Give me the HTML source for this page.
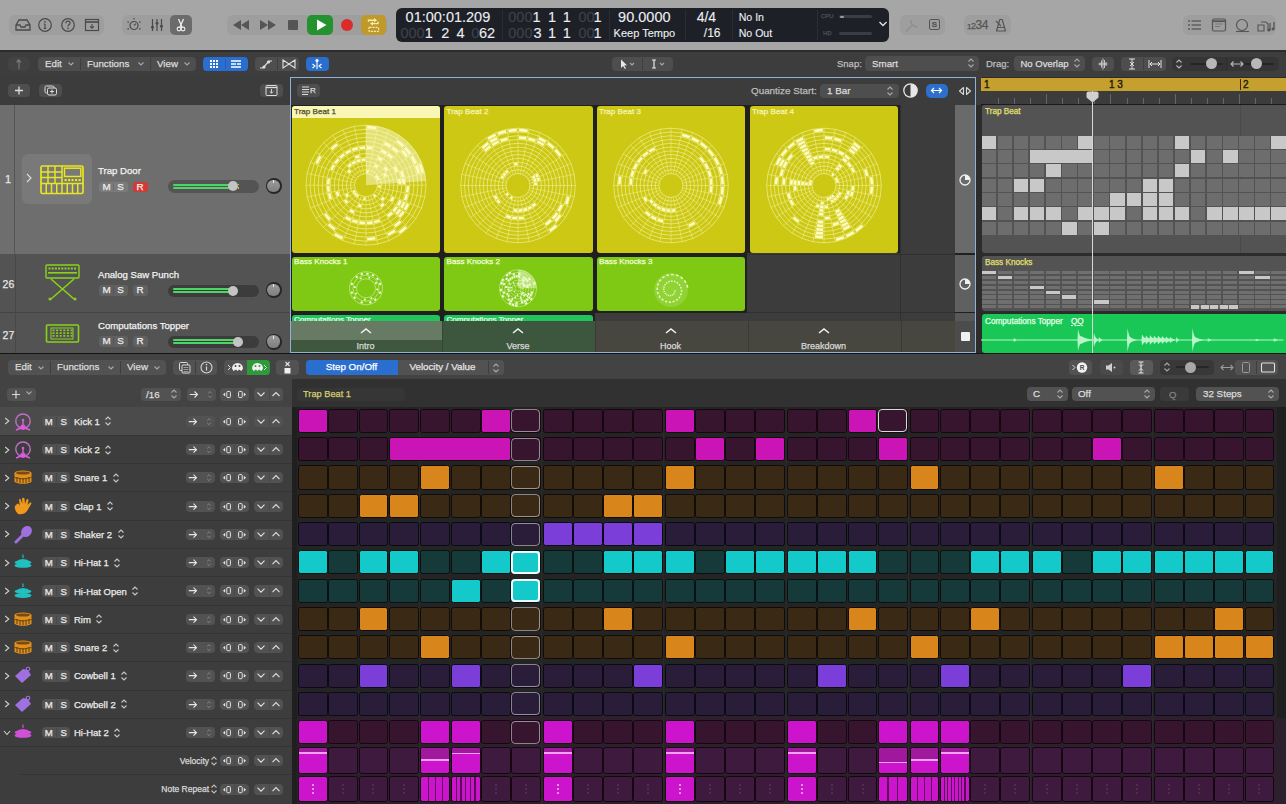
<!DOCTYPE html>
<html><head><meta charset="utf-8"><style>
html,body{margin:0;padding:0;}
body{width:1286px;height:804px;overflow:hidden;position:relative;background:#2a2a2a;font-family:"Liberation Sans", sans-serif;}
svg{display:block;}
div{-webkit-text-stroke:0.25px currentColor;}
</style></head><body>
<div style="position:absolute;left:0px;top:0px;width:1286px;height:50px;background:#a6a6a6;"></div><div style="position:absolute;left:9px;top:15px;width:95px;height:20px;background:#9e9e9e;border-radius:6px;"></div><svg style="position:absolute;left:14px;top:17px;" width="18" height="16" viewBox="0 0 18 16"><path d="M2 8 L5 3 H13 L16 8 V13 H2 Z M2 8 H6 L7 10 H11 L12 8 H16" fill="none" stroke="#4a4a4a" stroke-width="1.3"/></svg><svg style="position:absolute;left:37px;top:17px;" width="16" height="16" viewBox="0 0 16 16"><circle cx="8" cy="8" r="6.3" fill="none" stroke="#4a4a4a" stroke-width="1.2"/><path d="M8 7 V11.5 M6.8 11.5 H9.2 M6.8 7 H8" stroke="#4a4a4a" stroke-width="1.2" fill="none"/><circle cx="8" cy="4.8" r="0.9" fill="#4a4a4a"/></svg><svg style="position:absolute;left:60px;top:17px;" width="16" height="16" viewBox="0 0 16 16"><circle cx="8" cy="8" r="6.3" fill="none" stroke="#4a4a4a" stroke-width="1.2"/><path d="M5.9 6.2 Q6 4.2 8 4.2 Q10.1 4.2 10.1 6.1 Q10.1 7.3 8.6 8 Q8 8.4 8 9.4" stroke="#4a4a4a" stroke-width="1.2" fill="none"/><circle cx="8" cy="11.4" r="0.8" fill="#4a4a4a"/></svg><svg style="position:absolute;left:84px;top:18px;" width="16" height="14" viewBox="0 0 16 14"><rect x="1.5" y="1.5" width="13" height="11" fill="none" stroke="#4a4a4a" stroke-width="1.2"/><path d="M1.5 4 H14.5" stroke="#4a4a4a" stroke-width="1.6"/><path d="M8 6 V10 M6 8.3 L8 10.2 L10 8.3" stroke="#4a4a4a" stroke-width="1.1" fill="none"/></svg><div style="position:absolute;left:122px;top:15px;width:70px;height:20px;background:#9e9e9e;border-radius:6px;"></div><svg style="position:absolute;left:125px;top:16px;" width="18" height="18" viewBox="0 0 18 18"><circle cx="9" cy="9.5" r="4" fill="none" stroke="#4a4a4a" stroke-width="1.2"/><path d="M9 9.5 L10.8 7.6" stroke="#4a4a4a" stroke-width="1.1"/><circle cx="3.1110272542658173" cy="12.899999999999999" r="0.8" fill="#4a4a4a"/><circle cx="3.1110272542658173" cy="6.1" r="0.8" fill="#4a4a4a"/><circle cx="8.999999999999998" cy="2.7" r="0.8" fill="#4a4a4a"/><circle cx="14.888972745734181" cy="6.099999999999997" r="0.8" fill="#4a4a4a"/><circle cx="14.888972745734183" cy="12.899999999999999" r="0.8" fill="#4a4a4a"/></svg><svg style="position:absolute;left:149px;top:17px;" width="16" height="16" viewBox="0 0 16 16"><path d="M3.5 2 V14 M8 2 V14 M12.5 2 V14" stroke="#4a4a4a" stroke-width="1.2"/><rect x="2" y="9" width="3" height="2.4" rx="1" fill="#4a4a4a"/><rect x="6.5" y="5" width="3" height="2.4" rx="1" fill="#4a4a4a"/><rect x="11" y="8" width="3" height="2.4" rx="1" fill="#4a4a4a"/></svg><div style="position:absolute;left:170px;top:15px;width:22px;height:20px;background:#6b6b6b;border-radius:5px;"></div><svg style="position:absolute;left:173px;top:17px;" width="16" height="16" viewBox="0 0 16 16"><path d="M5.5 2 L9 10 M10.5 2 L7 10" stroke="#eee" stroke-width="1.3"/><circle cx="6" cy="12" r="1.9" fill="none" stroke="#eee" stroke-width="1.1"/><circle cx="10" cy="12" r="1.9" fill="none" stroke="#eee" stroke-width="1.1"/></svg><div style="position:absolute;left:227px;top:15px;width:160px;height:20px;background:#9e9e9e;border-radius:6px;"></div><svg style="position:absolute;left:231px;top:18px;" width="20" height="14" viewBox="0 0 20 14"><path d="M10 2 L2 7 L10 12 Z M18 2 L10 7 L18 12 Z" fill="#555"/></svg><svg style="position:absolute;left:258px;top:18px;" width="20" height="14" viewBox="0 0 20 14"><path d="M2 2 L10 7 L2 12 Z M10 2 L18 7 L10 12 Z" fill="#555"/></svg><div style="position:absolute;left:288px;top:20px;width:10px;height:10px;background:#555;border-radius:1px;"></div><div style="position:absolute;left:307px;top:15px;width:26px;height:20px;background:#23922f;border-radius:5px;"></div><svg style="position:absolute;left:313px;top:17px;" width="16" height="16" viewBox="0 0 16 16"><path d="M4 2.5 L13.5 8 L4 13.5 Z" fill="#fff"/></svg><div style="position:absolute;left:341px;top:19px;width:12px;height:12px;background:#dc2b2b;border-radius:50%;"></div><div style="position:absolute;left:360.6px;top:15.2px;width:25.4px;height:20.2px;background:#bf9a2a;border-radius:5px;"></div><svg style="position:absolute;left:360.6px;top:15.2px;" width="25.4" height="20.2" viewBox="0 0 25.4 20.2"><path d="M7.5 6.8 V5.2 H14" fill="none" stroke="#f8eab0" stroke-width="1.4"/><path d="M13 3 L16 5.2 L13 7.4 Z" fill="#f8eab0"/><path d="M17 6.8 V8.6 H11" fill="none" stroke="#f8eab0" stroke-width="1.4"/><path d="M12 6.4 L9 8.6 L12 10.8 Z" fill="#f8eab0"/><rect x="8" y="12.4" width="9.6" height="4" rx="0.6" fill="none" stroke="#f8eab0" stroke-width="1.2" stroke-dasharray="2 1"/></svg><div style="position:absolute;left:396px;top:8px;width:493px;height:34px;background:#1e2027;border-radius:6px;"></div><div style="position:absolute;left:502px;top:10px;width:1px;height:30px;background:#2a2d35;"></div><div style="position:absolute;left:609px;top:10px;width:1px;height:30px;background:#2a2d35;"></div><div style="position:absolute;left:685px;top:10px;width:1px;height:30px;background:#2a2d35;"></div><div style="position:absolute;left:732px;top:10px;width:1px;height:30px;background:#2a2d35;"></div><div style="position:absolute;left:817px;top:10px;width:1px;height:30px;background:#2a2d35;"></div><div style="position:absolute;left:405.59px;top:8.5px;font-size:14.5px;line-height:16.5px;color:#eceef2;white-space:nowrap;line-height:16.5px;-webkit-text-stroke:0.1px currentColor;">01:00:01.209</div><div style="position:absolute;left:400.49px;top:25px;font-size:14.5px;line-height:16.5px;color:#3f424a;white-space:nowrap;line-height:16.5px;-webkit-text-stroke:0.1px currentColor;">000</div><div style="position:absolute;left:424.82px;top:25px;font-size:14.5px;line-height:16.5px;color:#eceef2;white-space:nowrap;line-height:16.5px;-webkit-text-stroke:0.1px currentColor;">1</div><div style="position:absolute;left:441.17px;top:25px;font-size:14.5px;line-height:16.5px;color:#eceef2;white-space:nowrap;line-height:16.5px;-webkit-text-stroke:0.1px currentColor;">2</div><div style="position:absolute;left:456.56px;top:25px;font-size:14.5px;line-height:16.5px;color:#eceef2;white-space:nowrap;line-height:16.5px;-webkit-text-stroke:0.1px currentColor;">4</div><div style="position:absolute;left:471.29px;top:25px;font-size:14.5px;line-height:16.5px;color:#3f424a;white-space:nowrap;line-height:16.5px;-webkit-text-stroke:0.1px currentColor;">0</div><div style="position:absolute;left:479.02px;top:25px;font-size:14.5px;line-height:16.5px;color:#eceef2;white-space:nowrap;line-height:16.5px;-webkit-text-stroke:0.1px currentColor;">62</div><div style="position:absolute;left:508.29px;top:8.5px;font-size:14.5px;line-height:16.5px;color:#3f424a;white-space:nowrap;line-height:16.5px;-webkit-text-stroke:0.1px currentColor;">000</div><div style="position:absolute;left:532.42px;top:8.5px;font-size:14.5px;line-height:16.5px;color:#eceef2;white-space:nowrap;line-height:16.5px;-webkit-text-stroke:0.1px currentColor;">1</div><div style="position:absolute;left:548.12px;top:8.5px;font-size:14.5px;line-height:16.5px;color:#eceef2;white-space:nowrap;line-height:16.5px;-webkit-text-stroke:0.1px currentColor;">1</div><div style="position:absolute;left:562.72px;top:8.5px;font-size:14.5px;line-height:16.5px;color:#eceef2;white-space:nowrap;line-height:16.5px;-webkit-text-stroke:0.1px currentColor;">1</div><div style="position:absolute;left:578.39px;top:8.5px;font-size:14.5px;line-height:16.5px;color:#3f424a;white-space:nowrap;line-height:16.5px;-webkit-text-stroke:0.1px currentColor;">00</div><div style="position:absolute;left:593.62px;top:8.5px;font-size:14.5px;line-height:16.5px;color:#eceef2;white-space:nowrap;line-height:16.5px;-webkit-text-stroke:0.1px currentColor;">1</div><div style="position:absolute;left:508.29px;top:25px;font-size:14.5px;line-height:16.5px;color:#3f424a;white-space:nowrap;line-height:16.5px;-webkit-text-stroke:0.1px currentColor;">000</div><div style="position:absolute;left:533.42px;top:25px;font-size:14.5px;line-height:16.5px;color:#eceef2;white-space:nowrap;line-height:16.5px;-webkit-text-stroke:0.1px currentColor;">3</div><div style="position:absolute;left:548.12px;top:25px;font-size:14.5px;line-height:16.5px;color:#eceef2;white-space:nowrap;line-height:16.5px;-webkit-text-stroke:0.1px currentColor;">1</div><div style="position:absolute;left:562.72px;top:25px;font-size:14.5px;line-height:16.5px;color:#eceef2;white-space:nowrap;line-height:16.5px;-webkit-text-stroke:0.1px currentColor;">1</div><div style="position:absolute;left:578.39px;top:25px;font-size:14.5px;line-height:16.5px;color:#3f424a;white-space:nowrap;line-height:16.5px;-webkit-text-stroke:0.1px currentColor;">00</div><div style="position:absolute;left:593.62px;top:25px;font-size:14.5px;line-height:16.5px;color:#eceef2;white-space:nowrap;line-height:16.5px;-webkit-text-stroke:0.1px currentColor;">1</div><div style="position:absolute;left:618.12px;top:8.5px;font-size:14.5px;line-height:16.5px;color:#eceef2;white-space:nowrap;line-height:16.5px;-webkit-text-stroke:0.1px currentColor;">90.0000</div><div style="position:absolute;left:613.62px;top:26.5px;font-size:11px;line-height:13px;color:#eceef2;white-space:nowrap;line-height:13px;-webkit-text-stroke:0.1px currentColor;">Keep Tempo</div><div style="position:absolute;left:696.66px;top:9px;font-size:14px;line-height:16px;color:#eceef2;white-space:nowrap;line-height:16px;-webkit-text-stroke:0.1px currentColor;">4/4</div><div style="position:absolute;left:703.8px;top:26px;font-size:12px;line-height:14px;color:#eceef2;white-space:nowrap;line-height:14px;-webkit-text-stroke:0.1px currentColor;">/16</div><div style="position:absolute;left:738.65px;top:10.5px;font-size:10.6px;line-height:12.6px;color:#eceef2;white-space:nowrap;line-height:12.6px;-webkit-text-stroke:0.1px currentColor;">No In</div><div style="position:absolute;left:738.65px;top:27px;font-size:10.6px;line-height:12.6px;color:#eceef2;white-space:nowrap;line-height:12.6px;-webkit-text-stroke:0.1px currentColor;">No Out</div><div style="position:absolute;left:821px;top:13px;font-size:6px;line-height:8px;color:#4d5058;white-space:nowrap;line-height:7px;">CPU</div><div style="position:absolute;left:823px;top:30px;font-size:6px;line-height:8px;color:#4d5058;white-space:nowrap;line-height:7px;">HD</div><div style="position:absolute;left:839px;top:15px;width:33px;height:3px;background:#3a3d45;border-radius:2px;"></div><div style="position:absolute;left:840px;top:15.5px;width:4px;height:2px;background:#9a9ca2;border-radius:1px;"></div><div style="position:absolute;left:839px;top:32px;width:33px;height:3px;background:#3a3d45;border-radius:2px;"></div><svg style="position:absolute;left:878px;top:20px;" width="10" height="8" viewBox="0 0 10 8"><path d="M1.5 2 L5 5.5 L8.5 2" fill="none" stroke="#dfe1e6" stroke-width="1.4"/></svg><div style="position:absolute;left:900px;top:15px;width:45px;height:20px;background:#9e9e9e;border-radius:6px;"></div><svg style="position:absolute;left:904px;top:17px;" width="16" height="16" viewBox="0 0 16 16"><path d="M2.5 14 L8.5 8 M8.5 8 L6.8 4.8 Q6.5 4 7.2 3.6 M8.5 8 L11.8 9.8 Q12.5 10.1 12.9 9.4" stroke="#8d8d8d" stroke-width="1.3" fill="none" stroke-linecap="round"/></svg><div style="position:absolute;left:929px;top:19px;width:11px;height:11px;border:1.3px solid #555;border-radius:2px;box-sizing:border-box;font-size:8px;line-height:9px;text-align:center;color:#555;font-weight:bold;">S</div><div style="position:absolute;left:964px;top:15px;width:47px;height:20px;background:#9e9e9e;border-radius:6px;"></div><div style="position:absolute;left:967px;top:18px;font-size:12px;line-height:14px;color:#555;white-space:nowrap;line-height:14px;letter-spacing:-0.5px;"><span style="font-size:8px">1</span><span style="font-size:9px">2</span>34</div><svg style="position:absolute;left:993px;top:17px;" width="16" height="16" viewBox="0 0 16 16"><path d="M3.5 14 L6.8 2.5 H9.2 L12.5 14 Z M4.5 10.5 H11.5" fill="none" stroke="#555" stroke-width="1.2" stroke-linejoin="round"/><path d="M8 9 L3 4" stroke="#555" stroke-width="1.2"/></svg><div style="position:absolute;left:1183px;top:15px;width:93px;height:20px;background:#9e9e9e;border-radius:6px;"></div><svg style="position:absolute;left:1186px;top:17px;" width="18" height="16" viewBox="0 0 18 16"><circle cx="3" cy="4" r="0.9" fill="#555"/><path d="M5.5 4 H15" stroke="#555" stroke-width="1.3"/><circle cx="3" cy="8" r="0.9" fill="#555"/><path d="M5.5 8 H15" stroke="#555" stroke-width="1.3"/><circle cx="3" cy="12" r="0.9" fill="#555"/><path d="M5.5 12 H15" stroke="#555" stroke-width="1.3"/></svg><svg style="position:absolute;left:1211px;top:17px;" width="16" height="16" viewBox="0 0 16 16"><rect x="1.5" y="2" width="13" height="12" rx="1.5" fill="none" stroke="#555" stroke-width="1.2"/><path d="M1.5 4.2 H14.5" stroke="#555" stroke-width="1.8"/><path d="M4 7 H12 M4 9.5 H9" stroke="#777" stroke-width="1"/></svg><svg style="position:absolute;left:1234px;top:17px;" width="18" height="16" viewBox="0 0 18 16"><circle cx="8" cy="8" r="5.5" fill="none" stroke="#555" stroke-width="1.2"/><path d="M2 14.5 H15" stroke="#555" stroke-width="1.1"/></svg><svg style="position:absolute;left:1256px;top:17px;" width="20" height="16" viewBox="0 0 20 16"><path d="M2 8 H8 V14 H2 Z M5 5 H10 L12 7 V14" fill="none" stroke="#555" stroke-width="1.1"/><path d="M14 6 V13 M18 5 V12" stroke="#555" stroke-width="1.3"/><circle cx="13" cy="13" r="1.5" fill="#555"/><circle cx="17" cy="12" r="1.5" fill="#555"/></svg><div style="position:absolute;left:0px;top:50px;width:1286px;height:27px;background:#3d3d3d;"></div><div style="position:absolute;left:0px;top:50px;width:1286px;height:1.5px;background:#2c2c2c;"></div><div style="position:absolute;left:8px;top:57px;width:22px;height:14px;background:#434343;border-radius:5px;"></div><svg style="position:absolute;left:12px;top:57px;" width="14" height="14" viewBox="0 0 14 14"><path d="M7 12 V5 Q7 3 5 3 M9 5.5 L7 3 L4.5 5.5" fill="none" stroke="#777" stroke-width="1.2"/></svg><div style="position:absolute;left:38px;top:57px;width:158px;height:14px;background:#4e4e4e;border-radius:4px;"></div><div style="position:absolute;left:45px;top:57.5px;font-size:9.75px;line-height:11.75px;color:#dcdcdc;white-space:nowrap;">Edit</div><svg style="position:absolute;left:67px;top:60.0px;" width="8" height="8" viewBox="0 0 8 8"><path d="M1.5 2.5 L4 5 L6.5 2.5" fill="none" stroke="#a8a8a8" stroke-width="1.1"/></svg><div style="position:absolute;left:80px;top:58px;width:1px;height:12px;background:#3e3e3e;"></div><div style="position:absolute;left:87px;top:57.5px;font-size:9.75px;line-height:11.75px;color:#dcdcdc;white-space:nowrap;">Functions</div><svg style="position:absolute;left:137px;top:60.0px;" width="8" height="8" viewBox="0 0 8 8"><path d="M1.5 2.5 L4 5 L6.5 2.5" fill="none" stroke="#a8a8a8" stroke-width="1.1"/></svg><div style="position:absolute;left:150px;top:58px;width:1px;height:12px;background:#3e3e3e;"></div><div style="position:absolute;left:157px;top:57.5px;font-size:9.75px;line-height:11.75px;color:#dcdcdc;white-space:nowrap;">View</div><svg style="position:absolute;left:183px;top:60.0px;" width="8" height="8" viewBox="0 0 8 8"><path d="M1.5 2.5 L4 5 L6.5 2.5" fill="none" stroke="#a8a8a8" stroke-width="1.1"/></svg><div style="position:absolute;left:203px;top:57px;width:45px;height:14px;background:#2a6ed0;border-radius:4px;"></div><div style="position:absolute;left:225px;top:58px;width:1px;height:12px;background:#2560b5;"></div><svg style="position:absolute;left:207px;top:57px;" width="14" height="14" viewBox="0 0 14 14"><rect x="3" y="3" width="2" height="2" fill="#fff"/><rect x="6" y="3" width="2" height="2" fill="#fff"/><rect x="9" y="3" width="2" height="2" fill="#fff"/><rect x="3" y="6" width="2" height="2" fill="#fff"/><rect x="6" y="6" width="2" height="2" fill="#fff"/><rect x="9" y="6" width="2" height="2" fill="#fff"/><rect x="3" y="9" width="2" height="2" fill="#fff"/><rect x="6" y="9" width="2" height="2" fill="#fff"/><rect x="9" y="9" width="2" height="2" fill="#fff"/></svg><svg style="position:absolute;left:229px;top:57px;" width="14" height="14" viewBox="0 0 14 14"><path d="M2 4 H12 M2 7 H7 M8 7 H12 M2 10 H12" stroke="#fff" stroke-width="1.5"/></svg><div style="position:absolute;left:255px;top:57px;width:44px;height:14px;background:#4e4e4e;border-radius:4px;"></div><div style="position:absolute;left:277px;top:58px;width:1px;height:12px;background:#3e3e3e;"></div><svg style="position:absolute;left:258px;top:57px;" width="16" height="14" viewBox="0 0 16 14"><path d="M2 11 H5 L11 4 H14" fill="none" stroke="#e0e0e0" stroke-width="1.2"/><circle cx="6" cy="10" r="1.6" fill="#e0e0e0"/><circle cx="10.5" cy="5" r="1.6" fill="#e0e0e0"/></svg><svg style="position:absolute;left:281px;top:57px;" width="16" height="14" viewBox="0 0 16 14"><path d="M2 3 L8 7 L2 11 Z M14 3 L8 7 L14 11 Z" fill="none" stroke="#e0e0e0" stroke-width="1.1"/></svg><div style="position:absolute;left:306px;top:57px;width:23px;height:14px;background:#2a6ed0;border-radius:4px;"></div><svg style="position:absolute;left:310px;top:57px;" width="14" height="14" viewBox="0 0 14 14"><circle cx="7" cy="3.5" r="1.6" fill="#fff"/><path d="M7 4.5 V12 M2.5 7 L5 9 L2.5 11 M11.5 7 L9 9 L11.5 11" fill="none" stroke="#fff" stroke-width="1.1"/></svg><svg style="position:absolute;left:612px;top:57px;" width="61" height="14" viewBox="0 0 61 14"></svg><div style="position:absolute;left:612px;top:57px;width:61px;height:14px;background:#4e4e4e;border-radius:4px;"></div><div style="position:absolute;left:642px;top:58px;width:1px;height:12px;background:#3e3e3e;"></div><svg style="position:absolute;left:617px;top:57px;" width="24" height="14" viewBox="0 0 24 14"><path d="M4 2.5 L4 11 L6 9 L8 12 L9 11.4 L7.2 8.6 L10 8.3 Z" fill="#e8e8e8"/><path d="M13 6 L15 8 L17 6" fill="none" stroke="#a8a8a8" stroke-width="1.1"/></svg><svg style="position:absolute;left:647px;top:57px;" width="24" height="14" viewBox="0 0 24 14"><path d="M5 3 H9 M7 3 V11 M5 11 H9" fill="none" stroke="#e8e8e8" stroke-width="1.2"/><path d="M13 6 L15 8 L17 6" fill="none" stroke="#a8a8a8" stroke-width="1.1"/></svg><div style="position:absolute;left:837px;top:57.5px;font-size:9.5px;line-height:11.5px;color:#bdbdbd;white-space:nowrap;">Snap:</div><div style="position:absolute;left:865px;top:56px;width:114px;height:15px;background:#4e4e4e;border-radius:4px;"></div><div style="position:absolute;left:872px;top:57.5px;font-size:9.75px;line-height:11.75px;color:#dcdcdc;white-space:nowrap;">Smart</div><svg style="position:absolute;left:967px;top:57px;" width="8" height="12" viewBox="0 0 8 12"><path d="M1.5 4.5 L4 2 L6.5 4.5 M1.5 7.5 L4 10 L6.5 7.5" fill="none" stroke="#a8a8a8" stroke-width="1.1"/></svg><div style="position:absolute;left:986px;top:57.5px;font-size:9.5px;line-height:11.5px;color:#bdbdbd;white-space:nowrap;">Drag:</div><div style="position:absolute;left:1014px;top:56px;width:71px;height:15px;background:#4e4e4e;border-radius:4px;"></div><div style="position:absolute;left:1020.5px;top:57.5px;font-size:9.5px;line-height:11.5px;color:#dcdcdc;white-space:nowrap;">No Overlap</div><svg style="position:absolute;left:1073px;top:57px;" width="8" height="12" viewBox="0 0 8 12"><path d="M1.5 4.5 L4 2 L6.5 4.5 M1.5 7.5 L4 10 L6.5 7.5" fill="none" stroke="#a8a8a8" stroke-width="1.1"/></svg><div style="position:absolute;left:1092px;top:57px;width:22px;height:14px;background:#4e4e4e;border-radius:4px;"></div><svg style="position:absolute;left:1095px;top:57px;" width="16" height="14" viewBox="0 0 16 14"><path d="M5 5.5 V8.5 M6.5 3.5 V10.5 M8 1.5 V12.5 M9.5 3 V11 M11 5 V9" stroke="#e0e0e0" stroke-width="0.8"/><path d="M3.5 7 H12.5" stroke="#e0e0e0" stroke-width="0.8"/></svg><div style="position:absolute;left:1121px;top:57px;width:45px;height:14px;background:#4e4e4e;border-radius:4px;"></div><div style="position:absolute;left:1143px;top:58px;width:1px;height:12px;background:#3e3e3e;"></div><svg style="position:absolute;left:1124px;top:57px;" width="16" height="14" viewBox="0 0 16 14"><path d="M8 2 V12 M5 2 H11 M5 12 H11 M6 5 L8 7 L10 5 M6 9 L8 7 L10 9" fill="none" stroke="#e0e0e0" stroke-width="1"/></svg><svg style="position:absolute;left:1147px;top:57px;" width="16" height="14" viewBox="0 0 16 14"><path d="M2 3 V11 M14 3 V11 M3 7 H13 M5 5 L3 7 L5 9 M11 5 L13 7 L11 9" fill="none" stroke="#e0e0e0" stroke-width="1"/></svg><div style="position:absolute;left:1172px;top:57px;width:107px;height:14px;background:#353535;border-radius:5px;"></div><svg style="position:absolute;left:1175px;top:58px;" width="8" height="12" viewBox="0 0 8 12"><path d="M1.5 4.5 L4 2 L6.5 4.5 M1.5 7.5 L4 10 L6.5 7.5" fill="none" stroke="#b8b8b8" stroke-width="1.1"/></svg><div style="position:absolute;left:1190px;top:63px;width:33px;height:2px;background:#262626;border-radius:1px;"></div><div style="position:absolute;left:1206px;top:58px;width:11px;height:11px;background:#b8b8b8;border-radius:50%;"></div><div style="position:absolute;left:1226px;top:58px;width:1px;height:12px;background:#2e2e2e;"></div><svg style="position:absolute;left:1229px;top:57px;" width="16" height="14" viewBox="0 0 16 14"><path d="M2 7 H14 M4.5 4.5 L2 7 L4.5 9.5 M11.5 4.5 L14 7 L11.5 9.5" fill="none" stroke="#b8b8b8" stroke-width="1.1"/></svg><div style="position:absolute;left:1244px;top:63px;width:30px;height:2px;background:#262626;border-radius:1px;"></div><div style="position:absolute;left:1251px;top:58px;width:11px;height:11px;background:#b8b8b8;border-radius:50%;"></div><div style="position:absolute;left:0px;top:77px;width:290px;height:28px;background:#3c3c3c;"></div><div style="position:absolute;left:8px;top:84px;width:22px;height:13px;background:#4e4e4e;border-radius:4px;"></div><svg style="position:absolute;left:12px;top:84px;" width="14" height="13" viewBox="0 0 14 13"><path d="M7 2.5 V10.5 M3 6.5 H11" stroke="#dcdcdc" stroke-width="1.3"/></svg><div style="position:absolute;left:39px;top:84px;width:23px;height:13px;background:#4e4e4e;border-radius:4px;"></div><svg style="position:absolute;left:43px;top:84px;" width="16" height="13" viewBox="0 0 16 13"><rect x="2" y="2" width="9" height="7" rx="1.5" fill="none" stroke="#dcdcdc" stroke-width="1"/><rect x="4.5" y="4" width="9" height="7" rx="1.5" fill="#4a4a4a" stroke="#dcdcdc" stroke-width="1"/><path d="M9 5.5 V9.5 M7 7.5 H11" stroke="#dcdcdc" stroke-width="1"/></svg><div style="position:absolute;left:260px;top:84px;width:23px;height:13px;background:#4e4e4e;border-radius:4px;"></div><svg style="position:absolute;left:264px;top:84px;" width="16" height="13" viewBox="0 0 16 13"><rect x="2" y="1.5" width="11" height="10" rx="1" fill="none" stroke="#dcdcdc" stroke-width="1"/><path d="M2 3.5 H13" stroke="#dcdcdc" stroke-width="1.3"/><path d="M7.5 5 V9 M5.8 7.5 L7.5 9.2 L9.2 7.5" fill="none" stroke="#dcdcdc" stroke-width="0.9"/></svg><div style="position:absolute;left:0px;top:105px;width:290px;height:149px;background:#6e6e6e;"></div><div style="position:absolute;left:14px;top:105px;width:1.2px;height:149px;background:#555555;"></div><div style="position:absolute;left:0px;top:254px;width:290px;height:58px;background:#535353;"></div><div style="position:absolute;left:0px;top:311.5px;width:290px;height:1px;background:#444;"></div><div style="position:absolute;left:0px;top:312.5px;width:290px;height:40px;background:#535353;"></div><div style="position:absolute;left:14.6px;top:254px;width:1.2px;height:98.5px;background:#484848;"></div><div style="position:absolute;left:4px;top:173px;font-size:11px;line-height:13px;color:#e6e6e6;white-space:nowrap;width:8px;text-align:center;">1</div><div style="position:absolute;left:2.6px;top:277.5px;font-size:10.5px;line-height:12.5px;color:#e6e6e6;white-space:nowrap;">26</div><div style="position:absolute;left:2.6px;top:328.5px;font-size:10.5px;line-height:12.5px;color:#e6e6e6;white-space:nowrap;">27</div><div style="position:absolute;left:21.5px;top:154px;width:70.5px;height:50px;background:#797979;border-radius:6px;"></div><svg style="position:absolute;left:25px;top:172px;" width="8" height="12" viewBox="0 0 8 12"><path d="M2 2 L6 6 L2 10" fill="none" stroke="#e0e0e0" stroke-width="1.1"/></svg><svg style="position:absolute;left:40.3px;top:164.6px;" width="44" height="30" viewBox="0 0 44 30"><rect x="1" y="1" width="42" height="27.5" rx="1.5" fill="none" stroke="#e8e620" stroke-width="1.7"/><path d="M1 18.5 H43 M1 7 H22 M1 12.5 H22 M8 1 V18.5 M15 1 V18.5 M22 1 V18.5" stroke="#e8e620" stroke-width="1.5" fill="none"/><rect x="24.5" y="3.2" width="16.3" height="8.3" fill="none" stroke="#e8e620" stroke-width="1.5"/><rect x="24.5" y="14" width="2.2" height="2.2" fill="#e8e620"/><rect x="28.0" y="14" width="2.2" height="2.2" fill="#e8e620"/><rect x="31.5" y="14" width="2.2" height="2.2" fill="#e8e620"/><rect x="35.0" y="14" width="2.2" height="2.2" fill="#e8e620"/><rect x="38.5" y="14" width="2.2" height="2.2" fill="#e8e620"/><path d="M6.25 18.5 V28" stroke="#e8e620" stroke-width="1.5"/><path d="M11.50 18.5 V28" stroke="#e8e620" stroke-width="1.5"/><path d="M16.75 18.5 V28" stroke="#e8e620" stroke-width="1.5"/><path d="M22.00 18.5 V28" stroke="#e8e620" stroke-width="1.5"/><path d="M27.25 18.5 V28" stroke="#e8e620" stroke-width="1.5"/><path d="M32.50 18.5 V28" stroke="#e8e620" stroke-width="1.5"/><path d="M37.75 18.5 V28" stroke="#e8e620" stroke-width="1.5"/></svg><div style="position:absolute;left:98px;top:165px;font-size:9.6px;line-height:11.6px;color:#f2f2f2;white-space:nowrap;">Trap Door</div><div style="position:absolute;left:99px;top:181.5px;width:28.5px;height:10.5px;background:#7b7b7b;border-radius:3px;"></div><div style="position:absolute;left:113px;top:182.5px;width:1px;height:8.5px;background:rgba(0,0,0,0.12);"></div><div style="position:absolute;left:99.5px;top:180.5px;font-size:9.8px;line-height:11.8px;color:#ececec;white-space:nowrap;line-height:12.5px;width:14px;text-align:center;">M</div><div style="position:absolute;left:113.5px;top:180.5px;font-size:9.8px;line-height:11.8px;color:#ececec;white-space:nowrap;line-height:12.5px;width:14px;text-align:center;">S</div><div style="position:absolute;left:132.5px;top:181.5px;width:15px;height:10.5px;background:#d33a33;border-radius:3px;"></div><div style="position:absolute;left:132.5px;top:180.5px;font-size:9.8px;line-height:11.8px;color:#f4f4f4;white-space:nowrap;line-height:12.5px;width:15px;text-align:center;">R</div><div style="position:absolute;left:98px;top:269px;font-size:9.6px;line-height:11.6px;color:#f2f2f2;white-space:nowrap;">Analog Saw Punch</div><div style="position:absolute;left:99px;top:285px;width:28.5px;height:10.5px;background:#616161;border-radius:3px;"></div><div style="position:absolute;left:113px;top:286px;width:1px;height:8.5px;background:rgba(0,0,0,0.12);"></div><div style="position:absolute;left:99.5px;top:284px;font-size:9.8px;line-height:11.8px;color:#ececec;white-space:nowrap;line-height:12.5px;width:14px;text-align:center;">M</div><div style="position:absolute;left:113.5px;top:284px;font-size:9.8px;line-height:11.8px;color:#ececec;white-space:nowrap;line-height:12.5px;width:14px;text-align:center;">S</div><div style="position:absolute;left:132.5px;top:285px;width:15px;height:10.5px;background:#616161;border-radius:3px;"></div><div style="position:absolute;left:132.5px;top:284px;font-size:9.8px;line-height:11.8px;color:#f4f4f4;white-space:nowrap;line-height:12.5px;width:15px;text-align:center;">R</div><div style="position:absolute;left:98px;top:320px;font-size:9.6px;line-height:11.6px;color:#f2f2f2;white-space:nowrap;">Computations Topper</div><div style="position:absolute;left:99px;top:336px;width:28.5px;height:10.5px;background:#616161;border-radius:3px;"></div><div style="position:absolute;left:113px;top:337px;width:1px;height:8.5px;background:rgba(0,0,0,0.12);"></div><div style="position:absolute;left:99.5px;top:335px;font-size:9.8px;line-height:11.8px;color:#ececec;white-space:nowrap;line-height:12.5px;width:14px;text-align:center;">M</div><div style="position:absolute;left:113.5px;top:335px;font-size:9.8px;line-height:11.8px;color:#ececec;white-space:nowrap;line-height:12.5px;width:14px;text-align:center;">S</div><div style="position:absolute;left:132.5px;top:336px;width:15px;height:10.5px;background:#616161;border-radius:3px;"></div><div style="position:absolute;left:132.5px;top:335px;font-size:9.8px;line-height:11.8px;color:#f4f4f4;white-space:nowrap;line-height:12.5px;width:15px;text-align:center;">R</div><div style="position:absolute;left:167.5px;top:180px;width:91.5px;height:12.5px;background:#545454;border-radius:6.5px;"></div><div style="position:absolute;left:172.5px;top:183.6px;width:60.5px;height:2px;background:#4fd466;border-radius:1px;"></div><div style="position:absolute;left:172.5px;top:186.9px;width:60.5px;height:2px;background:#4fd466;border-radius:1px;"></div><div style="position:absolute;left:227.8px;top:181.1px;width:10.4px;height:10.4px;background:#c4c4c4;border-radius:50%;"></div><div style="position:absolute;left:237.5px;top:183.5px;width:1px;height:1.5px;background:#d8c020;"></div><div style="position:absolute;left:237.5px;top:187px;width:1px;height:1.5px;background:#d8c020;"></div><div style="position:absolute;left:265.5px;top:178px;width:16px;height:16px;background:#262626;border-radius:50%;"></div><div style="position:absolute;left:267.2px;top:179.7px;width:12.6px;height:12.6px;background:linear-gradient(#9c9c9c,#7e7e7e);border-radius:50%;"></div><div style="position:absolute;left:272.9px;top:180px;width:1.2px;height:3.2px;background:#e8e8e8;"></div><div style="position:absolute;left:167.5px;top:284.5px;width:91.5px;height:12.5px;background:#3c3c3c;border-radius:6.5px;"></div><div style="position:absolute;left:172.5px;top:288.1px;width:60.5px;height:2px;background:#4fd466;border-radius:1px;"></div><div style="position:absolute;left:172.5px;top:291.4px;width:60.5px;height:2px;background:#4fd466;border-radius:1px;"></div><div style="position:absolute;left:227.8px;top:285.6px;width:10.4px;height:10.4px;background:#c4c4c4;border-radius:50%;"></div><div style="position:absolute;left:265.5px;top:282px;width:16px;height:16px;background:#262626;border-radius:50%;"></div><div style="position:absolute;left:267.2px;top:283.7px;width:12.6px;height:12.6px;background:linear-gradient(#9c9c9c,#7e7e7e);border-radius:50%;"></div><div style="position:absolute;left:272.9px;top:284px;width:1.2px;height:3.2px;background:#e8e8e8;"></div><div style="position:absolute;left:167.5px;top:335.5px;width:91.5px;height:12.5px;background:#3c3c3c;border-radius:6.5px;"></div><div style="position:absolute;left:172.5px;top:339.1px;width:65.5px;height:2px;background:#4fd466;border-radius:1px;"></div><div style="position:absolute;left:172.5px;top:342.4px;width:65.5px;height:2px;background:#4fd466;border-radius:1px;"></div><div style="position:absolute;left:232.8px;top:336.6px;width:10.4px;height:10.4px;background:#c4c4c4;border-radius:50%;"></div><div style="position:absolute;left:265.5px;top:333.5px;width:16px;height:16px;background:#262626;border-radius:50%;"></div><div style="position:absolute;left:267.2px;top:335.2px;width:12.6px;height:12.6px;background:linear-gradient(#9c9c9c,#7e7e7e);border-radius:50%;"></div><div style="position:absolute;left:272.9px;top:335.5px;width:1.2px;height:3.2px;background:#e8e8e8;"></div><svg style="position:absolute;left:44px;top:263px;" width="38" height="38" viewBox="0 0 38 38"><rect x="2" y="2" width="33" height="13" rx="1" fill="none" stroke="#8ad21a" stroke-width="1.4"/><rect x="4.5" y="4.5" width="2" height="2" fill="#8ad21a"/><rect x="7.7" y="4.5" width="2" height="2" fill="#8ad21a"/><rect x="10.9" y="4.5" width="2" height="2" fill="#8ad21a"/><rect x="14.100000000000001" y="4.5" width="2" height="2" fill="#8ad21a"/><rect x="17.3" y="4.5" width="2" height="2" fill="#8ad21a"/><rect x="20.5" y="4.5" width="2" height="2" fill="#8ad21a"/><rect x="23.700000000000003" y="4.5" width="2" height="2" fill="#8ad21a"/><rect x="26.900000000000002" y="4.5" width="2" height="2" fill="#8ad21a"/><rect x="30.1" y="4.5" width="2" height="2" fill="#8ad21a"/><rect x="4" y="9" width="29" height="1.6" fill="#8ad21a"/><path d="M7 16 L30 36 M30 16 L7 36" stroke="#8ad21a" stroke-width="1.6"/><circle cx="6" cy="36" r="1.5" fill="#8ad21a"/><circle cx="31" cy="36" r="1.5" fill="#8ad21a"/></svg><svg style="position:absolute;left:45px;top:323px;" width="36" height="22" viewBox="0 0 36 22"><rect x="1.5" y="2" width="32" height="17" rx="1" fill="none" stroke="#8ad21a" stroke-width="1.6"/><rect x="6" y="5" width="22" height="11" fill="none" stroke="#8ad21a" stroke-width="1"/><rect x="7.5" y="6.5" width="2" height="1.6" fill="#8ad21a"/><rect x="11.1" y="6.5" width="2" height="1.6" fill="#8ad21a"/><rect x="14.7" y="6.5" width="2" height="1.6" fill="#8ad21a"/><rect x="18.3" y="6.5" width="2" height="1.6" fill="#8ad21a"/><rect x="21.9" y="6.5" width="2" height="1.6" fill="#8ad21a"/><rect x="25.5" y="6.5" width="2" height="1.6" fill="#8ad21a"/><rect x="7.5" y="9.3" width="2" height="1.6" fill="#8ad21a"/><rect x="11.1" y="9.3" width="2" height="1.6" fill="#8ad21a"/><rect x="14.7" y="9.3" width="2" height="1.6" fill="#8ad21a"/><rect x="18.3" y="9.3" width="2" height="1.6" fill="#8ad21a"/><rect x="21.9" y="9.3" width="2" height="1.6" fill="#8ad21a"/><rect x="25.5" y="9.3" width="2" height="1.6" fill="#8ad21a"/><rect x="7.5" y="12.1" width="2" height="1.6" fill="#8ad21a"/><rect x="11.1" y="12.1" width="2" height="1.6" fill="#8ad21a"/><rect x="14.7" y="12.1" width="2" height="1.6" fill="#8ad21a"/><rect x="18.3" y="12.1" width="2" height="1.6" fill="#8ad21a"/><rect x="21.9" y="12.1" width="2" height="1.6" fill="#8ad21a"/><rect x="25.5" y="12.1" width="2" height="1.6" fill="#8ad21a"/></svg><div style="position:absolute;left:289.5px;top:77px;width:686px;height:276px;background:#202020;"></div><div style="position:absolute;left:290px;top:77.5px;width:685px;height:27px;background:#3c3c3c;"></div><div style="position:absolute;left:297px;top:84px;width:23px;height:13px;background:#4e4e4e;border-radius:4px;"></div><svg style="position:absolute;left:300px;top:84px;" width="18" height="13" viewBox="0 0 18 13"><path d="M2 3 H9 M2 5.5 H9 M2 8 H9 M2 10.5 H8" stroke="#dcdcdc" stroke-width="1.2"/></svg><div style="position:absolute;left:310px;top:86px;font-size:8px;line-height:10px;color:#dcdcdc;white-space:nowrap;line-height:10px;">R</div><div style="position:absolute;left:751px;top:84.5px;font-size:9.85px;line-height:11.85px;color:#bdbdbd;white-space:nowrap;">Quantize Start:</div><div style="position:absolute;left:820px;top:83.5px;width:78.5px;height:14px;background:#4e4e4e;border-radius:4px;"></div><div style="position:absolute;left:827px;top:84.5px;font-size:9.85px;line-height:11.85px;color:#dcdcdc;white-space:nowrap;">1 Bar</div><svg style="position:absolute;left:886px;top:84.5px;" width="8" height="12" viewBox="0 0 8 12"><path d="M1.5 4.5 L4 2 L6.5 4.5 M1.5 7.5 L4 10 L6.5 7.5" fill="none" stroke="#a8a8a8" stroke-width="1.1"/></svg><svg style="position:absolute;left:902px;top:82px;" width="17" height="17" viewBox="0 0 17 17"><circle cx="8.5" cy="8.5" r="6.7" fill="none" stroke="#e6e6e6" stroke-width="1.3"/><path d="M8.5 1.8 A6.7 6.7 0 0 1 8.5 15.2 Z" fill="#e6e6e6"/></svg><div style="position:absolute;left:925.5px;top:83.5px;width:22px;height:14px;background:#2d6fcd;border-radius:5px;"></div><svg style="position:absolute;left:929px;top:84px;" width="15" height="13" viewBox="0 0 15 13"><path d="M2.5 6.5 H12.5 M5 4 L2.5 6.5 L5 9 M10 4 L12.5 6.5 L10 9" fill="none" stroke="#fff" stroke-width="1.2"/></svg><div style="position:absolute;left:955px;top:77.5px;width:20px;height:27px;background:#3c3c3c;"></div><svg style="position:absolute;left:958px;top:85px;" width="14" height="12" viewBox="0 0 14 12"><path d="M5.5 2.5 L1.5 6 L5.5 9.5 Z M8.5 2.5 L12.5 6 L8.5 9.5 Z" fill="none" stroke="#d8d8d8" stroke-width="1.1" stroke-linejoin="round"/></svg><div style="position:absolute;left:955px;top:104.5px;width:20px;height:148.5px;background:#6a6a6a;"></div><div style="position:absolute;left:955px;top:254.5px;width:20px;height:57px;background:#606060;"></div><div style="position:absolute;left:955px;top:313px;width:20px;height:7.5px;background:#585858;"></div><div style="position:absolute;left:955px;top:320.5px;width:20px;height:32px;background:#4c4c4c;"></div><svg style="position:absolute;left:958px;top:172.5px;" width="14" height="14" viewBox="0 0 14 14"><circle cx="7" cy="7" r="5" fill="none" stroke="#f0f0f0" stroke-width="1.3"/><path d="M7 7 V2 A5 5 0 0 1 12 7 Z" fill="#f0f0f0"/></svg><svg style="position:absolute;left:958px;top:276.5px;" width="14" height="14" viewBox="0 0 14 14"><circle cx="7" cy="7" r="5" fill="none" stroke="#f0f0f0" stroke-width="1.3"/><path d="M7 7 V2 A5 5 0 0 1 12 7 Z" fill="#f0f0f0"/></svg><div style="position:absolute;left:960.5px;top:332px;width:9px;height:9px;background:#f0f0f0;border-radius:1px;"></div><div style="position:absolute;left:291.5px;top:105.5px;width:148.5px;height:147px;background:#cdc814;border-radius:3px;"></div><div style="position:absolute;left:291.5px;top:105.5px;width:148.5px;height:12px;background:#faf7b4;border-radius:3px 3px 0 0;"></div><div style="position:absolute;left:294.0px;top:105.5px;font-size:8.1px;line-height:10.1px;color:#4a4a30;white-space:nowrap;line-height:12px;">Trap Beat 1</div><svg style="position:absolute;left:291.5px;top:105.5px;" width="148.5" height="147" viewBox="0 0 148.5 147"><path d="M74 79.2 L74.00 19.20 A60 60 0 0 1 133.85 75.01 Z" fill="rgba(255,255,230,0.45)"/><circle cx="74" cy="79.2" r="11.50" fill="none" stroke="rgba(255,255,200,0.5)" stroke-width="1.0"/><circle cx="74" cy="79.2" r="15.54" fill="none" stroke="rgba(255,255,200,0.5)" stroke-width="1.0"/><circle cx="74" cy="79.2" r="19.58" fill="none" stroke="rgba(255,255,200,0.5)" stroke-width="1.0"/><circle cx="74" cy="79.2" r="23.62" fill="none" stroke="rgba(255,255,200,0.5)" stroke-width="1.0"/><circle cx="74" cy="79.2" r="27.67" fill="none" stroke="rgba(255,255,200,0.5)" stroke-width="1.0"/><circle cx="74" cy="79.2" r="31.71" fill="none" stroke="rgba(255,255,200,0.5)" stroke-width="1.0"/><circle cx="74" cy="79.2" r="35.75" fill="none" stroke="rgba(255,255,200,0.5)" stroke-width="1.0"/><circle cx="74" cy="79.2" r="39.79" fill="none" stroke="rgba(255,255,200,0.5)" stroke-width="1.0"/><circle cx="74" cy="79.2" r="43.83" fill="none" stroke="rgba(255,255,200,0.5)" stroke-width="1.0"/><circle cx="74" cy="79.2" r="47.88" fill="none" stroke="rgba(255,255,200,0.5)" stroke-width="1.0"/><circle cx="74" cy="79.2" r="51.92" fill="none" stroke="rgba(255,255,200,0.5)" stroke-width="1.0"/><circle cx="74" cy="79.2" r="55.96" fill="none" stroke="rgba(255,255,200,0.5)" stroke-width="1.0"/><circle cx="74" cy="79.2" r="60.00" fill="none" stroke="rgba(255,255,200,0.5)" stroke-width="1.0"/><path d="M74.00 67.70 L74.00 19.20" stroke="rgba(255,255,200,0.5)" stroke-width="0.75"/><path d="M76.24 67.92 L85.71 20.35" stroke="rgba(255,255,200,0.5)" stroke-width="0.75"/><path d="M78.40 68.58 L96.96 23.77" stroke="rgba(255,255,200,0.5)" stroke-width="0.75"/><path d="M80.39 69.64 L107.33 29.31" stroke="rgba(255,255,200,0.5)" stroke-width="0.75"/><path d="M82.13 71.07 L116.43 36.77" stroke="rgba(255,255,200,0.5)" stroke-width="0.75"/><path d="M83.56 72.81 L123.89 45.87" stroke="rgba(255,255,200,0.5)" stroke-width="0.75"/><path d="M84.62 74.80 L129.43 56.24" stroke="rgba(255,255,200,0.5)" stroke-width="0.75"/><path d="M85.28 76.96 L132.85 67.49" stroke="rgba(255,255,200,0.5)" stroke-width="0.75"/><path d="M85.50 79.20 L134.00 79.20" stroke="rgba(255,255,200,0.5)" stroke-width="0.75"/><path d="M85.28 81.44 L132.85 90.91" stroke="rgba(255,255,200,0.5)" stroke-width="0.75"/><path d="M84.62 83.60 L129.43 102.16" stroke="rgba(255,255,200,0.5)" stroke-width="0.75"/><path d="M83.56 85.59 L123.89 112.53" stroke="rgba(255,255,200,0.5)" stroke-width="0.75"/><path d="M82.13 87.33 L116.43 121.63" stroke="rgba(255,255,200,0.5)" stroke-width="0.75"/><path d="M80.39 88.76 L107.33 129.09" stroke="rgba(255,255,200,0.5)" stroke-width="0.75"/><path d="M78.40 89.82 L96.96 134.63" stroke="rgba(255,255,200,0.5)" stroke-width="0.75"/><path d="M76.24 90.48 L85.71 138.05" stroke="rgba(255,255,200,0.5)" stroke-width="0.75"/><path d="M74.00 90.70 L74.00 139.20" stroke="rgba(255,255,200,0.5)" stroke-width="0.75"/><path d="M71.76 90.48 L62.29 138.05" stroke="rgba(255,255,200,0.5)" stroke-width="0.75"/><path d="M69.60 89.82 L51.04 134.63" stroke="rgba(255,255,200,0.5)" stroke-width="0.75"/><path d="M67.61 88.76 L40.67 129.09" stroke="rgba(255,255,200,0.5)" stroke-width="0.75"/><path d="M65.87 87.33 L31.57 121.63" stroke="rgba(255,255,200,0.5)" stroke-width="0.75"/><path d="M64.44 85.59 L24.11 112.53" stroke="rgba(255,255,200,0.5)" stroke-width="0.75"/><path d="M63.38 83.60 L18.57 102.16" stroke="rgba(255,255,200,0.5)" stroke-width="0.75"/><path d="M62.72 81.44 L15.15 90.91" stroke="rgba(255,255,200,0.5)" stroke-width="0.75"/><path d="M62.50 79.20 L14.00 79.20" stroke="rgba(255,255,200,0.5)" stroke-width="0.75"/><path d="M62.72 76.96 L15.15 67.49" stroke="rgba(255,255,200,0.5)" stroke-width="0.75"/><path d="M63.38 74.80 L18.57 56.24" stroke="rgba(255,255,200,0.5)" stroke-width="0.75"/><path d="M64.44 72.81 L24.11 45.87" stroke="rgba(255,255,200,0.5)" stroke-width="0.75"/><path d="M65.87 71.07 L31.57 36.77" stroke="rgba(255,255,200,0.5)" stroke-width="0.75"/><path d="M67.61 69.64 L40.67 29.31" stroke="rgba(255,255,200,0.5)" stroke-width="0.75"/><path d="M69.60 68.58 L51.04 23.77" stroke="rgba(255,255,200,0.5)" stroke-width="0.75"/><path d="M71.76 67.92 L62.29 20.35" stroke="rgba(255,255,200,0.5)" stroke-width="0.75"/><path d="M75.21 21.23 A57.98 57.98 0 0 1 84.12 22.11 M128.02 58.14 A57.98 57.98 0 0 1 130.62 66.70 M114.13 121.05 A57.98 57.98 0 0 1 107.21 126.72 M50.70 132.29 A57.98 57.98 0 0 1 42.81 128.07 M104.90 34.99 A53.94 53.94 0 0 1 111.33 40.27 M112.93 41.87 A53.94 53.94 0 0 1 118.21 48.30 M119.47 50.18 A53.94 53.94 0 0 1 123.39 57.52 M124.25 59.61 A53.94 53.94 0 0 1 126.67 67.57 M103.02 124.67 A53.94 53.94 0 0 1 95.68 128.59 M83.41 132.31 A53.94 53.94 0 0 1 75.13 133.13 M43.10 123.41 A53.94 53.94 0 0 1 36.67 118.13 M24.61 57.52 A53.94 53.94 0 0 1 28.53 50.18 M110.01 44.66 A49.90 49.90 0 0 1 114.90 50.62 M108.54 115.21 A49.90 49.90 0 0 1 102.58 120.10 M37.99 113.74 A49.90 49.90 0 0 1 33.10 107.78 M39.46 43.19 A49.90 49.90 0 0 1 45.42 38.30 M92.43 37.21 A45.85 45.85 0 0 1 98.67 40.55 M100.27 41.62 A45.85 45.85 0 0 1 105.74 46.10 M115.99 97.63 A45.85 45.85 0 0 1 112.65 103.87 M111.58 105.47 A45.85 45.85 0 0 1 107.10 110.94 M115.80 80.08 A41.81 41.81 0 0 1 115.17 86.50 M114.83 88.21 A41.81 41.81 0 0 1 112.96 94.39 M112.29 96.01 A41.81 41.81 0 0 1 109.24 101.70 M108.27 103.15 A41.81 41.81 0 0 1 104.18 108.14 M74.79 41.44 A37.77 37.77 0 0 1 80.59 42.01 M89.18 44.61 A37.77 37.77 0 0 1 94.32 47.36 M95.64 48.24 A37.77 37.77 0 0 1 100.14 51.94 M109.19 65.48 A37.77 37.77 0 0 1 110.88 71.06 M111.19 72.61 A37.77 37.77 0 0 1 111.76 78.41 M108.59 94.38 A37.77 37.77 0 0 1 105.84 99.52 M104.96 100.84 A37.77 37.77 0 0 1 101.26 105.34 M100.14 106.46 A37.77 37.77 0 0 1 95.64 110.16 M87.72 114.39 A37.77 37.77 0 0 1 82.14 116.08 M80.59 116.39 A37.77 37.77 0 0 1 74.79 116.96 M73.21 116.96 A37.77 37.77 0 0 1 67.41 116.39 M65.86 116.08 A37.77 37.77 0 0 1 60.28 114.39 M58.82 113.79 A37.77 37.77 0 0 1 53.68 111.04 M38.81 92.92 A37.77 37.77 0 0 1 37.12 87.34 M36.81 85.79 A37.77 37.77 0 0 1 36.24 79.99 M36.24 78.41 A37.77 37.77 0 0 1 36.81 72.61 M39.41 64.02 A37.77 37.77 0 0 1 42.16 58.88 M43.04 57.56 A37.77 37.77 0 0 1 46.74 53.06 M47.86 51.94 A37.77 37.77 0 0 1 52.36 48.24 M53.68 47.36 A37.77 37.77 0 0 1 58.82 44.61 M60.28 44.01 A37.77 37.77 0 0 1 65.86 42.32 M67.41 42.01 A37.77 37.77 0 0 1 73.21 41.44 M102.43 61.05 A33.73 33.73 0 0 1 104.88 65.64 M107.21 73.31 A33.73 33.73 0 0 1 107.72 78.49 M85.93 52.02 A29.69 29.69 0 0 1 89.97 54.18 M101.18 91.13 A29.69 29.69 0 0 1 99.02 95.17 M62.07 106.38 A29.69 29.69 0 0 1 58.03 104.22 M46.34 89.98 A29.69 29.69 0 0 1 45.01 85.60 M63.22 51.54 A29.69 29.69 0 0 1 67.60 50.21 M92.51 61.45 A25.65 25.65 0 0 1 95.02 64.51 M91.75 97.71 A25.65 25.65 0 0 1 88.69 100.22 M55.49 96.95 A25.65 25.65 0 0 1 52.98 93.89 M56.25 60.69 A25.65 25.65 0 0 1 59.31 58.18 M60.20 57.58 A25.65 25.65 0 0 1 63.69 55.72 M64.68 55.31 A25.65 25.65 0 0 1 68.47 54.16 M69.52 53.95 A25.65 25.65 0 0 1 73.46 53.56 M82.68 59.42 A21.60 21.60 0 0 1 85.62 60.99 M92.21 67.58 A21.60 21.60 0 0 1 93.78 70.52 M91.71 91.58 A21.60 21.60 0 0 1 89.59 94.15 M69.34 100.30 A21.60 21.60 0 0 1 66.15 99.33 M55.79 90.82 A21.60 21.60 0 0 1 54.22 87.88 M56.29 66.82 A21.60 21.60 0 0 1 58.41 64.25 M74.28 65.68 A13.52 13.52 0 0 1 76.36 65.89 M83.76 69.84 A13.52 13.52 0 0 1 85.08 71.45 M85.40 71.93 A13.52 13.52 0 0 1 86.38 73.77 M87.52 79.48 A13.52 13.52 0 0 1 87.31 81.56 M83.36 88.96 A13.52 13.52 0 0 1 81.75 90.28 M73.72 92.72 A13.52 13.52 0 0 1 71.64 92.51 M66.25 90.28 A13.52 13.52 0 0 1 64.64 88.96 M64.24 88.56 A13.52 13.52 0 0 1 62.92 86.95 M62.60 86.47 A13.52 13.52 0 0 1 61.62 84.63 " fill="none" stroke="#fffcc2" stroke-width="2.6"/></svg><div style="position:absolute;left:444px;top:105.5px;width:148.5px;height:147px;background:#cdc814;border-radius:3px;"></div><div style="position:absolute;left:446.5px;top:105.5px;font-size:8.1px;line-height:10.1px;color:#f7f4b8;white-space:nowrap;line-height:12px;">Trap Beat 2</div><svg style="position:absolute;left:444px;top:105.5px;" width="148.5" height="147" viewBox="0 0 148.5 147"><circle cx="74" cy="79.5" r="12.00" fill="none" stroke="rgba(255,255,200,0.5)" stroke-width="1.0"/><circle cx="74" cy="79.5" r="15.78" fill="none" stroke="rgba(255,255,200,0.5)" stroke-width="1.0"/><circle cx="74" cy="79.5" r="19.55" fill="none" stroke="rgba(255,255,200,0.5)" stroke-width="1.0"/><circle cx="74" cy="79.5" r="23.32" fill="none" stroke="rgba(255,255,200,0.5)" stroke-width="1.0"/><circle cx="74" cy="79.5" r="27.10" fill="none" stroke="rgba(255,255,200,0.5)" stroke-width="1.0"/><circle cx="74" cy="79.5" r="30.88" fill="none" stroke="rgba(255,255,200,0.5)" stroke-width="1.0"/><circle cx="74" cy="79.5" r="34.65" fill="none" stroke="rgba(255,255,200,0.5)" stroke-width="1.0"/><circle cx="74" cy="79.5" r="38.42" fill="none" stroke="rgba(255,255,200,0.5)" stroke-width="1.0"/><circle cx="74" cy="79.5" r="42.20" fill="none" stroke="rgba(255,255,200,0.5)" stroke-width="1.0"/><circle cx="74" cy="79.5" r="45.98" fill="none" stroke="rgba(255,255,200,0.5)" stroke-width="1.0"/><circle cx="74" cy="79.5" r="49.75" fill="none" stroke="rgba(255,255,200,0.5)" stroke-width="1.0"/><circle cx="74" cy="79.5" r="53.52" fill="none" stroke="rgba(255,255,200,0.5)" stroke-width="1.0"/><circle cx="74" cy="79.5" r="57.30" fill="none" stroke="rgba(255,255,200,0.5)" stroke-width="1.0"/><path d="M74.00 67.50 L74.00 22.20" stroke="rgba(255,255,200,0.5)" stroke-width="0.75"/><path d="M76.34 67.73 L85.18 23.30" stroke="rgba(255,255,200,0.5)" stroke-width="0.75"/><path d="M78.59 68.41 L95.93 26.56" stroke="rgba(255,255,200,0.5)" stroke-width="0.75"/><path d="M80.67 69.52 L105.83 31.86" stroke="rgba(255,255,200,0.5)" stroke-width="0.75"/><path d="M82.49 71.01 L114.52 38.98" stroke="rgba(255,255,200,0.5)" stroke-width="0.75"/><path d="M83.98 72.83 L121.64 47.67" stroke="rgba(255,255,200,0.5)" stroke-width="0.75"/><path d="M85.09 74.91 L126.94 57.57" stroke="rgba(255,255,200,0.5)" stroke-width="0.75"/><path d="M85.77 77.16 L130.20 68.32" stroke="rgba(255,255,200,0.5)" stroke-width="0.75"/><path d="M86.00 79.50 L131.30 79.50" stroke="rgba(255,255,200,0.5)" stroke-width="0.75"/><path d="M85.77 81.84 L130.20 90.68" stroke="rgba(255,255,200,0.5)" stroke-width="0.75"/><path d="M85.09 84.09 L126.94 101.43" stroke="rgba(255,255,200,0.5)" stroke-width="0.75"/><path d="M83.98 86.17 L121.64 111.33" stroke="rgba(255,255,200,0.5)" stroke-width="0.75"/><path d="M82.49 87.99 L114.52 120.02" stroke="rgba(255,255,200,0.5)" stroke-width="0.75"/><path d="M80.67 89.48 L105.83 127.14" stroke="rgba(255,255,200,0.5)" stroke-width="0.75"/><path d="M78.59 90.59 L95.93 132.44" stroke="rgba(255,255,200,0.5)" stroke-width="0.75"/><path d="M76.34 91.27 L85.18 135.70" stroke="rgba(255,255,200,0.5)" stroke-width="0.75"/><path d="M74.00 91.50 L74.00 136.80" stroke="rgba(255,255,200,0.5)" stroke-width="0.75"/><path d="M71.66 91.27 L62.82 135.70" stroke="rgba(255,255,200,0.5)" stroke-width="0.75"/><path d="M69.41 90.59 L52.07 132.44" stroke="rgba(255,255,200,0.5)" stroke-width="0.75"/><path d="M67.33 89.48 L42.17 127.14" stroke="rgba(255,255,200,0.5)" stroke-width="0.75"/><path d="M65.51 87.99 L33.48 120.02" stroke="rgba(255,255,200,0.5)" stroke-width="0.75"/><path d="M64.02 86.17 L26.36 111.33" stroke="rgba(255,255,200,0.5)" stroke-width="0.75"/><path d="M62.91 84.09 L21.06 101.43" stroke="rgba(255,255,200,0.5)" stroke-width="0.75"/><path d="M62.23 81.84 L17.80 90.68" stroke="rgba(255,255,200,0.5)" stroke-width="0.75"/><path d="M62.00 79.50 L16.70 79.50" stroke="rgba(255,255,200,0.5)" stroke-width="0.75"/><path d="M62.23 77.16 L17.80 68.32" stroke="rgba(255,255,200,0.5)" stroke-width="0.75"/><path d="M62.91 74.91 L21.06 57.57" stroke="rgba(255,255,200,0.5)" stroke-width="0.75"/><path d="M64.02 72.83 L26.36 47.67" stroke="rgba(255,255,200,0.5)" stroke-width="0.75"/><path d="M65.51 71.01 L33.48 38.98" stroke="rgba(255,255,200,0.5)" stroke-width="0.75"/><path d="M67.33 69.52 L42.17 31.86" stroke="rgba(255,255,200,0.5)" stroke-width="0.75"/><path d="M69.41 68.41 L52.07 26.56" stroke="rgba(255,255,200,0.5)" stroke-width="0.75"/><path d="M71.66 67.73 L62.82 23.30" stroke="rgba(255,255,200,0.5)" stroke-width="0.75"/><path d="M75.16 24.10 A55.41 55.41 0 0 1 83.67 24.94 M112.35 119.49 A55.41 55.41 0 0 1 105.74 124.92 M44.19 32.79 A55.41 55.41 0 0 1 51.73 28.76 M53.87 27.87 A55.41 55.41 0 0 1 62.05 25.39 M64.33 24.94 A55.41 55.41 0 0 1 72.84 24.10 M94.76 32.22 A51.64 51.64 0 0 1 101.78 35.97 M103.58 37.18 A51.64 51.64 0 0 1 109.74 42.23 M111.27 43.76 A51.64 51.64 0 0 1 116.32 49.92 M124.42 90.63 A51.64 51.64 0 0 1 122.11 98.26 M116.32 109.08 A51.64 51.64 0 0 1 111.27 115.24 M38.26 42.23 A51.64 51.64 0 0 1 44.42 37.18 M46.22 35.97 A51.64 51.64 0 0 1 53.24 32.22 M75.00 31.65 A47.86 47.86 0 0 1 82.35 32.37 M84.32 32.76 A47.86 47.86 0 0 1 91.39 34.91 M93.24 35.67 A47.86 47.86 0 0 1 99.75 39.16 M117.83 98.74 A47.86 47.86 0 0 1 114.34 105.25 M113.23 106.92 A47.86 47.86 0 0 1 108.55 112.63 M107.13 114.05 A47.86 47.86 0 0 1 101.42 118.73 M40.87 44.95 A47.86 47.86 0 0 1 46.58 40.27 M48.25 39.16 A47.86 47.86 0 0 1 54.76 35.67 M56.61 34.91 A47.86 47.86 0 0 1 63.68 32.76 M79.72 111.76 A32.76 32.76 0 0 1 74.69 112.26 M73.31 112.26 A32.76 32.76 0 0 1 68.28 111.76 M66.94 111.49 A32.76 32.76 0 0 1 62.10 110.02 M91.45 97.70 A25.21 25.21 0 0 1 88.44 100.17 M87.57 100.75 A25.21 25.21 0 0 1 84.13 102.59 M83.16 102.99 A25.21 25.21 0 0 1 79.44 104.12 M78.40 104.33 A25.21 25.21 0 0 1 74.53 104.71 M73.47 104.71 A25.21 25.21 0 0 1 69.60 104.33 M55.80 96.95 A25.21 25.21 0 0 1 53.33 93.94 M52.75 93.07 A25.21 25.21 0 0 1 50.91 89.63 M92.07 67.97 A21.44 21.44 0 0 1 93.63 70.88 M93.97 71.71 A21.44 21.44 0 0 1 94.93 74.88 M70.26 58.39 A21.44 21.44 0 0 1 73.55 58.07 M88.89 70.00 A17.66 17.66 0 0 1 90.17 72.40 M90.46 73.08 A17.66 17.66 0 0 1 91.25 75.69 M91.39 76.42 A17.66 17.66 0 0 1 91.66 79.13 M57.83 72.40 A17.66 17.66 0 0 1 59.11 70.00 M59.52 69.38 A17.66 17.66 0 0 1 61.25 67.28 M61.78 66.75 A17.66 17.66 0 0 1 63.88 65.02 M68.42 92.22 A13.89 13.89 0 0 1 66.53 91.21 M63.98 89.11 A13.89 13.89 0 0 1 62.62 87.46 " fill="none" stroke="#fffcc2" stroke-width="2.6"/></svg><div style="position:absolute;left:596.5px;top:105.5px;width:148.5px;height:147px;background:#cdc814;border-radius:3px;"></div><div style="position:absolute;left:599.0px;top:105.5px;font-size:8.1px;line-height:10.1px;color:#f7f4b8;white-space:nowrap;line-height:12px;">Trap Beat 3</div><svg style="position:absolute;left:596.5px;top:105.5px;" width="148.5" height="147" viewBox="0 0 148.5 147"><circle cx="74" cy="79.5" r="12.00" fill="none" stroke="rgba(255,255,200,0.5)" stroke-width="1.0"/><circle cx="74" cy="79.5" r="15.78" fill="none" stroke="rgba(255,255,200,0.5)" stroke-width="1.0"/><circle cx="74" cy="79.5" r="19.55" fill="none" stroke="rgba(255,255,200,0.5)" stroke-width="1.0"/><circle cx="74" cy="79.5" r="23.32" fill="none" stroke="rgba(255,255,200,0.5)" stroke-width="1.0"/><circle cx="74" cy="79.5" r="27.10" fill="none" stroke="rgba(255,255,200,0.5)" stroke-width="1.0"/><circle cx="74" cy="79.5" r="30.88" fill="none" stroke="rgba(255,255,200,0.5)" stroke-width="1.0"/><circle cx="74" cy="79.5" r="34.65" fill="none" stroke="rgba(255,255,200,0.5)" stroke-width="1.0"/><circle cx="74" cy="79.5" r="38.42" fill="none" stroke="rgba(255,255,200,0.5)" stroke-width="1.0"/><circle cx="74" cy="79.5" r="42.20" fill="none" stroke="rgba(255,255,200,0.5)" stroke-width="1.0"/><circle cx="74" cy="79.5" r="45.98" fill="none" stroke="rgba(255,255,200,0.5)" stroke-width="1.0"/><circle cx="74" cy="79.5" r="49.75" fill="none" stroke="rgba(255,255,200,0.5)" stroke-width="1.0"/><circle cx="74" cy="79.5" r="53.52" fill="none" stroke="rgba(255,255,200,0.5)" stroke-width="1.0"/><circle cx="74" cy="79.5" r="57.30" fill="none" stroke="rgba(255,255,200,0.5)" stroke-width="1.0"/><path d="M74.00 67.50 L74.00 22.20" stroke="rgba(255,255,200,0.5)" stroke-width="0.75"/><path d="M76.34 67.73 L85.18 23.30" stroke="rgba(255,255,200,0.5)" stroke-width="0.75"/><path d="M78.59 68.41 L95.93 26.56" stroke="rgba(255,255,200,0.5)" stroke-width="0.75"/><path d="M80.67 69.52 L105.83 31.86" stroke="rgba(255,255,200,0.5)" stroke-width="0.75"/><path d="M82.49 71.01 L114.52 38.98" stroke="rgba(255,255,200,0.5)" stroke-width="0.75"/><path d="M83.98 72.83 L121.64 47.67" stroke="rgba(255,255,200,0.5)" stroke-width="0.75"/><path d="M85.09 74.91 L126.94 57.57" stroke="rgba(255,255,200,0.5)" stroke-width="0.75"/><path d="M85.77 77.16 L130.20 68.32" stroke="rgba(255,255,200,0.5)" stroke-width="0.75"/><path d="M86.00 79.50 L131.30 79.50" stroke="rgba(255,255,200,0.5)" stroke-width="0.75"/><path d="M85.77 81.84 L130.20 90.68" stroke="rgba(255,255,200,0.5)" stroke-width="0.75"/><path d="M85.09 84.09 L126.94 101.43" stroke="rgba(255,255,200,0.5)" stroke-width="0.75"/><path d="M83.98 86.17 L121.64 111.33" stroke="rgba(255,255,200,0.5)" stroke-width="0.75"/><path d="M82.49 87.99 L114.52 120.02" stroke="rgba(255,255,200,0.5)" stroke-width="0.75"/><path d="M80.67 89.48 L105.83 127.14" stroke="rgba(255,255,200,0.5)" stroke-width="0.75"/><path d="M78.59 90.59 L95.93 132.44" stroke="rgba(255,255,200,0.5)" stroke-width="0.75"/><path d="M76.34 91.27 L85.18 135.70" stroke="rgba(255,255,200,0.5)" stroke-width="0.75"/><path d="M74.00 91.50 L74.00 136.80" stroke="rgba(255,255,200,0.5)" stroke-width="0.75"/><path d="M71.66 91.27 L62.82 135.70" stroke="rgba(255,255,200,0.5)" stroke-width="0.75"/><path d="M69.41 90.59 L52.07 132.44" stroke="rgba(255,255,200,0.5)" stroke-width="0.75"/><path d="M67.33 89.48 L42.17 127.14" stroke="rgba(255,255,200,0.5)" stroke-width="0.75"/><path d="M65.51 87.99 L33.48 120.02" stroke="rgba(255,255,200,0.5)" stroke-width="0.75"/><path d="M64.02 86.17 L26.36 111.33" stroke="rgba(255,255,200,0.5)" stroke-width="0.75"/><path d="M62.91 84.09 L21.06 101.43" stroke="rgba(255,255,200,0.5)" stroke-width="0.75"/><path d="M62.23 81.84 L17.80 90.68" stroke="rgba(255,255,200,0.5)" stroke-width="0.75"/><path d="M62.00 79.50 L16.70 79.50" stroke="rgba(255,255,200,0.5)" stroke-width="0.75"/><path d="M62.23 77.16 L17.80 68.32" stroke="rgba(255,255,200,0.5)" stroke-width="0.75"/><path d="M62.91 74.91 L21.06 57.57" stroke="rgba(255,255,200,0.5)" stroke-width="0.75"/><path d="M64.02 72.83 L26.36 47.67" stroke="rgba(255,255,200,0.5)" stroke-width="0.75"/><path d="M65.51 71.01 L33.48 38.98" stroke="rgba(255,255,200,0.5)" stroke-width="0.75"/><path d="M67.33 69.52 L42.17 31.86" stroke="rgba(255,255,200,0.5)" stroke-width="0.75"/><path d="M69.41 68.41 L52.07 26.56" stroke="rgba(255,255,200,0.5)" stroke-width="0.75"/><path d="M71.66 67.73 L62.82 23.30" stroke="rgba(255,255,200,0.5)" stroke-width="0.75"/><path d="M85.13 29.08 A51.64 51.64 0 0 1 92.76 31.39 M94.76 32.22 A51.64 51.64 0 0 1 101.78 35.97 M103.58 37.18 A51.64 51.64 0 0 1 109.74 42.23 M111.27 43.76 A51.64 51.64 0 0 1 116.32 49.92 M117.53 51.72 A51.64 51.64 0 0 1 121.28 58.74 M122.11 60.74 A51.64 51.64 0 0 1 124.42 68.37 M124.85 70.49 A51.64 51.64 0 0 1 125.63 78.42 M125.63 80.58 A51.64 51.64 0 0 1 124.85 88.51 M124.42 90.63 A51.64 51.64 0 0 1 122.11 98.26 M22.37 78.42 A51.64 51.64 0 0 1 23.15 70.49 M97.72 116.66 A44.09 44.09 0 0 1 91.72 119.87 M103.10 51.60 A40.31 40.31 0 0 1 107.04 56.41 M107.98 57.81 A40.31 40.31 0 0 1 110.91 63.30 M111.56 64.86 A40.31 40.31 0 0 1 113.36 70.81 M113.69 72.47 A40.31 40.31 0 0 1 114.30 78.66 M114.30 80.34 A40.31 40.31 0 0 1 113.69 86.53 M33.70 78.66 A40.31 40.31 0 0 1 34.31 72.47 M34.64 70.81 A40.31 40.31 0 0 1 36.44 64.86 M37.09 63.30 A40.31 40.31 0 0 1 40.02 57.81 M40.96 56.41 A40.31 40.31 0 0 1 44.90 51.60 M46.10 50.40 A40.31 40.31 0 0 1 50.91 46.46 M52.31 45.52 A40.31 40.31 0 0 1 57.80 42.59 M66.12 115.18 A36.54 36.54 0 0 1 60.73 113.54 M59.31 112.96 A36.54 36.54 0 0 1 54.34 110.30 M53.07 109.45 A36.54 36.54 0 0 1 48.71 105.87 M49.57 95.10 A28.99 28.99 0 0 1 47.46 91.15 M47.46 67.85 A28.99 28.99 0 0 1 49.57 63.90 M78.40 104.33 A25.21 25.21 0 0 1 74.53 104.71 M73.47 104.71 A25.21 25.21 0 0 1 69.60 104.33 M68.56 104.12 A25.21 25.21 0 0 1 64.84 102.99 M63.87 102.59 A25.21 25.21 0 0 1 60.43 100.75 M59.56 100.17 A25.21 25.21 0 0 1 56.55 97.70 M55.80 96.95 A25.21 25.21 0 0 1 53.33 93.94 " fill="none" stroke="#fffcc2" stroke-width="2.6"/></svg><div style="position:absolute;left:749.5px;top:105.5px;width:148.5px;height:147px;background:#cdc814;border-radius:3px;"></div><div style="position:absolute;left:752.0px;top:105.5px;font-size:8.1px;line-height:10.1px;color:#f7f4b8;white-space:nowrap;line-height:12px;">Trap Beat 4</div><svg style="position:absolute;left:749.5px;top:105.5px;" width="148.5" height="147" viewBox="0 0 148.5 147"><circle cx="74" cy="79.5" r="12.00" fill="none" stroke="rgba(255,255,200,0.5)" stroke-width="1.0"/><circle cx="74" cy="79.5" r="15.78" fill="none" stroke="rgba(255,255,200,0.5)" stroke-width="1.0"/><circle cx="74" cy="79.5" r="19.55" fill="none" stroke="rgba(255,255,200,0.5)" stroke-width="1.0"/><circle cx="74" cy="79.5" r="23.32" fill="none" stroke="rgba(255,255,200,0.5)" stroke-width="1.0"/><circle cx="74" cy="79.5" r="27.10" fill="none" stroke="rgba(255,255,200,0.5)" stroke-width="1.0"/><circle cx="74" cy="79.5" r="30.88" fill="none" stroke="rgba(255,255,200,0.5)" stroke-width="1.0"/><circle cx="74" cy="79.5" r="34.65" fill="none" stroke="rgba(255,255,200,0.5)" stroke-width="1.0"/><circle cx="74" cy="79.5" r="38.42" fill="none" stroke="rgba(255,255,200,0.5)" stroke-width="1.0"/><circle cx="74" cy="79.5" r="42.20" fill="none" stroke="rgba(255,255,200,0.5)" stroke-width="1.0"/><circle cx="74" cy="79.5" r="45.98" fill="none" stroke="rgba(255,255,200,0.5)" stroke-width="1.0"/><circle cx="74" cy="79.5" r="49.75" fill="none" stroke="rgba(255,255,200,0.5)" stroke-width="1.0"/><circle cx="74" cy="79.5" r="53.52" fill="none" stroke="rgba(255,255,200,0.5)" stroke-width="1.0"/><circle cx="74" cy="79.5" r="57.30" fill="none" stroke="rgba(255,255,200,0.5)" stroke-width="1.0"/><path d="M74.00 67.50 L74.00 22.20" stroke="rgba(255,255,200,0.5)" stroke-width="0.75"/><path d="M76.34 67.73 L85.18 23.30" stroke="rgba(255,255,200,0.5)" stroke-width="0.75"/><path d="M78.59 68.41 L95.93 26.56" stroke="rgba(255,255,200,0.5)" stroke-width="0.75"/><path d="M80.67 69.52 L105.83 31.86" stroke="rgba(255,255,200,0.5)" stroke-width="0.75"/><path d="M82.49 71.01 L114.52 38.98" stroke="rgba(255,255,200,0.5)" stroke-width="0.75"/><path d="M83.98 72.83 L121.64 47.67" stroke="rgba(255,255,200,0.5)" stroke-width="0.75"/><path d="M85.09 74.91 L126.94 57.57" stroke="rgba(255,255,200,0.5)" stroke-width="0.75"/><path d="M85.77 77.16 L130.20 68.32" stroke="rgba(255,255,200,0.5)" stroke-width="0.75"/><path d="M86.00 79.50 L131.30 79.50" stroke="rgba(255,255,200,0.5)" stroke-width="0.75"/><path d="M85.77 81.84 L130.20 90.68" stroke="rgba(255,255,200,0.5)" stroke-width="0.75"/><path d="M85.09 84.09 L126.94 101.43" stroke="rgba(255,255,200,0.5)" stroke-width="0.75"/><path d="M83.98 86.17 L121.64 111.33" stroke="rgba(255,255,200,0.5)" stroke-width="0.75"/><path d="M82.49 87.99 L114.52 120.02" stroke="rgba(255,255,200,0.5)" stroke-width="0.75"/><path d="M80.67 89.48 L105.83 127.14" stroke="rgba(255,255,200,0.5)" stroke-width="0.75"/><path d="M78.59 90.59 L95.93 132.44" stroke="rgba(255,255,200,0.5)" stroke-width="0.75"/><path d="M76.34 91.27 L85.18 135.70" stroke="rgba(255,255,200,0.5)" stroke-width="0.75"/><path d="M74.00 91.50 L74.00 136.80" stroke="rgba(255,255,200,0.5)" stroke-width="0.75"/><path d="M71.66 91.27 L62.82 135.70" stroke="rgba(255,255,200,0.5)" stroke-width="0.75"/><path d="M69.41 90.59 L52.07 132.44" stroke="rgba(255,255,200,0.5)" stroke-width="0.75"/><path d="M67.33 89.48 L42.17 127.14" stroke="rgba(255,255,200,0.5)" stroke-width="0.75"/><path d="M65.51 87.99 L33.48 120.02" stroke="rgba(255,255,200,0.5)" stroke-width="0.75"/><path d="M64.02 86.17 L26.36 111.33" stroke="rgba(255,255,200,0.5)" stroke-width="0.75"/><path d="M62.91 84.09 L21.06 101.43" stroke="rgba(255,255,200,0.5)" stroke-width="0.75"/><path d="M62.23 81.84 L17.80 90.68" stroke="rgba(255,255,200,0.5)" stroke-width="0.75"/><path d="M62.00 79.50 L16.70 79.50" stroke="rgba(255,255,200,0.5)" stroke-width="0.75"/><path d="M62.23 77.16 L17.80 68.32" stroke="rgba(255,255,200,0.5)" stroke-width="0.75"/><path d="M62.91 74.91 L21.06 57.57" stroke="rgba(255,255,200,0.5)" stroke-width="0.75"/><path d="M64.02 72.83 L26.36 47.67" stroke="rgba(255,255,200,0.5)" stroke-width="0.75"/><path d="M65.51 71.01 L33.48 38.98" stroke="rgba(255,255,200,0.5)" stroke-width="0.75"/><path d="M67.33 69.52 L42.17 31.86" stroke="rgba(255,255,200,0.5)" stroke-width="0.75"/><path d="M69.41 68.41 L52.07 26.56" stroke="rgba(255,255,200,0.5)" stroke-width="0.75"/><path d="M71.66 67.73 L62.82 23.30" stroke="rgba(255,255,200,0.5)" stroke-width="0.75"/><path d="M112.35 119.49 A55.41 55.41 0 0 1 105.74 124.92 M103.81 126.21 A55.41 55.41 0 0 1 96.27 130.24 M94.13 131.13 A55.41 55.41 0 0 1 85.95 133.61 M64.33 24.94 A55.41 55.41 0 0 1 72.84 24.10 M26.72 58.74 A51.64 51.64 0 0 1 30.47 51.72 M31.68 49.92 A51.64 51.64 0 0 1 36.73 43.76 M38.26 42.23 A51.64 51.64 0 0 1 44.42 37.18 M103.58 37.18 A51.64 51.64 0 0 1 109.74 42.23 M72.92 131.13 A51.64 51.64 0 0 1 64.99 130.35 M46.22 35.97 A51.64 51.64 0 0 1 53.24 32.22 M75.00 31.65 A47.86 47.86 0 0 1 82.35 32.37 M84.32 32.76 A47.86 47.86 0 0 1 91.39 34.91 M121.13 71.15 A47.86 47.86 0 0 1 121.85 78.50 M121.85 80.50 A47.86 47.86 0 0 1 121.13 87.85 M30.17 60.26 A47.86 47.86 0 0 1 33.66 53.75 M101.42 40.27 A47.86 47.86 0 0 1 107.13 44.95 M99.75 119.84 A47.86 47.86 0 0 1 93.24 123.33 M73.00 127.35 A47.86 47.86 0 0 1 65.65 126.63 M26.15 78.50 A47.86 47.86 0 0 1 26.87 71.15 M48.25 39.16 A47.86 47.86 0 0 1 54.76 35.67 M115.08 63.49 A44.09 44.09 0 0 1 117.05 70.00 M97.72 116.66 A44.09 44.09 0 0 1 91.72 119.87 M48.74 115.64 A44.09 44.09 0 0 1 43.49 111.32 M30.95 70.00 A44.09 44.09 0 0 1 32.92 63.49 M33.63 61.78 A44.09 44.09 0 0 1 36.84 55.78 M37.86 54.24 A44.09 44.09 0 0 1 42.18 48.99 M99.26 43.36 A44.09 44.09 0 0 1 104.51 47.68 M73.08 123.58 A44.09 44.09 0 0 1 66.31 122.91 M50.28 42.34 A44.09 44.09 0 0 1 56.28 39.13 M95.69 113.48 A40.31 40.31 0 0 1 90.20 116.41 M88.64 117.06 A40.31 40.31 0 0 1 82.69 118.86 M73.16 119.80 A40.31 40.31 0 0 1 66.97 119.19 M33.70 78.66 A40.31 40.31 0 0 1 34.31 72.47 M52.31 45.52 A40.31 40.31 0 0 1 57.80 42.59 M74.77 42.97 A36.54 36.54 0 0 1 80.38 43.52 M81.88 43.82 A36.54 36.54 0 0 1 87.27 45.46 M88.69 46.04 A36.54 36.54 0 0 1 93.66 48.70 M43.20 99.16 A36.54 36.54 0 0 1 40.54 94.19 M39.96 92.77 A36.54 36.54 0 0 1 38.32 87.38 M94.93 49.55 A36.54 36.54 0 0 1 99.29 53.13 M93.66 110.30 A36.54 36.54 0 0 1 88.69 112.96 M73.23 116.03 A36.54 36.54 0 0 1 67.62 115.48 M54.34 48.70 A36.54 36.54 0 0 1 59.31 46.04 M97.65 56.82 A32.76 32.76 0 0 1 100.85 60.73 M101.62 61.87 A32.76 32.76 0 0 1 104.00 66.33 M79.72 111.76 A32.76 32.76 0 0 1 74.69 112.26 M92.77 52.65 A32.76 32.76 0 0 1 96.68 55.85 M91.63 107.12 A32.76 32.76 0 0 1 87.17 109.50 M41.24 78.81 A32.76 32.76 0 0 1 41.74 73.78 M56.37 51.88 A32.76 32.76 0 0 1 60.83 49.50 M74.61 50.52 A28.99 28.99 0 0 1 79.06 50.96 M102.98 80.11 A28.99 28.99 0 0 1 102.54 84.56 M102.31 85.75 A28.99 28.99 0 0 1 101.01 90.03 M45.46 84.56 A28.99 28.99 0 0 1 45.02 80.11 M45.02 78.89 A28.99 28.99 0 0 1 45.46 74.44 M58.40 55.07 A28.99 28.99 0 0 1 62.35 52.96 M63.47 52.49 A28.99 28.99 0 0 1 67.75 51.19 M68.94 50.96 A28.99 28.99 0 0 1 73.39 50.52 M89.60 103.93 A28.99 28.99 0 0 1 85.65 106.04 M73.39 108.48 A28.99 28.99 0 0 1 68.94 108.04 M98.62 84.94 A25.21 25.21 0 0 1 97.49 88.66 M97.09 89.63 A25.21 25.21 0 0 1 95.25 93.07 M88.44 58.83 A25.21 25.21 0 0 1 91.45 61.30 M73.47 104.71 A25.21 25.21 0 0 1 69.60 104.33 M48.79 78.97 A25.21 25.21 0 0 1 49.17 75.10 M60.43 58.25 A25.21 25.21 0 0 1 63.87 56.41 M77.74 100.61 A21.44 21.44 0 0 1 74.45 100.93 M73.55 100.93 A21.44 21.44 0 0 1 70.26 100.61 M69.38 100.43 A21.44 21.44 0 0 1 66.21 99.47 M86.28 61.93 A21.44 21.44 0 0 1 88.84 64.03 M52.57 79.05 A21.44 21.44 0 0 1 52.89 75.76 M90.17 86.60 A17.66 17.66 0 0 1 88.89 89.00 M88.48 89.62 A17.66 17.66 0 0 1 86.75 91.72 M86.22 92.25 A17.66 17.66 0 0 1 84.12 93.98 M83.50 94.39 A17.66 17.66 0 0 1 81.10 95.67 M73.63 97.16 A17.66 17.66 0 0 1 70.92 96.89 M56.34 79.13 A17.66 17.66 0 0 1 56.61 76.42 M81.96 68.12 A13.89 13.89 0 0 1 83.61 69.48 M85.71 72.03 A13.89 13.89 0 0 1 86.72 73.92 M86.94 74.46 A13.89 13.89 0 0 1 87.56 76.51 M83.61 89.52 A13.89 13.89 0 0 1 81.96 90.88 M81.47 91.21 A13.89 13.89 0 0 1 79.58 92.22 M79.04 92.44 A13.89 13.89 0 0 1 76.99 93.06 M60.12 79.21 A13.89 13.89 0 0 1 60.33 77.08 M60.44 76.51 A13.89 13.89 0 0 1 61.06 74.46 " fill="none" stroke="#fffcc2" stroke-width="2.6"/></svg><div style="position:absolute;left:291.5px;top:256.5px;width:148.5px;height:54.5px;background:#7fc814;border-radius:3px;"></div><div style="position:absolute;left:294.0px;top:256px;font-size:8.1px;line-height:10.1px;color:#f2ffdc;white-space:nowrap;line-height:12px;">Bass Knocks 1</div><svg style="position:absolute;left:291.5px;top:256.5px;" width="148.5" height="54.5" viewBox="0 0 148.5 54.5"><circle cx="74" cy="31.3" r="9.50" fill="none" stroke="rgba(240,255,215,0.6)" stroke-width="0.8"/><circle cx="74" cy="31.3" r="13.00" fill="none" stroke="rgba(240,255,215,0.6)" stroke-width="0.8"/><circle cx="74" cy="31.3" r="16.50" fill="none" stroke="rgba(240,255,215,0.6)" stroke-width="0.8"/><path d="M74.31 16.55 A14.75 14.75 0 0 1 76.57 16.78 M79.93 17.79 A14.75 14.75 0 0 1 81.94 18.87 M84.65 21.09 A14.75 14.75 0 0 1 86.09 22.85 M87.74 25.94 A14.75 14.75 0 0 1 88.40 28.12 M88.40 34.48 A14.75 14.75 0 0 1 87.74 36.66 M84.21 41.95 A14.75 14.75 0 0 1 82.45 43.39 M79.36 45.04 A14.75 14.75 0 0 1 77.18 45.70 M70.82 45.70 A14.75 14.75 0 0 1 68.64 45.04 M63.35 41.51 A14.75 14.75 0 0 1 61.91 39.75 M60.26 36.66 A14.75 14.75 0 0 1 59.60 34.48 M59.60 28.12 A14.75 14.75 0 0 1 60.26 25.94 M63.79 20.65 A14.75 14.75 0 0 1 65.55 19.21 M68.64 17.56 A14.75 14.75 0 0 1 70.82 16.90 M76.43 20.31 A11.25 11.25 0 0 1 78.09 20.82 M83.48 25.25 A11.25 11.25 0 0 1 84.30 26.78 M85.25 31.54 A11.25 11.25 0 0 1 85.08 33.26 M80.05 40.78 A11.25 11.25 0 0 1 78.52 41.60 M73.76 42.55 A11.25 11.25 0 0 1 72.04 42.38 M64.52 37.35 A11.25 11.25 0 0 1 63.70 35.82 M62.75 31.06 A11.25 11.25 0 0 1 62.92 29.34 M67.95 21.82 A11.25 11.25 0 0 1 69.48 21.00 " fill="none" stroke="#f4ffe2" stroke-width="1.8"/></svg><div style="position:absolute;left:444px;top:256.5px;width:148.5px;height:54.5px;background:#7fc814;border-radius:3px;"></div><div style="position:absolute;left:446.5px;top:256px;font-size:8.1px;line-height:10.1px;color:#f2ffdc;white-space:nowrap;line-height:12px;">Bass Knocks 2</div><svg style="position:absolute;left:444px;top:256.5px;" width="148.5" height="54.5" viewBox="0 0 148.5 54.5"><path d="M74 31.3 L74.00 12.80 A18.5 18.5 0 0 1 92.50 31.30 Z" fill="rgba(255,255,230,0.45)"/><circle cx="74" cy="31.3" r="3.00" fill="none" stroke="rgba(240,255,215,0.6)" stroke-width="0.7"/><circle cx="74" cy="31.3" r="5.58" fill="none" stroke="rgba(240,255,215,0.6)" stroke-width="0.7"/><circle cx="74" cy="31.3" r="8.17" fill="none" stroke="rgba(240,255,215,0.6)" stroke-width="0.7"/><circle cx="74" cy="31.3" r="10.75" fill="none" stroke="rgba(240,255,215,0.6)" stroke-width="0.7"/><circle cx="74" cy="31.3" r="13.33" fill="none" stroke="rgba(240,255,215,0.6)" stroke-width="0.7"/><circle cx="74" cy="31.3" r="15.92" fill="none" stroke="rgba(240,255,215,0.6)" stroke-width="0.7"/><circle cx="74" cy="31.3" r="18.50" fill="none" stroke="rgba(240,255,215,0.6)" stroke-width="0.7"/><path d="M90.03 25.05 A17.21 17.21 0 0 1 90.80 27.59 M88.10 41.16 A17.21 17.21 0 0 1 86.42 43.21 M83.26 45.81 A17.21 17.21 0 0 1 80.92 47.06 M73.64 48.50 A17.21 17.21 0 0 1 71.00 48.24 M70.29 48.10 A17.21 17.21 0 0 1 67.75 47.33 M67.08 47.06 A17.21 17.21 0 0 1 64.74 45.81 M59.49 40.56 A17.21 17.21 0 0 1 58.24 38.22 M57.06 34.30 A17.21 17.21 0 0 1 56.80 31.66 M57.20 27.59 A17.21 17.21 0 0 1 57.97 25.05 M58.24 24.38 A17.21 17.21 0 0 1 59.49 22.04 M62.09 18.88 A17.21 17.21 0 0 1 64.14 17.20 M64.74 16.79 A17.21 17.21 0 0 1 67.08 15.54 M74.31 16.68 A14.62 14.62 0 0 1 76.55 16.90 M84.56 21.18 A14.62 14.62 0 0 1 85.99 22.92 M88.28 34.45 A14.62 14.62 0 0 1 87.63 36.61 M87.39 37.18 A14.62 14.62 0 0 1 86.33 39.17 M85.99 39.68 A14.62 14.62 0 0 1 84.56 41.42 M84.12 41.86 A14.62 14.62 0 0 1 82.38 43.29 M81.87 43.63 A14.62 14.62 0 0 1 79.88 44.69 M79.31 44.93 A14.62 14.62 0 0 1 77.15 45.58 M73.69 45.92 A14.62 14.62 0 0 1 71.45 45.70 M68.12 44.69 A14.62 14.62 0 0 1 66.13 43.63 M65.62 43.29 A14.62 14.62 0 0 1 63.88 41.86 M60.37 36.61 A14.62 14.62 0 0 1 59.72 34.45 M59.72 28.15 A14.62 14.62 0 0 1 60.37 25.99 M62.01 22.92 A14.62 14.62 0 0 1 63.44 21.18 M68.69 17.67 A14.62 14.62 0 0 1 70.85 17.02 M74.25 19.26 A12.04 12.04 0 0 1 76.10 19.44 M78.84 20.27 A12.04 12.04 0 0 1 80.48 21.15 M80.90 21.43 A12.04 12.04 0 0 1 82.33 22.61 M82.69 22.97 A12.04 12.04 0 0 1 83.87 24.40 M85.22 26.93 A12.04 12.04 0 0 1 85.76 28.70 M85.03 36.14 A12.04 12.04 0 0 1 84.15 37.78 M83.87 38.20 A12.04 12.04 0 0 1 82.69 39.63 M78.37 42.52 A12.04 12.04 0 0 1 76.60 43.06 M69.16 42.33 A12.04 12.04 0 0 1 67.52 41.45 M65.31 39.63 A12.04 12.04 0 0 1 64.13 38.20 M63.85 37.78 A12.04 12.04 0 0 1 62.97 36.14 M61.96 31.05 A12.04 12.04 0 0 1 62.14 29.20 M64.13 24.40 A12.04 12.04 0 0 1 65.31 22.97 M65.67 22.61 A12.04 12.04 0 0 1 67.10 21.43 M67.52 21.15 A12.04 12.04 0 0 1 69.16 20.27 M69.63 20.08 A12.04 12.04 0 0 1 71.40 19.54 M71.90 19.44 A12.04 12.04 0 0 1 73.75 19.26 M77.80 22.64 A9.46 9.46 0 0 1 79.09 23.33 M79.42 23.55 A9.46 9.46 0 0 1 80.55 24.47 M82.81 27.86 A9.46 9.46 0 0 1 83.24 29.26 M83.31 29.65 A9.46 9.46 0 0 1 83.46 31.10 M81.75 36.72 A9.46 9.46 0 0 1 80.83 37.85 M80.55 38.13 A9.46 9.46 0 0 1 79.42 39.05 M77.44 40.11 A9.46 9.46 0 0 1 76.04 40.54 M71.96 40.54 A9.46 9.46 0 0 1 70.56 40.11 M65.19 34.74 A9.46 9.46 0 0 1 64.76 33.34 M64.69 32.95 A9.46 9.46 0 0 1 64.54 31.50 M64.54 31.10 A9.46 9.46 0 0 1 64.69 29.65 M65.34 27.50 A9.46 9.46 0 0 1 66.03 26.21 M77.94 25.66 A6.88 6.88 0 0 1 78.76 26.34 M78.96 26.54 A6.88 6.88 0 0 1 79.64 27.36 M79.80 27.60 A6.88 6.88 0 0 1 80.30 28.54 M80.41 28.80 A6.88 6.88 0 0 1 80.71 29.82 M79.64 35.24 A6.88 6.88 0 0 1 78.96 36.06 M78.76 36.26 A6.88 6.88 0 0 1 77.94 36.94 M77.70 37.10 A6.88 6.88 0 0 1 76.76 37.60 M73.86 38.17 A6.88 6.88 0 0 1 72.80 38.07 M67.59 33.80 A6.88 6.88 0 0 1 67.29 32.78 M67.13 31.16 A6.88 6.88 0 0 1 67.23 30.10 M69.24 26.34 A6.88 6.88 0 0 1 70.06 25.66 M74.09 27.01 A4.29 4.29 0 0 1 74.75 27.07 M75.73 27.37 A4.29 4.29 0 0 1 76.31 27.68 M78.29 31.39 A4.29 4.29 0 0 1 78.23 32.05 M76.97 34.40 A4.29 4.29 0 0 1 76.46 34.82 M70.90 34.27 A4.29 4.29 0 0 1 70.48 33.76 M70.48 28.84 A4.29 4.29 0 0 1 70.90 28.33 M73.25 27.07 A4.29 4.29 0 0 1 73.91 27.01 " fill="none" stroke="#f4ffe2" stroke-width="1.8"/></svg><div style="position:absolute;left:596.5px;top:256.5px;width:148.5px;height:54.5px;background:#7fc814;border-radius:3px;"></div><div style="position:absolute;left:599.0px;top:256px;font-size:8.1px;line-height:10.1px;color:#f2ffdc;white-space:nowrap;line-height:12px;">Bass Knocks 3</div><svg style="position:absolute;left:596.5px;top:256.5px;" width="148.5" height="54.5" viewBox="0 0 148.5 54.5"><circle cx="74" cy="33" r="17" fill="rgba(230,255,200,0.18)"/><path d="M78.00 33.00 L77.94 33.72 M78.12 34.34 L77.81 35.05 M77.77 35.74 L77.22 36.37 M76.93 37.04 L76.16 37.50 M75.64 38.06 L74.71 38.27 M74.00 38.65 L72.99 38.56 M72.15 38.69 L71.16 38.26 M70.29 38.10 L69.44 37.36 M68.63 36.90 L68.02 35.88 M67.37 35.15 L67.09 33.93 M66.70 33.00 L66.82 31.69 M66.74 30.64 L67.28 29.38 M67.56 28.32 L68.50 27.24 M69.13 26.29 L70.41 25.53 M71.34 24.80 L72.85 24.46 M74.00 24.05 L75.60 24.19 M76.87 24.17 L78.40 24.83 M79.65 25.23 L80.95 26.36 M82.04 27.16 L82.96 28.69 M83.77 29.83 L84.18 31.63 M84.60 33.00 L84.43 34.90 M84.40 36.38 L83.62 38.18 M83.11 39.62 L81.78 41.14 M80.81 42.38 L79.02 43.44 M77.68 44.34 L75.59 44.81 M74.00 45.25 L71.81 45.05 M70.11 44.96 L68.03 44.08 M66.41 43.44 L64.66 41.92 M63.29 40.78 L62.07 38.74 M61.09 37.19 L60.55 34.82 M60.10 33.00 L60.32 30.51 M60.47 28.60 L61.47 26.25 M62.22 24.44 L63.94 22.47 M65.25 20.95 L67.55 19.58 M69.30 18.52 L71.96 17.92 M74.00 17.45 L76.78 17.70 M78.91 17.90 L81.53 19.02 M83.53 19.89 L85.72 21.80 M87.38 23.28 L88.91 25.83 M90.04 27.79 L90.72 30.74 " stroke="rgba(245,255,225,0.85)" stroke-width="1.5" fill="none"/></svg><div style="position:absolute;left:746.5px;top:253px;width:208.5px;height:68px;background:#3c3c3c;"></div><div style="position:absolute;left:900.5px;top:104.5px;width:54.5px;height:149px;background:#3c3c3c;"></div><div style="position:absolute;left:899.6px;top:104.5px;width:1.2px;height:216px;background:#303030;"></div><div style="position:absolute;left:746.5px;top:253.6px;width:208.5px;height:1.2px;background:#303030;"></div><div style="position:absolute;left:746.5px;top:312px;width:208.5px;height:1.2px;background:#303030;"></div><div style="position:absolute;left:291.5px;top:314.5px;width:148.5px;height:10px;background:#22c35a;border-radius:3px 3px 0 0;"></div><div style="position:absolute;left:294.0px;top:314px;font-size:8.1px;line-height:10.1px;color:#e0ffe8;white-space:nowrap;line-height:12px;">Computations Topper</div><div style="position:absolute;left:444px;top:314.5px;width:148.5px;height:10px;background:#22c35a;border-radius:3px 3px 0 0;"></div><div style="position:absolute;left:446.5px;top:314px;font-size:8.1px;line-height:10.1px;color:#e0ffe8;white-space:nowrap;line-height:12px;">Computations Topper</div><div style="position:absolute;left:595px;top:312.5px;width:151.5px;height:10px;background:#3c3c3c;"></div><div style="position:absolute;left:290px;top:320.5px;width:665px;height:31.5px;background:#47473f;"></div><div style="position:absolute;left:290px;top:320.5px;width:152px;height:31.5px;background:#3f573f;"></div><div style="position:absolute;left:290px;top:320.5px;width:152px;height:19.5px;background:#677a63;"></div><div style="position:absolute;left:442px;top:320.5px;width:153px;height:31.5px;background:#3d573e;"></div><svg style="position:absolute;left:359.5px;top:326.5px;" width="12" height="8" viewBox="0 0 12 8"><path d="M1 6 L6 2 L11 6" fill="none" stroke="#f0f0f0" stroke-width="1.6"/></svg><div style="position:absolute;left:325.5px;top:339.5px;font-size:9px;line-height:11px;color:#d8d8d8;white-space:nowrap;width:80px;text-align:center;line-height:12px;">Intro</div><svg style="position:absolute;left:512px;top:326.5px;" width="12" height="8" viewBox="0 0 12 8"><path d="M1 6 L6 2 L11 6" fill="none" stroke="#f0f0f0" stroke-width="1.6"/></svg><div style="position:absolute;left:478px;top:339.5px;font-size:9px;line-height:11px;color:#d8d8d8;white-space:nowrap;width:80px;text-align:center;line-height:12px;">Verse</div><svg style="position:absolute;left:664.5px;top:326.5px;" width="12" height="8" viewBox="0 0 12 8"><path d="M1 6 L6 2 L11 6" fill="none" stroke="#f0f0f0" stroke-width="1.6"/></svg><div style="position:absolute;left:630.5px;top:339.5px;font-size:9px;line-height:11px;color:#d8d8d8;white-space:nowrap;width:80px;text-align:center;line-height:12px;">Hook</div><svg style="position:absolute;left:817.5px;top:326.5px;" width="12" height="8" viewBox="0 0 12 8"><path d="M1 6 L6 2 L11 6" fill="none" stroke="#f0f0f0" stroke-width="1.6"/></svg><div style="position:absolute;left:783.5px;top:339.5px;font-size:9px;line-height:11px;color:#d8d8d8;white-space:nowrap;width:80px;text-align:center;line-height:12px;">Breakdown</div><div style="position:absolute;left:442px;top:320.5px;width:1px;height:31.5px;background:rgba(0,0,0,0.18);"></div><div style="position:absolute;left:595px;top:320.5px;width:1px;height:31.5px;background:rgba(0,0,0,0.18);"></div><div style="position:absolute;left:748px;top:320.5px;width:1px;height:31.5px;background:rgba(0,0,0,0.18);"></div><div style="position:absolute;left:901px;top:320.5px;width:1px;height:31.5px;background:rgba(0,0,0,0.18);"></div><div style="position:absolute;left:289.6px;top:76.5px;width:686px;height:276px;border:1.6px solid #8db2d8;box-sizing:border-box;"></div><div style="position:absolute;left:975.5px;top:77px;width:310.5px;height:276px;background:#2c2c2c;"></div><div style="position:absolute;left:975.5px;top:77px;width:6px;height:28px;background:#3c3c3c;"></div><div style="position:absolute;left:981px;top:78px;width:305px;height:12.8px;background:#c6a02e;"></div><div style="position:absolute;left:984px;top:77.8px;font-size:10px;line-height:12px;color:#221c08;white-space:nowrap;line-height:13px;-webkit-text-stroke:0.4px currentColor;">1</div><div style="position:absolute;left:1109px;top:77.8px;font-size:10px;line-height:12px;color:#221c08;white-space:nowrap;line-height:13px;-webkit-text-stroke:0.4px currentColor;">1 3</div><div style="position:absolute;left:1240px;top:79px;width:1px;height:11px;background:#3a3010;"></div><div style="position:absolute;left:1243px;top:77.8px;font-size:10px;line-height:12px;color:#221c08;white-space:nowrap;line-height:13px;-webkit-text-stroke:0.4px currentColor;">2</div><div style="position:absolute;left:981px;top:90.5px;width:305px;height:14px;background:#3c3c3c;"></div><div style="position:absolute;left:997.7px;top:98px;width:1px;height:6px;background:#666666;"></div><div style="position:absolute;left:1013.8px;top:98px;width:1px;height:6px;background:#666666;"></div><div style="position:absolute;left:1029.9px;top:98px;width:1px;height:6px;background:#666666;"></div><div style="position:absolute;left:1046.0px;top:94px;width:1px;height:10px;background:#666666;"></div><div style="position:absolute;left:1062.1px;top:98px;width:1px;height:6px;background:#666666;"></div><div style="position:absolute;left:1078.2px;top:98px;width:1px;height:6px;background:#666666;"></div><div style="position:absolute;left:1094.3px;top:98px;width:1px;height:6px;background:#666666;"></div><div style="position:absolute;left:1110.4px;top:94px;width:1px;height:10px;background:#666666;"></div><div style="position:absolute;left:1126.5px;top:98px;width:1px;height:6px;background:#666666;"></div><div style="position:absolute;left:1142.6px;top:98px;width:1px;height:6px;background:#666666;"></div><div style="position:absolute;left:1158.7px;top:98px;width:1px;height:6px;background:#666666;"></div><div style="position:absolute;left:1174.8px;top:94px;width:1px;height:10px;background:#666666;"></div><div style="position:absolute;left:1190.9px;top:98px;width:1px;height:6px;background:#666666;"></div><div style="position:absolute;left:1207.0px;top:98px;width:1px;height:6px;background:#666666;"></div><div style="position:absolute;left:1223.1px;top:98px;width:1px;height:6px;background:#666666;"></div><div style="position:absolute;left:1239.2px;top:94px;width:1px;height:10px;background:#666666;"></div><div style="position:absolute;left:1255.3px;top:98px;width:1px;height:6px;background:#666666;"></div><div style="position:absolute;left:1271.4px;top:98px;width:1px;height:6px;background:#666666;"></div><div style="position:absolute;left:981px;top:103.8px;width:305px;height:1.2px;background:#1a1a1a;"></div><div style="position:absolute;left:981.5px;top:105px;width:305px;height:147.5px;background:#535353;border-radius:3px 0 0 3px;"></div><div style="position:absolute;left:1240px;top:105px;width:1px;height:147.5px;background:#4a4a4a;"></div><div style="position:absolute;left:985px;top:105px;font-size:8.2px;line-height:10.2px;color:#e4e070;white-space:nowrap;line-height:13px;">Trap Beat</div><div style="position:absolute;left:981.6px;top:135.5px;width:14.6px;height:13.0px;background:#c8c8c8;"></div><div style="position:absolute;left:981.6px;top:149.86px;width:14.6px;height:13.0px;background:#6d6d6d;"></div><div style="position:absolute;left:981.6px;top:164.22px;width:14.6px;height:13.0px;background:#6d6d6d;"></div><div style="position:absolute;left:981.6px;top:178.58px;width:14.6px;height:13.0px;background:#6d6d6d;"></div><div style="position:absolute;left:981.6px;top:192.94px;width:14.6px;height:13.0px;background:#6d6d6d;"></div><div style="position:absolute;left:981.6px;top:207.3px;width:14.6px;height:13.0px;background:#c8c8c8;"></div><div style="position:absolute;left:981.6px;top:221.66px;width:14.6px;height:13.0px;background:#6d6d6d;"></div><div style="position:absolute;left:997.7px;top:135.5px;width:14.6px;height:13.0px;background:#6d6d6d;"></div><div style="position:absolute;left:997.7px;top:149.86px;width:14.6px;height:13.0px;background:#6d6d6d;"></div><div style="position:absolute;left:997.7px;top:164.22px;width:14.6px;height:13.0px;background:#6d6d6d;"></div><div style="position:absolute;left:997.7px;top:178.58px;width:14.6px;height:13.0px;background:#6d6d6d;"></div><div style="position:absolute;left:997.7px;top:192.94px;width:14.6px;height:13.0px;background:#6d6d6d;"></div><div style="position:absolute;left:997.7px;top:207.3px;width:14.6px;height:13.0px;background:#6d6d6d;"></div><div style="position:absolute;left:997.7px;top:221.66px;width:14.6px;height:13.0px;background:#6d6d6d;"></div><div style="position:absolute;left:1013.8px;top:135.5px;width:14.6px;height:13.0px;background:#6d6d6d;"></div><div style="position:absolute;left:1013.8px;top:149.86px;width:14.6px;height:13.0px;background:#6d6d6d;"></div><div style="position:absolute;left:1013.8px;top:164.22px;width:14.6px;height:13.0px;background:#6d6d6d;"></div><div style="position:absolute;left:1013.8px;top:178.58px;width:14.6px;height:13.0px;background:#c8c8c8;"></div><div style="position:absolute;left:1013.8px;top:192.94px;width:14.6px;height:13.0px;background:#6d6d6d;"></div><div style="position:absolute;left:1013.8px;top:207.3px;width:14.6px;height:13.0px;background:#c8c8c8;"></div><div style="position:absolute;left:1013.8px;top:221.66px;width:14.6px;height:13.0px;background:#6d6d6d;"></div><div style="position:absolute;left:1029.9px;top:135.5px;width:14.6px;height:13.0px;background:#6d6d6d;"></div><div style="position:absolute;left:1029.9px;top:149.86px;width:62.9px;height:13.0px;background:#c8c8c8;"></div><div style="position:absolute;left:1029.9px;top:164.22px;width:14.6px;height:13.0px;background:#6d6d6d;"></div><div style="position:absolute;left:1029.9px;top:178.58px;width:14.6px;height:13.0px;background:#c8c8c8;"></div><div style="position:absolute;left:1029.9px;top:192.94px;width:14.6px;height:13.0px;background:#6d6d6d;"></div><div style="position:absolute;left:1029.9px;top:207.3px;width:14.6px;height:13.0px;background:#c8c8c8;"></div><div style="position:absolute;left:1029.9px;top:221.66px;width:14.6px;height:13.0px;background:#6d6d6d;"></div><div style="position:absolute;left:1046.0px;top:135.5px;width:14.6px;height:13.0px;background:#6d6d6d;"></div><div style="position:absolute;left:1046.0px;top:164.22px;width:14.6px;height:13.0px;background:#c8c8c8;"></div><div style="position:absolute;left:1046.0px;top:178.58px;width:14.6px;height:13.0px;background:#6d6d6d;"></div><div style="position:absolute;left:1046.0px;top:192.94px;width:14.6px;height:13.0px;background:#6d6d6d;"></div><div style="position:absolute;left:1046.0px;top:207.3px;width:14.6px;height:13.0px;background:#c8c8c8;"></div><div style="position:absolute;left:1046.0px;top:221.66px;width:14.6px;height:13.0px;background:#6d6d6d;"></div><div style="position:absolute;left:1062.1px;top:135.5px;width:14.6px;height:13.0px;background:#6d6d6d;"></div><div style="position:absolute;left:1062.1px;top:164.22px;width:14.6px;height:13.0px;background:#6d6d6d;"></div><div style="position:absolute;left:1062.1px;top:178.58px;width:14.6px;height:13.0px;background:#6d6d6d;"></div><div style="position:absolute;left:1062.1px;top:192.94px;width:14.6px;height:13.0px;background:#6d6d6d;"></div><div style="position:absolute;left:1062.1px;top:207.3px;width:14.6px;height:13.0px;background:#6d6d6d;"></div><div style="position:absolute;left:1062.1px;top:221.66px;width:14.6px;height:13.0px;background:#c8c8c8;"></div><div style="position:absolute;left:1078.2px;top:135.5px;width:14.6px;height:13.0px;background:#c8c8c8;"></div><div style="position:absolute;left:1078.2px;top:164.22px;width:14.6px;height:13.0px;background:#6d6d6d;"></div><div style="position:absolute;left:1078.2px;top:178.58px;width:14.6px;height:13.0px;background:#6d6d6d;"></div><div style="position:absolute;left:1078.2px;top:192.94px;width:14.6px;height:13.0px;background:#6d6d6d;"></div><div style="position:absolute;left:1078.2px;top:207.3px;width:14.6px;height:13.0px;background:#c8c8c8;"></div><div style="position:absolute;left:1078.2px;top:221.66px;width:14.6px;height:13.0px;background:#6d6d6d;"></div><div style="position:absolute;left:1094.3px;top:135.5px;width:14.6px;height:13.0px;background:#6d6d6d;"></div><div style="position:absolute;left:1094.3px;top:149.86px;width:14.6px;height:13.0px;background:#6d6d6d;"></div><div style="position:absolute;left:1094.3px;top:164.22px;width:14.6px;height:13.0px;background:#6d6d6d;"></div><div style="position:absolute;left:1094.3px;top:178.58px;width:14.6px;height:13.0px;background:#6d6d6d;"></div><div style="position:absolute;left:1094.3px;top:192.94px;width:14.6px;height:13.0px;background:#6d6d6d;"></div><div style="position:absolute;left:1094.3px;top:207.3px;width:14.6px;height:13.0px;background:#c8c8c8;"></div><div style="position:absolute;left:1094.3px;top:221.66px;width:14.6px;height:13.0px;background:#c8c8c8;"></div><div style="position:absolute;left:1110.4px;top:135.5px;width:14.6px;height:13.0px;background:#6d6d6d;"></div><div style="position:absolute;left:1110.4px;top:149.86px;width:14.6px;height:13.0px;background:#6d6d6d;"></div><div style="position:absolute;left:1110.4px;top:164.22px;width:14.6px;height:13.0px;background:#6d6d6d;"></div><div style="position:absolute;left:1110.4px;top:178.58px;width:14.6px;height:13.0px;background:#6d6d6d;"></div><div style="position:absolute;left:1110.4px;top:192.94px;width:14.6px;height:13.0px;background:#c8c8c8;"></div><div style="position:absolute;left:1110.4px;top:207.3px;width:14.6px;height:13.0px;background:#c8c8c8;"></div><div style="position:absolute;left:1110.4px;top:221.66px;width:14.6px;height:13.0px;background:#6d6d6d;"></div><div style="position:absolute;left:1126.5px;top:135.5px;width:14.6px;height:13.0px;background:#6d6d6d;"></div><div style="position:absolute;left:1126.5px;top:149.86px;width:14.6px;height:13.0px;background:#6d6d6d;"></div><div style="position:absolute;left:1126.5px;top:164.22px;width:14.6px;height:13.0px;background:#6d6d6d;"></div><div style="position:absolute;left:1126.5px;top:178.58px;width:14.6px;height:13.0px;background:#6d6d6d;"></div><div style="position:absolute;left:1126.5px;top:192.94px;width:14.6px;height:13.0px;background:#c8c8c8;"></div><div style="position:absolute;left:1126.5px;top:207.3px;width:14.6px;height:13.0px;background:#6d6d6d;"></div><div style="position:absolute;left:1126.5px;top:221.66px;width:14.6px;height:13.0px;background:#6d6d6d;"></div><div style="position:absolute;left:1142.6px;top:135.5px;width:14.6px;height:13.0px;background:#6d6d6d;"></div><div style="position:absolute;left:1142.6px;top:149.86px;width:14.6px;height:13.0px;background:#6d6d6d;"></div><div style="position:absolute;left:1142.6px;top:164.22px;width:14.6px;height:13.0px;background:#6d6d6d;"></div><div style="position:absolute;left:1142.6px;top:178.58px;width:14.6px;height:13.0px;background:#c8c8c8;"></div><div style="position:absolute;left:1142.6px;top:192.94px;width:14.6px;height:13.0px;background:#c8c8c8;"></div><div style="position:absolute;left:1142.6px;top:207.3px;width:14.6px;height:13.0px;background:#c8c8c8;"></div><div style="position:absolute;left:1142.6px;top:221.66px;width:14.6px;height:13.0px;background:#6d6d6d;"></div><div style="position:absolute;left:1158.7px;top:135.5px;width:14.6px;height:13.0px;background:#6d6d6d;"></div><div style="position:absolute;left:1158.7px;top:149.86px;width:14.6px;height:13.0px;background:#6d6d6d;"></div><div style="position:absolute;left:1158.7px;top:164.22px;width:14.6px;height:13.0px;background:#6d6d6d;"></div><div style="position:absolute;left:1158.7px;top:178.58px;width:14.6px;height:13.0px;background:#c8c8c8;"></div><div style="position:absolute;left:1158.7px;top:192.94px;width:14.6px;height:13.0px;background:#c8c8c8;"></div><div style="position:absolute;left:1158.7px;top:207.3px;width:14.6px;height:13.0px;background:#c8c8c8;"></div><div style="position:absolute;left:1158.7px;top:221.66px;width:14.6px;height:13.0px;background:#6d6d6d;"></div><div style="position:absolute;left:1174.8px;top:135.5px;width:14.6px;height:13.0px;background:#c8c8c8;"></div><div style="position:absolute;left:1174.8px;top:149.86px;width:14.6px;height:13.0px;background:#6d6d6d;"></div><div style="position:absolute;left:1174.8px;top:164.22px;width:14.6px;height:13.0px;background:#c8c8c8;"></div><div style="position:absolute;left:1174.8px;top:178.58px;width:14.6px;height:13.0px;background:#6d6d6d;"></div><div style="position:absolute;left:1174.8px;top:192.94px;width:14.6px;height:13.0px;background:#6d6d6d;"></div><div style="position:absolute;left:1174.8px;top:207.3px;width:14.6px;height:13.0px;background:#c8c8c8;"></div><div style="position:absolute;left:1174.8px;top:221.66px;width:14.6px;height:13.0px;background:#6d6d6d;"></div><div style="position:absolute;left:1190.9px;top:135.5px;width:14.6px;height:13.0px;background:#6d6d6d;"></div><div style="position:absolute;left:1190.9px;top:149.86px;width:14.6px;height:13.0px;background:#c8c8c8;"></div><div style="position:absolute;left:1190.9px;top:164.22px;width:14.6px;height:13.0px;background:#6d6d6d;"></div><div style="position:absolute;left:1190.9px;top:178.58px;width:14.6px;height:13.0px;background:#6d6d6d;"></div><div style="position:absolute;left:1190.9px;top:192.94px;width:14.6px;height:13.0px;background:#6d6d6d;"></div><div style="position:absolute;left:1190.9px;top:207.3px;width:14.6px;height:13.0px;background:#6d6d6d;"></div><div style="position:absolute;left:1190.9px;top:221.66px;width:14.6px;height:13.0px;background:#6d6d6d;"></div><div style="position:absolute;left:1207.0px;top:135.5px;width:14.6px;height:13.0px;background:#6d6d6d;"></div><div style="position:absolute;left:1207.0px;top:149.86px;width:14.6px;height:13.0px;background:#6d6d6d;"></div><div style="position:absolute;left:1207.0px;top:164.22px;width:14.6px;height:13.0px;background:#6d6d6d;"></div><div style="position:absolute;left:1207.0px;top:178.58px;width:14.6px;height:13.0px;background:#6d6d6d;"></div><div style="position:absolute;left:1207.0px;top:192.94px;width:14.6px;height:13.0px;background:#6d6d6d;"></div><div style="position:absolute;left:1207.0px;top:207.3px;width:14.6px;height:13.0px;background:#c8c8c8;"></div><div style="position:absolute;left:1207.0px;top:221.66px;width:14.6px;height:13.0px;background:#6d6d6d;"></div><div style="position:absolute;left:1223.1px;top:135.5px;width:14.6px;height:13.0px;background:#6d6d6d;"></div><div style="position:absolute;left:1223.1px;top:149.86px;width:14.6px;height:13.0px;background:#c8c8c8;"></div><div style="position:absolute;left:1223.1px;top:164.22px;width:14.6px;height:13.0px;background:#6d6d6d;"></div><div style="position:absolute;left:1223.1px;top:178.58px;width:14.6px;height:13.0px;background:#6d6d6d;"></div><div style="position:absolute;left:1223.1px;top:192.94px;width:14.6px;height:13.0px;background:#6d6d6d;"></div><div style="position:absolute;left:1223.1px;top:207.3px;width:14.6px;height:13.0px;background:#c8c8c8;"></div><div style="position:absolute;left:1223.1px;top:221.66px;width:14.6px;height:13.0px;background:#6d6d6d;"></div><div style="position:absolute;left:1239.2px;top:135.5px;width:14.6px;height:13.0px;background:#6d6d6d;"></div><div style="position:absolute;left:1239.2px;top:149.86px;width:14.6px;height:13.0px;background:#6d6d6d;"></div><div style="position:absolute;left:1239.2px;top:164.22px;width:14.6px;height:13.0px;background:#6d6d6d;"></div><div style="position:absolute;left:1239.2px;top:178.58px;width:14.6px;height:13.0px;background:#6d6d6d;"></div><div style="position:absolute;left:1239.2px;top:192.94px;width:14.6px;height:13.0px;background:#6d6d6d;"></div><div style="position:absolute;left:1239.2px;top:207.3px;width:14.6px;height:13.0px;background:#c8c8c8;"></div><div style="position:absolute;left:1239.2px;top:221.66px;width:14.6px;height:13.0px;background:#6d6d6d;"></div><div style="position:absolute;left:1255.3px;top:135.5px;width:14.6px;height:13.0px;background:#6d6d6d;"></div><div style="position:absolute;left:1255.3px;top:149.86px;width:14.6px;height:13.0px;background:#6d6d6d;"></div><div style="position:absolute;left:1255.3px;top:164.22px;width:14.6px;height:13.0px;background:#6d6d6d;"></div><div style="position:absolute;left:1255.3px;top:178.58px;width:14.6px;height:13.0px;background:#6d6d6d;"></div><div style="position:absolute;left:1255.3px;top:192.94px;width:14.6px;height:13.0px;background:#6d6d6d;"></div><div style="position:absolute;left:1255.3px;top:207.3px;width:14.6px;height:13.0px;background:#c8c8c8;"></div><div style="position:absolute;left:1255.3px;top:221.66px;width:14.6px;height:13.0px;background:#6d6d6d;"></div><div style="position:absolute;left:1271.4px;top:135.5px;width:14.6px;height:13.0px;background:#c8c8c8;"></div><div style="position:absolute;left:1271.4px;top:149.86px;width:14.6px;height:13.0px;background:#6d6d6d;"></div><div style="position:absolute;left:1271.4px;top:164.22px;width:14.6px;height:13.0px;background:#6d6d6d;"></div><div style="position:absolute;left:1271.4px;top:178.58px;width:14.6px;height:13.0px;background:#6d6d6d;"></div><div style="position:absolute;left:1271.4px;top:192.94px;width:14.6px;height:13.0px;background:#6d6d6d;"></div><div style="position:absolute;left:1271.4px;top:207.3px;width:14.6px;height:13.0px;background:#c8c8c8;"></div><div style="position:absolute;left:1271.4px;top:221.66px;width:14.6px;height:13.0px;background:#6d6d6d;"></div><div style="position:absolute;left:981.5px;top:255.5px;width:305px;height:55.5px;background:#535353;border-radius:3px 0 0 3px;"></div><div style="position:absolute;left:985px;top:256px;font-size:8.2px;line-height:10.2px;color:#e4e070;white-space:nowrap;line-height:13px;">Bass Knocks</div><div style="position:absolute;left:981.6px;top:270.8px;width:14.4px;height:3.2px;background:#c8c8c8;"></div><div style="position:absolute;left:981.6px;top:275.73px;width:14.4px;height:3.2px;background:#6f6f6f;"></div><div style="position:absolute;left:981.6px;top:280.66px;width:14.4px;height:3.2px;background:#6f6f6f;"></div><div style="position:absolute;left:981.6px;top:285.59px;width:14.4px;height:3.2px;background:#6f6f6f;"></div><div style="position:absolute;left:981.6px;top:290.52px;width:14.4px;height:3.2px;background:#6f6f6f;"></div><div style="position:absolute;left:981.6px;top:295.45px;width:14.4px;height:3.2px;background:#6f6f6f;"></div><div style="position:absolute;left:981.6px;top:300.38px;width:14.4px;height:3.2px;background:#6f6f6f;"></div><div style="position:absolute;left:981.6px;top:305.31px;width:14.4px;height:3.2px;background:#6f6f6f;"></div><div style="position:absolute;left:997.7px;top:270.8px;width:14.4px;height:3.2px;background:#6f6f6f;"></div><div style="position:absolute;left:997.7px;top:275.73px;width:14.4px;height:3.2px;background:#c8c8c8;"></div><div style="position:absolute;left:997.7px;top:280.66px;width:14.4px;height:3.2px;background:#6f6f6f;"></div><div style="position:absolute;left:997.7px;top:285.59px;width:14.4px;height:3.2px;background:#6f6f6f;"></div><div style="position:absolute;left:997.7px;top:290.52px;width:14.4px;height:3.2px;background:#6f6f6f;"></div><div style="position:absolute;left:997.7px;top:295.45px;width:14.4px;height:3.2px;background:#6f6f6f;"></div><div style="position:absolute;left:997.7px;top:300.38px;width:14.4px;height:3.2px;background:#6f6f6f;"></div><div style="position:absolute;left:997.7px;top:305.31px;width:14.4px;height:3.2px;background:#6f6f6f;"></div><div style="position:absolute;left:1013.8px;top:270.8px;width:14.4px;height:3.2px;background:#6f6f6f;"></div><div style="position:absolute;left:1013.8px;top:275.73px;width:14.4px;height:3.2px;background:#6f6f6f;"></div><div style="position:absolute;left:1013.8px;top:280.66px;width:14.4px;height:3.2px;background:#6f6f6f;"></div><div style="position:absolute;left:1013.8px;top:285.59px;width:14.4px;height:3.2px;background:#6f6f6f;"></div><div style="position:absolute;left:1013.8px;top:290.52px;width:14.4px;height:3.2px;background:#6f6f6f;"></div><div style="position:absolute;left:1013.8px;top:295.45px;width:14.4px;height:3.2px;background:#6f6f6f;"></div><div style="position:absolute;left:1013.8px;top:300.38px;width:14.4px;height:3.2px;background:#6f6f6f;"></div><div style="position:absolute;left:1013.8px;top:305.31px;width:14.4px;height:3.2px;background:#6f6f6f;"></div><div style="position:absolute;left:1029.9px;top:270.8px;width:14.4px;height:3.2px;background:#6f6f6f;"></div><div style="position:absolute;left:1029.9px;top:275.73px;width:14.4px;height:3.2px;background:#6f6f6f;"></div><div style="position:absolute;left:1029.9px;top:280.66px;width:14.4px;height:3.2px;background:#6f6f6f;"></div><div style="position:absolute;left:1029.9px;top:285.59px;width:14.4px;height:3.2px;background:#c8c8c8;"></div><div style="position:absolute;left:1029.9px;top:290.52px;width:14.4px;height:3.2px;background:#6f6f6f;"></div><div style="position:absolute;left:1029.9px;top:295.45px;width:14.4px;height:3.2px;background:#6f6f6f;"></div><div style="position:absolute;left:1029.9px;top:300.38px;width:14.4px;height:3.2px;background:#6f6f6f;"></div><div style="position:absolute;left:1029.9px;top:305.31px;width:14.4px;height:3.2px;background:#6f6f6f;"></div><div style="position:absolute;left:1046.0px;top:270.8px;width:14.4px;height:3.2px;background:#6f6f6f;"></div><div style="position:absolute;left:1046.0px;top:275.73px;width:14.4px;height:3.2px;background:#6f6f6f;"></div><div style="position:absolute;left:1046.0px;top:280.66px;width:14.4px;height:3.2px;background:#6f6f6f;"></div><div style="position:absolute;left:1046.0px;top:285.59px;width:14.4px;height:3.2px;background:#6f6f6f;"></div><div style="position:absolute;left:1046.0px;top:290.52px;width:14.4px;height:3.2px;background:#c8c8c8;"></div><div style="position:absolute;left:1046.0px;top:295.45px;width:14.4px;height:3.2px;background:#6f6f6f;"></div><div style="position:absolute;left:1046.0px;top:300.38px;width:14.4px;height:3.2px;background:#6f6f6f;"></div><div style="position:absolute;left:1046.0px;top:305.31px;width:14.4px;height:3.2px;background:#6f6f6f;"></div><div style="position:absolute;left:1062.1px;top:270.8px;width:14.4px;height:3.2px;background:#6f6f6f;"></div><div style="position:absolute;left:1062.1px;top:275.73px;width:14.4px;height:3.2px;background:#6f6f6f;"></div><div style="position:absolute;left:1062.1px;top:280.66px;width:14.4px;height:3.2px;background:#6f6f6f;"></div><div style="position:absolute;left:1062.1px;top:285.59px;width:14.4px;height:3.2px;background:#6f6f6f;"></div><div style="position:absolute;left:1062.1px;top:290.52px;width:14.4px;height:3.2px;background:#6f6f6f;"></div><div style="position:absolute;left:1062.1px;top:295.45px;width:14.4px;height:3.2px;background:#c8c8c8;"></div><div style="position:absolute;left:1062.1px;top:300.38px;width:14.4px;height:3.2px;background:#6f6f6f;"></div><div style="position:absolute;left:1062.1px;top:305.31px;width:14.4px;height:3.2px;background:#6f6f6f;"></div><div style="position:absolute;left:1078.2px;top:270.8px;width:14.4px;height:3.2px;background:#6f6f6f;"></div><div style="position:absolute;left:1078.2px;top:275.73px;width:14.4px;height:3.2px;background:#6f6f6f;"></div><div style="position:absolute;left:1078.2px;top:280.66px;width:14.4px;height:3.2px;background:#6f6f6f;"></div><div style="position:absolute;left:1078.2px;top:285.59px;width:14.4px;height:3.2px;background:#6f6f6f;"></div><div style="position:absolute;left:1078.2px;top:290.52px;width:14.4px;height:3.2px;background:#6f6f6f;"></div><div style="position:absolute;left:1078.2px;top:295.45px;width:14.4px;height:3.2px;background:#6f6f6f;"></div><div style="position:absolute;left:1078.2px;top:300.38px;width:14.4px;height:3.2px;background:#6f6f6f;"></div><div style="position:absolute;left:1078.2px;top:305.31px;width:14.4px;height:3.2px;background:#6f6f6f;"></div><div style="position:absolute;left:1094.3px;top:270.8px;width:14.4px;height:3.2px;background:#6f6f6f;"></div><div style="position:absolute;left:1094.3px;top:275.73px;width:14.4px;height:3.2px;background:#6f6f6f;"></div><div style="position:absolute;left:1094.3px;top:280.66px;width:14.4px;height:3.2px;background:#6f6f6f;"></div><div style="position:absolute;left:1094.3px;top:285.59px;width:14.4px;height:3.2px;background:#6f6f6f;"></div><div style="position:absolute;left:1094.3px;top:290.52px;width:14.4px;height:3.2px;background:#6f6f6f;"></div><div style="position:absolute;left:1094.3px;top:295.45px;width:14.4px;height:3.2px;background:#6f6f6f;"></div><div style="position:absolute;left:1094.3px;top:300.38px;width:14.4px;height:3.2px;background:#c8c8c8;"></div><div style="position:absolute;left:1094.3px;top:305.31px;width:14.4px;height:3.2px;background:#6f6f6f;"></div><div style="position:absolute;left:1110.4px;top:270.8px;width:14.4px;height:3.2px;background:#6f6f6f;"></div><div style="position:absolute;left:1110.4px;top:275.73px;width:14.4px;height:3.2px;background:#6f6f6f;"></div><div style="position:absolute;left:1110.4px;top:280.66px;width:14.4px;height:3.2px;background:#6f6f6f;"></div><div style="position:absolute;left:1110.4px;top:285.59px;width:14.4px;height:3.2px;background:#6f6f6f;"></div><div style="position:absolute;left:1110.4px;top:290.52px;width:14.4px;height:3.2px;background:#6f6f6f;"></div><div style="position:absolute;left:1110.4px;top:295.45px;width:14.4px;height:3.2px;background:#6f6f6f;"></div><div style="position:absolute;left:1110.4px;top:300.38px;width:14.4px;height:3.2px;background:#6f6f6f;"></div><div style="position:absolute;left:1110.4px;top:305.31px;width:14.4px;height:3.2px;background:#6f6f6f;"></div><div style="position:absolute;left:1126.5px;top:270.8px;width:14.4px;height:3.2px;background:#6f6f6f;"></div><div style="position:absolute;left:1126.5px;top:275.73px;width:14.4px;height:3.2px;background:#6f6f6f;"></div><div style="position:absolute;left:1126.5px;top:280.66px;width:14.4px;height:3.2px;background:#6f6f6f;"></div><div style="position:absolute;left:1126.5px;top:285.59px;width:14.4px;height:3.2px;background:#6f6f6f;"></div><div style="position:absolute;left:1126.5px;top:290.52px;width:14.4px;height:3.2px;background:#6f6f6f;"></div><div style="position:absolute;left:1126.5px;top:295.45px;width:14.4px;height:3.2px;background:#6f6f6f;"></div><div style="position:absolute;left:1126.5px;top:300.38px;width:14.4px;height:3.2px;background:#6f6f6f;"></div><div style="position:absolute;left:1126.5px;top:305.31px;width:14.4px;height:3.2px;background:#6f6f6f;"></div><div style="position:absolute;left:1142.6px;top:270.8px;width:14.4px;height:3.2px;background:#6f6f6f;"></div><div style="position:absolute;left:1142.6px;top:275.73px;width:14.4px;height:3.2px;background:#6f6f6f;"></div><div style="position:absolute;left:1142.6px;top:280.66px;width:14.4px;height:3.2px;background:#6f6f6f;"></div><div style="position:absolute;left:1142.6px;top:285.59px;width:14.4px;height:3.2px;background:#6f6f6f;"></div><div style="position:absolute;left:1142.6px;top:290.52px;width:14.4px;height:3.2px;background:#6f6f6f;"></div><div style="position:absolute;left:1142.6px;top:295.45px;width:14.4px;height:3.2px;background:#6f6f6f;"></div><div style="position:absolute;left:1142.6px;top:300.38px;width:14.4px;height:3.2px;background:#6f6f6f;"></div><div style="position:absolute;left:1142.6px;top:305.31px;width:14.4px;height:3.2px;background:#6f6f6f;"></div><div style="position:absolute;left:1158.7px;top:270.8px;width:14.4px;height:3.2px;background:#6f6f6f;"></div><div style="position:absolute;left:1158.7px;top:275.73px;width:14.4px;height:3.2px;background:#6f6f6f;"></div><div style="position:absolute;left:1158.7px;top:280.66px;width:14.4px;height:3.2px;background:#6f6f6f;"></div><div style="position:absolute;left:1158.7px;top:285.59px;width:14.4px;height:3.2px;background:#6f6f6f;"></div><div style="position:absolute;left:1158.7px;top:290.52px;width:14.4px;height:3.2px;background:#6f6f6f;"></div><div style="position:absolute;left:1158.7px;top:295.45px;width:14.4px;height:3.2px;background:#6f6f6f;"></div><div style="position:absolute;left:1158.7px;top:300.38px;width:14.4px;height:3.2px;background:#6f6f6f;"></div><div style="position:absolute;left:1158.7px;top:305.31px;width:14.4px;height:3.2px;background:#6f6f6f;"></div><div style="position:absolute;left:1174.8px;top:270.8px;width:14.4px;height:3.2px;background:#6f6f6f;"></div><div style="position:absolute;left:1174.8px;top:275.73px;width:14.4px;height:3.2px;background:#6f6f6f;"></div><div style="position:absolute;left:1174.8px;top:280.66px;width:14.4px;height:3.2px;background:#6f6f6f;"></div><div style="position:absolute;left:1174.8px;top:285.59px;width:14.4px;height:3.2px;background:#6f6f6f;"></div><div style="position:absolute;left:1174.8px;top:290.52px;width:14.4px;height:3.2px;background:#6f6f6f;"></div><div style="position:absolute;left:1174.8px;top:295.45px;width:14.4px;height:3.2px;background:#6f6f6f;"></div><div style="position:absolute;left:1174.8px;top:300.38px;width:14.4px;height:3.2px;background:#6f6f6f;"></div><div style="position:absolute;left:1174.8px;top:305.31px;width:14.4px;height:3.2px;background:#6f6f6f;"></div><div style="position:absolute;left:1190.9px;top:270.8px;width:14.4px;height:3.2px;background:#6f6f6f;"></div><div style="position:absolute;left:1190.9px;top:275.73px;width:14.4px;height:3.2px;background:#6f6f6f;"></div><div style="position:absolute;left:1190.9px;top:280.66px;width:14.4px;height:3.2px;background:#6f6f6f;"></div><div style="position:absolute;left:1190.9px;top:285.59px;width:14.4px;height:3.2px;background:#6f6f6f;"></div><div style="position:absolute;left:1190.9px;top:290.52px;width:14.4px;height:3.2px;background:#6f6f6f;"></div><div style="position:absolute;left:1190.9px;top:295.45px;width:14.4px;height:3.2px;background:#6f6f6f;"></div><div style="position:absolute;left:1190.9px;top:300.38px;width:14.4px;height:3.2px;background:#6f6f6f;"></div><div style="position:absolute;left:1190.9px;top:305.31px;width:14.4px;height:3.2px;background:#6f6f6f;"></div><div style="position:absolute;left:1207.0px;top:270.8px;width:14.4px;height:3.2px;background:#6f6f6f;"></div><div style="position:absolute;left:1207.0px;top:275.73px;width:14.4px;height:3.2px;background:#6f6f6f;"></div><div style="position:absolute;left:1207.0px;top:280.66px;width:14.4px;height:3.2px;background:#6f6f6f;"></div><div style="position:absolute;left:1207.0px;top:285.59px;width:14.4px;height:3.2px;background:#6f6f6f;"></div><div style="position:absolute;left:1207.0px;top:290.52px;width:14.4px;height:3.2px;background:#6f6f6f;"></div><div style="position:absolute;left:1207.0px;top:295.45px;width:14.4px;height:3.2px;background:#6f6f6f;"></div><div style="position:absolute;left:1207.0px;top:300.38px;width:14.4px;height:3.2px;background:#6f6f6f;"></div><div style="position:absolute;left:1207.0px;top:305.31px;width:14.4px;height:3.2px;background:#6f6f6f;"></div><div style="position:absolute;left:1223.1px;top:270.8px;width:14.4px;height:3.2px;background:#6f6f6f;"></div><div style="position:absolute;left:1223.1px;top:275.73px;width:14.4px;height:3.2px;background:#6f6f6f;"></div><div style="position:absolute;left:1223.1px;top:280.66px;width:14.4px;height:3.2px;background:#6f6f6f;"></div><div style="position:absolute;left:1223.1px;top:285.59px;width:14.4px;height:3.2px;background:#6f6f6f;"></div><div style="position:absolute;left:1223.1px;top:290.52px;width:14.4px;height:3.2px;background:#6f6f6f;"></div><div style="position:absolute;left:1223.1px;top:295.45px;width:14.4px;height:3.2px;background:#6f6f6f;"></div><div style="position:absolute;left:1223.1px;top:300.38px;width:14.4px;height:3.2px;background:#6f6f6f;"></div><div style="position:absolute;left:1223.1px;top:305.31px;width:14.4px;height:3.2px;background:#6f6f6f;"></div><div style="position:absolute;left:1239.2px;top:270.8px;width:14.4px;height:3.2px;background:#c8c8c8;"></div><div style="position:absolute;left:1239.2px;top:275.73px;width:14.4px;height:3.2px;background:#6f6f6f;"></div><div style="position:absolute;left:1239.2px;top:280.66px;width:14.4px;height:3.2px;background:#6f6f6f;"></div><div style="position:absolute;left:1239.2px;top:285.59px;width:14.4px;height:3.2px;background:#6f6f6f;"></div><div style="position:absolute;left:1239.2px;top:290.52px;width:14.4px;height:3.2px;background:#6f6f6f;"></div><div style="position:absolute;left:1239.2px;top:295.45px;width:14.4px;height:3.2px;background:#6f6f6f;"></div><div style="position:absolute;left:1239.2px;top:300.38px;width:14.4px;height:3.2px;background:#6f6f6f;"></div><div style="position:absolute;left:1239.2px;top:305.31px;width:14.4px;height:3.2px;background:#6f6f6f;"></div><div style="position:absolute;left:1255.3px;top:270.8px;width:14.4px;height:3.2px;background:#6f6f6f;"></div><div style="position:absolute;left:1255.3px;top:275.73px;width:14.4px;height:3.2px;background:#c8c8c8;"></div><div style="position:absolute;left:1255.3px;top:280.66px;width:14.4px;height:3.2px;background:#6f6f6f;"></div><div style="position:absolute;left:1255.3px;top:285.59px;width:14.4px;height:3.2px;background:#6f6f6f;"></div><div style="position:absolute;left:1255.3px;top:290.52px;width:14.4px;height:3.2px;background:#6f6f6f;"></div><div style="position:absolute;left:1255.3px;top:295.45px;width:14.4px;height:3.2px;background:#6f6f6f;"></div><div style="position:absolute;left:1255.3px;top:300.38px;width:14.4px;height:3.2px;background:#6f6f6f;"></div><div style="position:absolute;left:1255.3px;top:305.31px;width:14.4px;height:3.2px;background:#6f6f6f;"></div><div style="position:absolute;left:1271.4px;top:270.8px;width:14.4px;height:3.2px;background:#6f6f6f;"></div><div style="position:absolute;left:1271.4px;top:275.73px;width:14.4px;height:3.2px;background:#6f6f6f;"></div><div style="position:absolute;left:1271.4px;top:280.66px;width:14.4px;height:3.2px;background:#6f6f6f;"></div><div style="position:absolute;left:1271.4px;top:285.59px;width:14.4px;height:3.2px;background:#6f6f6f;"></div><div style="position:absolute;left:1271.4px;top:290.52px;width:14.4px;height:3.2px;background:#6f6f6f;"></div><div style="position:absolute;left:1271.4px;top:295.45px;width:14.4px;height:3.2px;background:#6f6f6f;"></div><div style="position:absolute;left:1271.4px;top:300.38px;width:14.4px;height:3.2px;background:#6f6f6f;"></div><div style="position:absolute;left:1271.4px;top:305.31px;width:14.4px;height:3.2px;background:#6f6f6f;"></div><div style="position:absolute;left:1191.0px;top:305.3px;width:8.2px;height:3.3px;background:#c8c8c8;"></div><div style="position:absolute;left:1200.6px;top:305.3px;width:8.2px;height:3.3px;background:#c8c8c8;"></div><div style="position:absolute;left:1210.2px;top:305.3px;width:8.2px;height:3.3px;background:#c8c8c8;"></div><div style="position:absolute;left:1219.8px;top:305.3px;width:8.2px;height:3.3px;background:#c8c8c8;"></div><div style="position:absolute;left:1229.4px;top:305.3px;width:8.2px;height:3.3px;background:#c8c8c8;"></div><div style="position:absolute;left:981.5px;top:313.5px;width:305px;height:39px;background:#19c757;border-radius:3px 0 0 3px;"></div><div style="position:absolute;left:985px;top:314.5px;font-size:8.2px;line-height:10.2px;color:#e8ffe8;white-space:nowrap;line-height:13px;">Computations Topper <span style="text-decoration:underline;margin-left:6px">QQ</span></div><svg style="position:absolute;left:981px;top:327px;" width="305" height="26" viewBox="0 0 305 26"><path d="M0.0 12.45 L0.5 12.45 L1.0 12.45 L1.5 12.45 L2.0 12.45 L2.5 12.45 L3.0 12.45 L3.5 12.45 L4.0 12.45 L4.5 12.45 L5.0 12.45 L5.5 12.45 L6.0 12.45 L6.5 12.45 L7.0 12.45 L7.5 12.45 L8.0 12.45 L8.5 12.45 L9.0 12.45 L9.5 12.45 L10.0 12.45 L10.5 12.45 L11.0 12.45 L11.5 12.45 L12.0 12.45 L12.5 12.45 L13.0 12.45 L13.5 12.45 L14.0 12.45 L14.5 12.45 L15.0 12.45 L15.5 12.45 L16.0 12.45 L16.5 12.45 L17.0 12.45 L17.5 12.45 L18.0 12.45 L18.5 12.45 L19.0 12.45 L19.5 12.45 L20.0 12.45 L20.5 12.45 L21.0 12.45 L21.5 12.45 L22.0 12.45 L22.5 12.45 L23.0 12.45 L23.5 12.45 L24.0 12.45 L24.5 12.45 L25.0 12.45 L25.5 12.45 L26.0 12.45 L26.5 12.45 L27.0 12.45 L27.5 12.45 L28.0 12.45 L28.5 12.45 L29.0 12.45 L29.5 12.45 L30.0 12.45 L30.5 12.45 L31.0 12.45 L31.5 12.45 L32.0 12.45 L32.5 12.45 L33.0 11.00 L33.5 11.44 L34.0 11.79 L34.5 12.06 L35.0 12.26 L35.5 12.43 L36.0 12.45 L36.5 12.45 L37.0 12.45 L37.5 12.45 L38.0 12.45 L38.5 12.45 L39.0 12.45 L39.5 12.45 L40.0 12.45 L40.5 12.45 L41.0 12.45 L41.5 12.45 L42.0 12.45 L42.5 12.45 L43.0 12.45 L43.5 12.45 L44.0 12.45 L44.5 12.45 L45.0 12.45 L45.5 12.45 L46.0 12.45 L46.5 12.45 L47.0 12.45 L47.5 12.45 L48.0 12.45 L48.5 12.45 L49.0 12.45 L49.5 12.45 L50.0 12.45 L50.5 12.45 L51.0 12.45 L51.5 12.45 L52.0 12.45 L52.5 12.45 L53.0 12.45 L53.5 12.45 L54.0 12.45 L54.5 12.45 L55.0 12.45 L55.5 12.45 L56.0 12.45 L56.5 12.45 L57.0 12.45 L57.5 12.45 L58.0 12.45 L58.5 12.45 L59.0 12.45 L59.5 12.45 L60.0 12.45 L60.5 12.45 L61.0 12.45 L61.5 12.45 L62.0 12.45 L62.5 12.45 L63.0 12.45 L63.5 12.45 L64.0 12.45 L64.5 12.45 L65.0 12.45 L65.5 12.45 L66.0 12.45 L66.5 12.45 L67.0 12.45 L67.5 12.45 L68.0 12.45 L68.5 12.45 L69.0 12.45 L69.5 12.45 L70.0 12.45 L70.5 12.45 L71.0 12.45 L71.5 12.45 L72.0 12.45 L72.5 12.45 L73.0 12.45 L73.5 12.45 L74.0 12.45 L74.5 12.45 L75.0 12.45 L75.5 12.45 L76.0 12.45 L76.5 12.45 L77.0 12.45 L77.5 12.45 L78.0 12.45 L78.5 12.45 L79.0 12.45 L79.5 12.45 L80.0 12.45 L80.5 12.45 L81.0 12.45 L81.5 12.45 L82.0 12.45 L82.5 12.45 L83.0 12.45 L83.5 12.45 L84.0 12.45 L84.5 12.45 L85.0 12.45 L85.5 12.45 L86.0 12.45 L86.5 12.45 L87.0 12.45 L87.5 12.45 L88.0 12.45 L88.5 12.45 L89.0 12.45 L89.5 12.45 L90.0 12.45 L90.5 12.45 L91.0 12.45 L91.5 12.45 L92.0 12.45 L92.5 12.45 L93.0 12.45 L93.5 12.45 L94.0 12.45 L94.5 12.45 L95.0 12.45 L95.5 12.45 L96.0 12.45 L96.5 12.45 L97.0 2.00 L97.5 4.24 L98.0 6.02 L98.5 7.44 L99.0 8.57 L99.5 9.47 L100.0 9.00 L100.5 9.32 L101.0 9.61 L101.5 9.88 L102.0 10.13 L102.5 10.36 L103.0 10.57 L103.5 10.77 L104.0 10.95 L104.5 11.11 L105.0 11.26 L105.5 11.40 L106.0 11.53 L106.5 11.65 L107.0 11.75 L107.5 11.85 L108.0 11.95 L108.5 12.03 L109.0 12.11 L109.5 12.18 L110.0 12.24 L110.5 12.30 L111.0 12.36 L111.5 12.41 L112.0 12.45 L112.5 12.45 L113.0 6.00 L113.5 7.70 L114.0 8.98 L114.5 9.96 L115.0 10.70 L115.5 11.25 L116.0 11.68 L116.5 12.00 L117.0 12.24 L117.5 12.43 L118.0 10.00 L118.5 10.66 L119.0 11.18 L119.5 11.58 L120.0 11.90 L120.5 12.14 L121.0 12.33 L121.5 12.45 L122.0 12.45 L122.5 12.45 L123.0 12.45 L123.5 12.45 L124.0 12.45 L124.5 12.45 L125.0 12.45 L125.5 12.45 L126.0 12.45 L126.5 12.45 L127.0 12.45 L127.5 12.45 L128.0 12.45 L128.5 12.45 L129.0 12.45 L129.5 12.45 L130.0 12.45 L130.5 12.45 L131.0 12.45 L131.5 12.45 L132.0 12.45 L132.5 12.45 L133.0 12.45 L133.5 12.45 L134.0 12.45 L134.5 12.45 L135.0 12.45 L135.5 12.45 L136.0 12.45 L136.5 12.45 L137.0 12.45 L137.5 12.45 L138.0 12.45 L138.5 12.45 L139.0 12.45 L139.5 12.45 L140.0 12.45 L140.5 12.45 L141.0 12.45 L141.5 12.45 L142.0 12.45 L142.5 12.45 L143.0 12.45 L143.5 12.45 L144.0 12.45 L144.5 12.45 L145.0 12.45 L145.5 12.45 L146.0 12.45 L146.5 1.00 L147.0 3.91 L147.5 6.11 L148.0 7.78 L148.5 9.05 L149.0 10.00 L149.5 10.35 L150.0 10.66 L150.5 10.94 L151.0 11.18 L151.5 11.39 L152.0 11.58 L152.5 11.75 L153.0 11.90 L153.5 12.03 L154.0 12.14 L154.5 12.24 L155.0 12.33 L155.5 12.41 L156.0 12.45 L156.5 12.45 L157.0 12.45 L157.5 12.45 L158.0 12.45 L158.5 12.45 L159.0 12.45 L159.5 12.45 L160.0 12.45 L160.5 12.45 L161.0 7.50 L161.5 8.34 L162.0 9.06 L162.5 9.66 L163.0 10.18 L163.5 10.61 L164.0 10.98 L164.5 11.29 L165.0 8.50 L165.5 9.19 L166.0 9.78 L166.5 10.27 L167.0 10.69 L167.5 11.04 L168.0 11.34 L168.5 11.60 L169.0 8.00 L169.5 8.77 L170.0 9.42 L170.5 9.97 L171.0 10.43 L171.5 10.83 L172.0 11.16 L172.5 11.44 L173.0 8.50 L173.5 9.19 L174.0 9.78 L174.5 10.27 L175.0 10.69 L175.5 11.04 L176.0 11.34 L176.5 11.60 L177.0 8.50 L177.5 9.19 L178.0 9.78 L178.5 10.27 L179.0 10.69 L179.5 11.04 L180.0 11.34 L180.5 11.60 L181.0 9.00 L181.5 9.61 L182.0 10.13 L182.5 10.57 L183.0 10.95 L183.5 11.26 L184.0 11.53 L184.5 11.75 L185.0 9.50 L185.5 10.04 L186.0 10.49 L186.5 10.88 L187.0 11.20 L187.5 11.48 L188.0 11.71 L188.5 11.91 L189.0 10.00 L189.5 10.46 L190.0 10.85 L190.5 11.18 L191.0 11.46 L191.5 11.70 L192.0 11.90 L192.5 12.07 L193.0 12.21 L193.5 12.33 L194.0 12.43 L194.5 12.45 L195.0 12.45 L195.5 10.00 L196.0 10.85 L196.5 11.46 L197.0 11.90 L197.5 12.21 L198.0 12.43 L198.5 12.45 L199.0 12.45 L199.5 12.45 L200.0 12.45 L200.5 12.45 L201.0 12.45 L201.5 12.45 L202.0 12.45 L202.5 12.45 L203.0 12.45 L203.5 12.45 L204.0 12.45 L204.5 12.45 L205.0 12.45 L205.5 12.45 L206.0 12.45 L206.5 12.45 L207.0 12.45 L207.5 12.45 L208.0 12.45 L208.5 12.45 L209.0 12.45 L209.5 12.45 L210.0 12.45 L210.5 12.45 L211.0 12.45 L211.5 1.00 L212.0 3.91 L212.5 6.11 L213.0 7.78 L213.5 9.05 L214.0 10.00 L214.5 10.29 L215.0 10.54 L215.5 10.78 L216.0 10.99 L216.5 11.18 L217.0 11.35 L217.5 11.51 L218.0 11.65 L218.5 11.78 L219.0 11.90 L219.5 12.00 L220.0 12.10 L220.5 12.18 L221.0 12.26 L221.5 12.33 L222.0 12.39 L222.5 12.45 L223.0 12.45 L223.5 12.45 L224.0 12.45 L224.5 12.45 L225.0 12.45 L225.5 12.45 L226.0 12.45 L226.5 12.45 L227.0 11.20 L227.5 11.48 L228.0 11.71 L228.5 11.91 L229.0 12.08 L229.5 12.22 L230.0 12.34 L230.5 12.44 L231.0 12.45 L231.5 12.45 L232.0 12.45 L232.5 12.45 L233.0 12.45 L233.5 12.45 L234.0 12.45 L234.5 12.45 L235.0 12.45 L235.5 12.45 L236.0 12.45 L236.5 12.45 L237.0 12.45 L237.5 12.45 L238.0 12.45 L238.5 12.45 L239.0 12.45 L239.5 12.45 L240.0 12.45 L240.5 12.45 L241.0 12.45 L241.5 12.45 L242.0 12.45 L242.5 12.45 L243.0 12.45 L243.5 12.45 L244.0 12.45 L244.5 12.45 L245.0 12.45 L245.5 12.45 L246.0 12.45 L246.5 12.45 L247.0 12.45 L247.5 12.45 L248.0 12.45 L248.5 12.45 L249.0 12.45 L249.5 12.45 L250.0 12.45 L250.5 12.45 L251.0 12.45 L251.5 12.45 L252.0 12.45 L252.5 12.45 L253.0 12.45 L253.5 12.45 L254.0 12.45 L254.5 12.45 L255.0 12.45 L255.5 12.45 L256.0 12.45 L256.5 12.45 L257.0 12.45 L257.5 12.45 L258.0 12.45 L258.5 12.45 L259.0 12.45 L259.5 12.45 L260.0 12.45 L260.5 12.45 L261.0 12.45 L261.5 12.45 L262.0 12.45 L262.5 12.45 L263.0 12.45 L263.5 12.45 L264.0 12.45 L264.5 12.45 L265.0 12.45 L265.5 12.45 L266.0 12.45 L266.5 12.45 L267.0 12.45 L267.5 12.45 L268.0 12.45 L268.5 12.45 L269.0 12.45 L269.5 12.45 L270.0 12.45 L270.5 12.45 L271.0 12.45 L271.5 12.45 L272.0 12.45 L272.5 12.45 L273.0 12.45 L273.5 12.45 L274.0 12.45 L274.5 12.45 L275.0 11.80 L275.5 11.94 L276.0 12.07 L276.5 12.18 L277.0 12.27 L277.5 12.36 L278.0 12.43 L278.5 12.45 L279.0 12.45 L279.5 12.45 L280.0 12.45 L280.5 12.45 L281.0 12.45 L281.5 12.45 L282.0 12.45 L282.5 12.45 L283.0 12.45 L283.5 12.45 L284.0 12.45 L284.5 12.45 L285.0 12.45 L285.5 12.45 L286.0 12.45 L286.5 12.45 L287.0 12.45 L287.5 12.45 L288.0 12.45 L288.5 12.45 L289.0 12.45 L289.5 12.45 L290.0 12.45 L290.5 12.45 L291.0 12.45 L291.5 12.45 L292.0 12.45 L292.5 12.45 L293.0 11.20 L293.5 11.48 L294.0 11.71 L294.5 11.91 L295.0 12.08 L295.5 12.22 L296.0 12.34 L296.5 12.44 L297.0 12.45 L297.5 12.45 L298.0 12.45 L298.5 12.45 L299.0 12.45 L299.5 12.45 L300.0 12.45 L300.5 12.45 L301.0 12.45 L301.5 12.45 L302.0 12.45 L302.5 12.45 L302.5 13.55 L302.0 13.55 L301.5 13.55 L301.0 13.55 L300.5 13.55 L300.0 13.55 L299.5 13.55 L299.0 13.55 L298.5 13.55 L298.0 13.55 L297.5 13.55 L297.0 13.55 L296.5 13.56 L296.0 13.66 L295.5 13.78 L295.0 13.92 L294.5 14.09 L294.0 14.29 L293.5 14.52 L293.0 14.80 L292.5 13.55 L292.0 13.55 L291.5 13.55 L291.0 13.55 L290.5 13.55 L290.0 13.55 L289.5 13.55 L289.0 13.55 L288.5 13.55 L288.0 13.55 L287.5 13.55 L287.0 13.55 L286.5 13.55 L286.0 13.55 L285.5 13.55 L285.0 13.55 L284.5 13.55 L284.0 13.55 L283.5 13.55 L283.0 13.55 L282.5 13.55 L282.0 13.55 L281.5 13.55 L281.0 13.55 L280.5 13.55 L280.0 13.55 L279.5 13.55 L279.0 13.55 L278.5 13.55 L278.0 13.57 L277.5 13.64 L277.0 13.73 L276.5 13.82 L276.0 13.93 L275.5 14.06 L275.0 14.20 L274.5 13.55 L274.0 13.55 L273.5 13.55 L273.0 13.55 L272.5 13.55 L272.0 13.55 L271.5 13.55 L271.0 13.55 L270.5 13.55 L270.0 13.55 L269.5 13.55 L269.0 13.55 L268.5 13.55 L268.0 13.55 L267.5 13.55 L267.0 13.55 L266.5 13.55 L266.0 13.55 L265.5 13.55 L265.0 13.55 L264.5 13.55 L264.0 13.55 L263.5 13.55 L263.0 13.55 L262.5 13.55 L262.0 13.55 L261.5 13.55 L261.0 13.55 L260.5 13.55 L260.0 13.55 L259.5 13.55 L259.0 13.55 L258.5 13.55 L258.0 13.55 L257.5 13.55 L257.0 13.55 L256.5 13.55 L256.0 13.55 L255.5 13.55 L255.0 13.55 L254.5 13.55 L254.0 13.55 L253.5 13.55 L253.0 13.55 L252.5 13.55 L252.0 13.55 L251.5 13.55 L251.0 13.55 L250.5 13.55 L250.0 13.55 L249.5 13.55 L249.0 13.55 L248.5 13.55 L248.0 13.55 L247.5 13.55 L247.0 13.55 L246.5 13.55 L246.0 13.55 L245.5 13.55 L245.0 13.55 L244.5 13.55 L244.0 13.55 L243.5 13.55 L243.0 13.55 L242.5 13.55 L242.0 13.55 L241.5 13.55 L241.0 13.55 L240.5 13.55 L240.0 13.55 L239.5 13.55 L239.0 13.55 L238.5 13.55 L238.0 13.55 L237.5 13.55 L237.0 13.55 L236.5 13.55 L236.0 13.55 L235.5 13.55 L235.0 13.55 L234.5 13.55 L234.0 13.55 L233.5 13.55 L233.0 13.55 L232.5 13.55 L232.0 13.55 L231.5 13.55 L231.0 13.55 L230.5 13.56 L230.0 13.66 L229.5 13.78 L229.0 13.92 L228.5 14.09 L228.0 14.29 L227.5 14.52 L227.0 14.80 L226.5 13.55 L226.0 13.55 L225.5 13.55 L225.0 13.55 L224.5 13.55 L224.0 13.55 L223.5 13.55 L223.0 13.55 L222.5 13.55 L222.0 13.61 L221.5 13.67 L221.0 13.74 L220.5 13.82 L220.0 13.90 L219.5 14.00 L219.0 14.10 L218.5 14.22 L218.0 14.35 L217.5 14.49 L217.0 14.65 L216.5 14.82 L216.0 15.01 L215.5 15.22 L215.0 15.46 L214.5 15.71 L214.0 16.00 L213.5 16.95 L213.0 18.22 L212.5 19.89 L212.0 22.09 L211.5 25.00 L211.0 13.55 L210.5 13.55 L210.0 13.55 L209.5 13.55 L209.0 13.55 L208.5 13.55 L208.0 13.55 L207.5 13.55 L207.0 13.55 L206.5 13.55 L206.0 13.55 L205.5 13.55 L205.0 13.55 L204.5 13.55 L204.0 13.55 L203.5 13.55 L203.0 13.55 L202.5 13.55 L202.0 13.55 L201.5 13.55 L201.0 13.55 L200.5 13.55 L200.0 13.55 L199.5 13.55 L199.0 13.55 L198.5 13.55 L198.0 13.57 L197.5 13.79 L197.0 14.10 L196.5 14.54 L196.0 15.15 L195.5 16.00 L195.0 13.55 L194.5 13.55 L194.0 13.57 L193.5 13.67 L193.0 13.79 L192.5 13.93 L192.0 14.10 L191.5 14.30 L191.0 14.54 L190.5 14.82 L190.0 15.15 L189.5 15.54 L189.0 16.00 L188.5 14.09 L188.0 14.29 L187.5 14.52 L187.0 14.80 L186.5 15.12 L186.0 15.51 L185.5 15.96 L185.0 16.50 L184.5 14.25 L184.0 14.47 L183.5 14.74 L183.0 15.05 L182.5 15.43 L182.0 15.87 L181.5 16.39 L181.0 17.00 L180.5 14.40 L180.0 14.66 L179.5 14.96 L179.0 15.31 L178.5 15.73 L178.0 16.22 L177.5 16.81 L177.0 17.50 L176.5 14.40 L176.0 14.66 L175.5 14.96 L175.0 15.31 L174.5 15.73 L174.0 16.22 L173.5 16.81 L173.0 17.50 L172.5 14.56 L172.0 14.84 L171.5 15.17 L171.0 15.57 L170.5 16.03 L170.0 16.58 L169.5 17.23 L169.0 18.00 L168.5 14.40 L168.0 14.66 L167.5 14.96 L167.0 15.31 L166.5 15.73 L166.0 16.22 L165.5 16.81 L165.0 17.50 L164.5 14.71 L164.0 15.02 L163.5 15.39 L163.0 15.82 L162.5 16.34 L162.0 16.94 L161.5 17.66 L161.0 18.50 L160.5 13.55 L160.0 13.55 L159.5 13.55 L159.0 13.55 L158.5 13.55 L158.0 13.55 L157.5 13.55 L157.0 13.55 L156.5 13.55 L156.0 13.55 L155.5 13.59 L155.0 13.67 L154.5 13.76 L154.0 13.86 L153.5 13.97 L153.0 14.10 L152.5 14.25 L152.0 14.42 L151.5 14.61 L151.0 14.82 L150.5 15.06 L150.0 15.34 L149.5 15.65 L149.0 16.00 L148.5 16.95 L148.0 18.22 L147.5 19.89 L147.0 22.09 L146.5 25.00 L146.0 13.55 L145.5 13.55 L145.0 13.55 L144.5 13.55 L144.0 13.55 L143.5 13.55 L143.0 13.55 L142.5 13.55 L142.0 13.55 L141.5 13.55 L141.0 13.55 L140.5 13.55 L140.0 13.55 L139.5 13.55 L139.0 13.55 L138.5 13.55 L138.0 13.55 L137.5 13.55 L137.0 13.55 L136.5 13.55 L136.0 13.55 L135.5 13.55 L135.0 13.55 L134.5 13.55 L134.0 13.55 L133.5 13.55 L133.0 13.55 L132.5 13.55 L132.0 13.55 L131.5 13.55 L131.0 13.55 L130.5 13.55 L130.0 13.55 L129.5 13.55 L129.0 13.55 L128.5 13.55 L128.0 13.55 L127.5 13.55 L127.0 13.55 L126.5 13.55 L126.0 13.55 L125.5 13.55 L125.0 13.55 L124.5 13.55 L124.0 13.55 L123.5 13.55 L123.0 13.55 L122.5 13.55 L122.0 13.55 L121.5 13.55 L121.0 13.67 L120.5 13.86 L120.0 14.10 L119.5 14.42 L119.0 14.82 L118.5 15.34 L118.0 16.00 L117.5 13.57 L117.0 13.76 L116.5 14.00 L116.0 14.32 L115.5 14.75 L115.0 15.30 L114.5 16.04 L114.0 17.02 L113.5 18.30 L113.0 20.00 L112.5 13.55 L112.0 13.55 L111.5 13.59 L111.0 13.64 L110.5 13.70 L110.0 13.76 L109.5 13.82 L109.0 13.89 L108.5 13.97 L108.0 14.05 L107.5 14.15 L107.0 14.25 L106.5 14.35 L106.0 14.47 L105.5 14.60 L105.0 14.74 L104.5 14.89 L104.0 15.05 L103.5 15.23 L103.0 15.43 L102.5 15.64 L102.0 15.87 L101.5 16.12 L101.0 16.39 L100.5 16.68 L100.0 17.00 L99.5 16.53 L99.0 17.43 L98.5 18.56 L98.0 19.98 L97.5 21.76 L97.0 24.00 L96.5 13.55 L96.0 13.55 L95.5 13.55 L95.0 13.55 L94.5 13.55 L94.0 13.55 L93.5 13.55 L93.0 13.55 L92.5 13.55 L92.0 13.55 L91.5 13.55 L91.0 13.55 L90.5 13.55 L90.0 13.55 L89.5 13.55 L89.0 13.55 L88.5 13.55 L88.0 13.55 L87.5 13.55 L87.0 13.55 L86.5 13.55 L86.0 13.55 L85.5 13.55 L85.0 13.55 L84.5 13.55 L84.0 13.55 L83.5 13.55 L83.0 13.55 L82.5 13.55 L82.0 13.55 L81.5 13.55 L81.0 13.55 L80.5 13.55 L80.0 13.55 L79.5 13.55 L79.0 13.55 L78.5 13.55 L78.0 13.55 L77.5 13.55 L77.0 13.55 L76.5 13.55 L76.0 13.55 L75.5 13.55 L75.0 13.55 L74.5 13.55 L74.0 13.55 L73.5 13.55 L73.0 13.55 L72.5 13.55 L72.0 13.55 L71.5 13.55 L71.0 13.55 L70.5 13.55 L70.0 13.55 L69.5 13.55 L69.0 13.55 L68.5 13.55 L68.0 13.55 L67.5 13.55 L67.0 13.55 L66.5 13.55 L66.0 13.55 L65.5 13.55 L65.0 13.55 L64.5 13.55 L64.0 13.55 L63.5 13.55 L63.0 13.55 L62.5 13.55 L62.0 13.55 L61.5 13.55 L61.0 13.55 L60.5 13.55 L60.0 13.55 L59.5 13.55 L59.0 13.55 L58.5 13.55 L58.0 13.55 L57.5 13.55 L57.0 13.55 L56.5 13.55 L56.0 13.55 L55.5 13.55 L55.0 13.55 L54.5 13.55 L54.0 13.55 L53.5 13.55 L53.0 13.55 L52.5 13.55 L52.0 13.55 L51.5 13.55 L51.0 13.55 L50.5 13.55 L50.0 13.55 L49.5 13.55 L49.0 13.55 L48.5 13.55 L48.0 13.55 L47.5 13.55 L47.0 13.55 L46.5 13.55 L46.0 13.55 L45.5 13.55 L45.0 13.55 L44.5 13.55 L44.0 13.55 L43.5 13.55 L43.0 13.55 L42.5 13.55 L42.0 13.55 L41.5 13.55 L41.0 13.55 L40.5 13.55 L40.0 13.55 L39.5 13.55 L39.0 13.55 L38.5 13.55 L38.0 13.55 L37.5 13.55 L37.0 13.55 L36.5 13.55 L36.0 13.55 L35.5 13.57 L35.0 13.74 L34.5 13.94 L34.0 14.21 L33.5 14.56 L33.0 15.00 L32.5 13.55 L32.0 13.55 L31.5 13.55 L31.0 13.55 L30.5 13.55 L30.0 13.55 L29.5 13.55 L29.0 13.55 L28.5 13.55 L28.0 13.55 L27.5 13.55 L27.0 13.55 L26.5 13.55 L26.0 13.55 L25.5 13.55 L25.0 13.55 L24.5 13.55 L24.0 13.55 L23.5 13.55 L23.0 13.55 L22.5 13.55 L22.0 13.55 L21.5 13.55 L21.0 13.55 L20.5 13.55 L20.0 13.55 L19.5 13.55 L19.0 13.55 L18.5 13.55 L18.0 13.55 L17.5 13.55 L17.0 13.55 L16.5 13.55 L16.0 13.55 L15.5 13.55 L15.0 13.55 L14.5 13.55 L14.0 13.55 L13.5 13.55 L13.0 13.55 L12.5 13.55 L12.0 13.55 L11.5 13.55 L11.0 13.55 L10.5 13.55 L10.0 13.55 L9.5 13.55 L9.0 13.55 L8.5 13.55 L8.0 13.55 L7.5 13.55 L7.0 13.55 L6.5 13.55 L6.0 13.55 L5.5 13.55 L5.0 13.55 L4.5 13.55 L4.0 13.55 L3.5 13.55 L3.0 13.55 L2.5 13.55 L2.0 13.55 L1.5 13.55 L1.0 13.55 L0.5 13.55 L0.0 13.55 Z" fill="#b8f5c8"/></svg><div style="position:absolute;left:1092px;top:91px;width:1px;height:262px;background:#d8d8d8;"></div><svg style="position:absolute;left:1086px;top:91px;" width="13" height="12" viewBox="0 0 13 12"><path d="M0.5 2.5 Q0.5 0.5 2.5 0.5 H10.5 Q12.5 0.5 12.5 2.5 V6.5 L6.5 11.5 L0.5 6.5 Z" fill="#d0d0d0"/></svg><div style="position:absolute;left:0px;top:352.5px;width:1286px;height:1.5px;background:#141414;"></div><div style="position:absolute;left:0px;top:353.5px;width:1286px;height:25px;background:#434343;"></div><div style="position:absolute;left:8px;top:360px;width:158px;height:15px;background:#525252;border-radius:4px;"></div><div style="position:absolute;left:15px;top:361.0px;font-size:9.75px;line-height:11.75px;color:#dcdcdc;white-space:nowrap;">Edit</div><svg style="position:absolute;left:37px;top:363.5px;" width="8" height="8" viewBox="0 0 8 8"><path d="M1.5 2.5 L4 5 L6.5 2.5" fill="none" stroke="#a8a8a8" stroke-width="1.1"/></svg><div style="position:absolute;left:50px;top:361px;width:1px;height:13px;background:#3e3e3e;"></div><div style="position:absolute;left:57px;top:361.0px;font-size:9.75px;line-height:11.75px;color:#dcdcdc;white-space:nowrap;">Functions</div><svg style="position:absolute;left:107px;top:363.5px;" width="8" height="8" viewBox="0 0 8 8"><path d="M1.5 2.5 L4 5 L6.5 2.5" fill="none" stroke="#a8a8a8" stroke-width="1.1"/></svg><div style="position:absolute;left:120px;top:361px;width:1px;height:13px;background:#3e3e3e;"></div><div style="position:absolute;left:127px;top:361.0px;font-size:9.75px;line-height:11.75px;color:#dcdcdc;white-space:nowrap;">View</div><svg style="position:absolute;left:153px;top:363.5px;" width="8" height="8" viewBox="0 0 8 8"><path d="M1.5 2.5 L4 5 L6.5 2.5" fill="none" stroke="#a8a8a8" stroke-width="1.1"/></svg><div style="position:absolute;left:173px;top:360px;width:44px;height:15px;background:#525252;border-radius:4px;"></div><div style="position:absolute;left:195px;top:361px;width:1px;height:13px;background:#3e3e3e;"></div><svg style="position:absolute;left:177px;top:360px;" width="15" height="15" viewBox="0 0 15 15"><rect x="2.5" y="2.5" width="8" height="8" rx="1" fill="none" stroke="#d8d8d8" stroke-width="1"/><rect x="5" y="5" width="8" height="8" rx="1" fill="#4a4a4a" stroke="#d8d8d8" stroke-width="1"/><path d="M6.5 7.5 H11.5 M6.5 9.5 H11.5 M6.5 11.5 H11.5" stroke="#bbb" stroke-width="0.7"/></svg><svg style="position:absolute;left:199px;top:360px;" width="15" height="15" viewBox="0 0 15 15"><circle cx="7.5" cy="7.5" r="5.5" fill="none" stroke="#d8d8d8" stroke-width="1.1"/><path d="M7.5 6.5 V10.5" stroke="#d8d8d8" stroke-width="1.2"/><circle cx="7.5" cy="4.6" r="0.8" fill="#d8d8d8"/></svg><div style="position:absolute;left:224px;top:360px;width:46px;height:15px;background:#525252;border-radius:4px;"></div><div style="position:absolute;left:247px;top:360px;width:23px;height:15px;background:#2f9a3c;border-radius:0 4px 4px 0;"></div><svg style="position:absolute;left:226px;top:360px;" width="20" height="15" viewBox="0 0 20 15"><path d="M2 5 L4.5 7.5 L2 10" fill="none" stroke="#ddd" stroke-width="1"/><path d="M6 8.5 A5.5 5.5 0 1 1 17 8.5 L15.5 11.0 L13 9.5 L11.5 11.0 L10 9.5 L7.5 11.0 Z" fill="#f0f0f0"/><circle cx="9.5" cy="6.0" r="1" fill="#4a4a4a"/><circle cx="13.5" cy="6.0" r="1" fill="#4a4a4a"/></svg><svg style="position:absolute;left:249px;top:360px;" width="20" height="15" viewBox="0 0 20 15"><path d="M3 8.5 A5.5 5.5 0 1 1 14 8.5 L12.5 11.0 L10 9.5 L8.5 11.0 L7 9.5 L4.5 11.0 Z" fill="#f0f0f0"/><circle cx="6.5" cy="6.0" r="1" fill="#2f9a3c"/><circle cx="10.5" cy="6.0" r="1" fill="#2f9a3c"/><path d="M15 5 L17.5 7.5 L15 10" fill="none" stroke="#ddd" stroke-width="1"/></svg><div style="position:absolute;left:276px;top:360px;width:23px;height:15px;background:#525252;border-radius:4px;"></div><svg style="position:absolute;left:280px;top:360px;" width="15" height="15" viewBox="0 0 15 15"><path d="M5.5 2 L9.5 6 M9.5 2 L5.5 6" stroke="#e8e8e8" stroke-width="1.1"/><rect x="4.5" y="8" width="6" height="5.5" fill="#f0f0f0"/></svg><div style="position:absolute;left:305.5px;top:360px;width:198px;height:15px;background:#525252;border-radius:4px;"></div><div style="position:absolute;left:305.5px;top:360px;width:92px;height:15px;background:#2a6ed0;border-radius:4px 0 0 4px;"></div><div style="position:absolute;left:305.5px;top:361px;font-size:9.8px;line-height:11.8px;color:#ffffff;white-space:nowrap;width:92px;text-align:center;">Step On/Off</div><div style="position:absolute;left:397px;top:361px;font-size:9.75px;line-height:11.75px;color:#e4e4e4;white-space:nowrap;width:91px;text-align:center;">Velocity / Value</div><div style="position:absolute;left:488px;top:361px;width:1px;height:13px;background:#3e3e3e;"></div><svg style="position:absolute;left:492px;top:361.5px;" width="8" height="12" viewBox="0 0 8 12"><path d="M1.5 4.5 L4 2 L6.5 4.5 M1.5 7.5 L4 10 L6.5 7.5" fill="none" stroke="#a8a8a8" stroke-width="1.1"/></svg><div style="position:absolute;left:1068.5px;top:359.5px;width:23.5px;height:15px;background:#525252;border-radius:4px;"></div><svg style="position:absolute;left:1070px;top:359.5px;" width="22" height="15" viewBox="0 0 22 15"><path d="M2.5 5 L5 7.5 L2.5 10" fill="none" stroke="#ddd" stroke-width="1"/><circle cx="12" cy="7.5" r="5.2" fill="#f2f2f2"/><text x="12" y="10" font-size="6.5" text-anchor="middle" fill="#4a4a4a" font-family="Liberation Sans" font-weight="bold">R</text></svg><div style="position:absolute;left:1099.5px;top:359.5px;width:23px;height:15px;background:#4a4a4a;border-radius:4px;"></div><svg style="position:absolute;left:1103px;top:359.5px;" width="16" height="15" viewBox="0 0 16 15"><path d="M3 5.5 H5.5 L9 3 V12 L5.5 9.5 H3 Z" fill="#cfcfcf"/><circle cx="11.5" cy="7.5" r="1" fill="#cfcfcf"/></svg><div style="position:absolute;left:1129.5px;top:359.5px;width:23px;height:15px;background:#5a5a5a;border-radius:4px;"></div><svg style="position:absolute;left:1133px;top:359.5px;" width="16" height="15" viewBox="0 0 16 15"><path d="M8 2 V13 M5.5 2 H10.5 M5.5 13 H10.5 M6 4.5 L8 6.5 L10 4.5 M6 10.5 L8 8.5 L10 10.5" fill="none" stroke="#e8e8e8" stroke-width="1"/></svg><div style="position:absolute;left:1160px;top:359.5px;width:53.5px;height:15px;background:#383838;border-radius:4px;"></div><svg style="position:absolute;left:1163px;top:361px;" width="8" height="12" viewBox="0 0 8 12"><path d="M1.5 4.5 L4 2 L6.5 4.5 M1.5 7.5 L4 10 L6.5 7.5" fill="none" stroke="#a8a8a8" stroke-width="1.1"/></svg><div style="position:absolute;left:1176px;top:366px;width:33px;height:2px;background:#262626;border-radius:1px;"></div><div style="position:absolute;left:1185px;top:361.5px;width:11px;height:11px;background:#a8a8a8;border-radius:50%;"></div><svg style="position:absolute;left:1219px;top:360px;" width="16" height="15" viewBox="0 0 16 15"><path d="M2 7.5 H14 M4.5 5 L2 7.5 L4.5 10 M11.5 5 L14 7.5 L11.5 10" fill="none" stroke="#9a9a9a" stroke-width="1.1"/></svg><div style="position:absolute;left:1235px;top:359.5px;width:43px;height:15px;background:#525252;border-radius:4px;"></div><div style="position:absolute;left:1256px;top:360.5px;width:1px;height:13px;background:#3e3e3e;"></div><svg style="position:absolute;left:1239px;top:359.5px;" width="14" height="15" viewBox="0 0 14 15"><rect x="3.5" y="2.5" width="7" height="10" rx="1" fill="none" stroke="#9a9a9a" stroke-width="1"/></svg><svg style="position:absolute;left:1259px;top:359.5px;" width="18" height="15" viewBox="0 0 18 15"><rect x="2.5" y="3" width="13" height="9" rx="1" fill="none" stroke="#e0e0e0" stroke-width="1.1"/></svg><div style="position:absolute;left:0px;top:378.5px;width:291.5px;height:28px;background:#434343;"></div><div style="position:absolute;left:291.5px;top:378.5px;width:994.5px;height:28px;background:#313131;"></div><div style="position:absolute;left:7px;top:387.5px;width:29px;height:13px;background:#525252;border-radius:4px;"></div><svg style="position:absolute;left:9px;top:387.5px;" width="14" height="13" viewBox="0 0 14 13"><path d="M7 2.5 V10.5 M3 6.5 H11" stroke="#dcdcdc" stroke-width="1.2"/></svg><svg style="position:absolute;left:25px;top:389px;" width="8" height="8" viewBox="0 0 8 8"><path d="M1.5 2.5 L4 5 L6.5 2.5" fill="none" stroke="#a8a8a8" stroke-width="1.1"/></svg><div style="position:absolute;left:140.5px;top:387.5px;width:40.5px;height:13px;background:#525252;border-radius:4px;"></div><div style="position:absolute;left:146px;top:387.5px;font-size:9.8px;line-height:11.8px;color:#dcdcdc;white-space:nowrap;line-height:13px;">/16</div><svg style="position:absolute;left:170px;top:388px;" width="8" height="12" viewBox="0 0 8 12"><path d="M1.5 4.5 L4 2 L6.5 4.5 M1.5 7.5 L4 10 L6.5 7.5" fill="none" stroke="#a8a8a8" stroke-width="1.1"/></svg><div style="position:absolute;left:187px;top:387.5px;width:28.5px;height:13px;background:#525252;border-radius:4px;"></div><svg style="position:absolute;left:187px;top:387.5px;" width="14" height="13" viewBox="0 0 14 13"><path d="M2.8 6.5 H10.5 M7.5 3.5 L10.5 6.5 L7.5 9.5" fill="none" stroke="#e6e6e6" stroke-width="1.1"/></svg><svg style="position:absolute;left:207px;top:387.5px;" width="6" height="13" viewBox="0 0 6 13"><path d="M1.2 5.3 L3 3.5 L4.8 5.3 M1.2 7.7 L3 9.5 L4.8 7.7" fill="none" stroke="#8a8a8a" stroke-width="0.9"/></svg><div style="position:absolute;left:220px;top:387.5px;width:28.5px;height:13px;background:#525252;border-radius:4px;"></div><div style="position:absolute;left:234px;top:388.5px;width:1px;height:11px;background:rgba(0,0,0,0.12);"></div><svg style="position:absolute;left:220px;top:387.5px;" width="29" height="13" viewBox="0 0 29 13"><path d="M3 6.5 L5.2 4.5 V8.5 Z M23.8 4.5 L26 6.5 L23.8 8.5 Z" fill="#e6e6e6"/><rect x="6.8" y="3.4" width="3.6" height="6.2" rx="1" fill="none" stroke="#e6e6e6" stroke-width="1"/><rect x="18.6" y="3.4" width="3.6" height="6.2" rx="1" fill="none" stroke="#e6e6e6" stroke-width="1"/></svg><div style="position:absolute;left:254px;top:387.5px;width:29px;height:13px;background:#525252;border-radius:4px;"></div><div style="position:absolute;left:268.5px;top:388.5px;width:1px;height:11px;background:rgba(0,0,0,0.12);"></div><svg style="position:absolute;left:254px;top:387.5px;" width="29" height="13" viewBox="0 0 29 13"><path d="M3.5 4.5 L7 8.0 L10.5 4.5 M18.5 8.0 L22 4.5 L25.5 8.0" fill="none" stroke="#e0e0e0" stroke-width="1.1"/></svg><div style="position:absolute;left:297px;top:387.5px;width:108px;height:13.5px;background:#363636;border-radius:4px;"></div><div style="position:absolute;left:303px;top:388px;font-size:9.25px;line-height:11.25px;color:#d6d06c;white-space:nowrap;line-height:13px;">Trap Beat 1</div><div style="position:absolute;left:1026.5px;top:386.6px;width:41px;height:14.1px;background:#525252;border-radius:4px;"></div><div style="position:absolute;left:1033px;top:386.8px;font-size:9.8px;line-height:11.8px;color:#dcdcdc;white-space:nowrap;line-height:13px;">C</div><svg style="position:absolute;left:1056px;top:387.6px;" width="8" height="12" viewBox="0 0 8 12"><path d="M1.5 4.5 L4 2 L6.5 4.5 M1.5 7.5 L4 10 L6.5 7.5" fill="none" stroke="#a8a8a8" stroke-width="1.1"/></svg><div style="position:absolute;left:1072px;top:386.6px;width:83px;height:14.1px;background:#525252;border-radius:4px;"></div><div style="position:absolute;left:1078px;top:386.8px;font-size:9.8px;line-height:11.8px;color:#dcdcdc;white-space:nowrap;line-height:13px;">Off</div><svg style="position:absolute;left:1143px;top:387.6px;" width="8" height="12" viewBox="0 0 8 12"><path d="M1.5 4.5 L4 2 L6.5 4.5 M1.5 7.5 L4 10 L6.5 7.5" fill="none" stroke="#a8a8a8" stroke-width="1.1"/></svg><div style="position:absolute;left:1160px;top:386.6px;width:28.5px;height:14.1px;background:#3a3a3a;border-radius:4px;"></div><div style="position:absolute;left:1169px;top:388px;font-size:9.5px;line-height:11.5px;color:#808080;white-space:nowrap;line-height:13px;">Q</div><div style="position:absolute;left:1196px;top:386.6px;width:83px;height:14.1px;background:#525252;border-radius:4px;"></div><div style="position:absolute;left:1203px;top:386.8px;font-size:9.8px;line-height:11.8px;color:#dcdcdc;white-space:nowrap;line-height:13px;">32 Steps</div><svg style="position:absolute;left:1267px;top:387.6px;" width="8" height="12" viewBox="0 0 8 12"><path d="M1.5 4.5 L4 2 L6.5 4.5 M1.5 7.5 L4 10 L6.5 7.5" fill="none" stroke="#a8a8a8" stroke-width="1.1"/></svg><div style="position:absolute;left:0px;top:406.5px;width:291.5px;height:398px;background:#3d3d3d;"></div><div style="position:absolute;left:291.5px;top:406.5px;width:994.5px;height:398px;background:#242424;"></div><div style="position:absolute;left:291.5px;top:406.5px;width:5px;height:398px;background:#1f1f1f;"></div><div style="position:absolute;left:0px;top:406.5px;width:291.5px;height:28.3px;background:#4b4b4b;"></div><div style="position:absolute;left:296.5px;top:716.3px;width:980.5px;height:87.70000000000005px;background:#2d202c;"></div><div style="position:absolute;left:0px;top:434.8px;width:291.5px;height:1px;background:#353535;"></div><div style="position:absolute;left:0px;top:463.1px;width:291.5px;height:1px;background:#353535;"></div><div style="position:absolute;left:0px;top:491.4px;width:291.5px;height:1px;background:#353535;"></div><div style="position:absolute;left:0px;top:519.7px;width:291.5px;height:1px;background:#353535;"></div><div style="position:absolute;left:0px;top:548.0px;width:291.5px;height:1px;background:#353535;"></div><div style="position:absolute;left:0px;top:576.3px;width:291.5px;height:1px;background:#353535;"></div><div style="position:absolute;left:0px;top:604.6px;width:291.5px;height:1px;background:#353535;"></div><div style="position:absolute;left:0px;top:632.9px;width:291.5px;height:1px;background:#353535;"></div><div style="position:absolute;left:0px;top:661.2px;width:291.5px;height:1px;background:#353535;"></div><div style="position:absolute;left:0px;top:689.5px;width:291.5px;height:1px;background:#353535;"></div><div style="position:absolute;left:0px;top:717.8px;width:291.5px;height:1px;background:#353535;"></div><div style="position:absolute;left:0px;top:746.1px;width:291.5px;height:1px;background:#353535;"></div><div style="position:absolute;left:20px;top:774.4000000000001px;width:271.5px;height:1px;background:#353535;"></div><svg style="position:absolute;left:3px;top:416.2px;" width="8" height="10" viewBox="0 0 8 10"><path d="M2.2 2 L5.8 5 L2.2 8" fill="none" stroke="#cfcfcf" stroke-width="1.1"/></svg><svg style="position:absolute;left:13px;top:411.7px;" width="20" height="19" viewBox="0 0 20 19"><circle cx="10" cy="9.2" r="7.2" fill="none" stroke="#c070c8" stroke-width="1.4"/><path d="M10 8 V14" stroke="#d060d0" stroke-width="1.5"/><circle cx="10" cy="8" r="1.3" fill="#d060d0"/><circle cx="10" cy="15.2" r="2.7" fill="#e050e0"/><path d="M10 15.2 L3.6 17.8 M10 15.2 L16.4 17.8" stroke="#d860d8" stroke-width="1.6" stroke-linecap="round"/></svg><div style="position:absolute;left:41.5px;top:415.59999999999997px;width:28.5px;height:11.3px;background:#525252;border-radius:4px;"></div><div style="position:absolute;left:56px;top:416.59999999999997px;width:1px;height:9.3px;background:rgba(0,0,0,0.12);"></div><div style="position:absolute;left:41.5px;top:414.7px;font-size:9.6px;line-height:11.6px;color:#ececec;white-space:nowrap;width:14.5px;text-align:center;line-height:13px;">M</div><div style="position:absolute;left:56.5px;top:414.7px;font-size:9.6px;line-height:11.6px;color:#ececec;white-space:nowrap;width:14.5px;text-align:center;line-height:13px;">S</div><div style="position:absolute;left:74px;top:414.7px;font-size:9.5px;line-height:11.5px;color:#ececec;white-space:nowrap;line-height:13px;">Kick 1</div><svg style="position:absolute;left:104.4px;top:415.2px;" width="8" height="12" viewBox="0 0 8 12"><path d="M1.5 4.5 L4 2 L6.5 4.5 M1.5 7.5 L4 10 L6.5 7.5" fill="none" stroke="#c8c8c8" stroke-width="1.1"/></svg><div style="position:absolute;left:186px;top:415.59999999999997px;width:28.5px;height:11.3px;background:#525252;border-radius:4px;"></div><svg style="position:absolute;left:186px;top:415.59999999999997px;" width="14" height="11.3" viewBox="0 0 14 11.3"><path d="M2.8 5.65 H10.5 M7.5 2.6500000000000004 L10.5 5.65 L7.5 8.65" fill="none" stroke="#e6e6e6" stroke-width="1.1"/></svg><svg style="position:absolute;left:206px;top:415.59999999999997px;" width="6" height="11.3" viewBox="0 0 6 11.3"><path d="M1.2 4.45 L3 2.6500000000000004 L4.8 4.45 M1.2 6.8500000000000005 L3 8.65 L4.8 6.8500000000000005" fill="none" stroke="#8a8a8a" stroke-width="0.9"/></svg><div style="position:absolute;left:220px;top:415.59999999999997px;width:28.5px;height:11.3px;background:#525252;border-radius:4px;"></div><div style="position:absolute;left:234px;top:416.59999999999997px;width:1px;height:9.3px;background:rgba(0,0,0,0.12);"></div><svg style="position:absolute;left:220px;top:415.59999999999997px;" width="29" height="11.3" viewBox="0 0 29 11.3"><path d="M3 5.65 L5.2 3.6500000000000004 V7.65 Z M23.8 3.6500000000000004 L26 5.65 L23.8 7.65 Z" fill="#e6e6e6"/><rect x="6.8" y="2.5500000000000003" width="3.6" height="6.2" rx="1" fill="none" stroke="#e6e6e6" stroke-width="1"/><rect x="18.6" y="2.5500000000000003" width="3.6" height="6.2" rx="1" fill="none" stroke="#e6e6e6" stroke-width="1"/></svg><div style="position:absolute;left:254px;top:415.59999999999997px;width:29px;height:11.3px;background:#525252;border-radius:4px;"></div><div style="position:absolute;left:268.5px;top:416.59999999999997px;width:1px;height:9.3px;background:rgba(0,0,0,0.12);"></div><svg style="position:absolute;left:254px;top:415.59999999999997px;" width="29" height="11.3" viewBox="0 0 29 11.3"><path d="M3.5 3.6500000000000004 L7 7.15 L10.5 3.6500000000000004 M18.5 7.15 L22 3.6500000000000004 L25.5 7.15" fill="none" stroke="#e0e0e0" stroke-width="1.1"/></svg><svg style="position:absolute;left:3px;top:444.5px;" width="8" height="10" viewBox="0 0 8 10"><path d="M2.2 2 L5.8 5 L2.2 8" fill="none" stroke="#cfcfcf" stroke-width="1.1"/></svg><svg style="position:absolute;left:13px;top:440.0px;" width="20" height="19" viewBox="0 0 20 19"><circle cx="10" cy="9.2" r="7.2" fill="none" stroke="#c070c8" stroke-width="1.4"/><path d="M10 8 V14" stroke="#d060d0" stroke-width="1.5"/><circle cx="10" cy="8" r="1.3" fill="#d060d0"/><circle cx="10" cy="15.2" r="2.7" fill="#e050e0"/><path d="M10 15.2 L3.6 17.8 M10 15.2 L16.4 17.8" stroke="#d860d8" stroke-width="1.6" stroke-linecap="round"/></svg><div style="position:absolute;left:41.5px;top:443.9px;width:28.5px;height:11.3px;background:#525252;border-radius:4px;"></div><div style="position:absolute;left:56px;top:444.9px;width:1px;height:9.3px;background:rgba(0,0,0,0.12);"></div><div style="position:absolute;left:41.5px;top:443.0px;font-size:9.6px;line-height:11.6px;color:#ececec;white-space:nowrap;width:14.5px;text-align:center;line-height:13px;">M</div><div style="position:absolute;left:56.5px;top:443.0px;font-size:9.6px;line-height:11.6px;color:#ececec;white-space:nowrap;width:14.5px;text-align:center;line-height:13px;">S</div><div style="position:absolute;left:74px;top:443.0px;font-size:9.5px;line-height:11.5px;color:#ececec;white-space:nowrap;line-height:13px;">Kick 2</div><svg style="position:absolute;left:104.4px;top:443.5px;" width="8" height="12" viewBox="0 0 8 12"><path d="M1.5 4.5 L4 2 L6.5 4.5 M1.5 7.5 L4 10 L6.5 7.5" fill="none" stroke="#c8c8c8" stroke-width="1.1"/></svg><div style="position:absolute;left:186px;top:443.9px;width:28.5px;height:11.3px;background:#525252;border-radius:4px;"></div><svg style="position:absolute;left:186px;top:443.9px;" width="14" height="11.3" viewBox="0 0 14 11.3"><path d="M2.8 5.65 H10.5 M7.5 2.6500000000000004 L10.5 5.65 L7.5 8.65" fill="none" stroke="#e6e6e6" stroke-width="1.1"/></svg><svg style="position:absolute;left:206px;top:443.9px;" width="6" height="11.3" viewBox="0 0 6 11.3"><path d="M1.2 4.45 L3 2.6500000000000004 L4.8 4.45 M1.2 6.8500000000000005 L3 8.65 L4.8 6.8500000000000005" fill="none" stroke="#8a8a8a" stroke-width="0.9"/></svg><div style="position:absolute;left:220px;top:443.9px;width:28.5px;height:11.3px;background:#525252;border-radius:4px;"></div><div style="position:absolute;left:234px;top:444.9px;width:1px;height:9.3px;background:rgba(0,0,0,0.12);"></div><svg style="position:absolute;left:220px;top:443.9px;" width="29" height="11.3" viewBox="0 0 29 11.3"><path d="M3 5.65 L5.2 3.6500000000000004 V7.65 Z M23.8 3.6500000000000004 L26 5.65 L23.8 7.65 Z" fill="#e6e6e6"/><rect x="6.8" y="2.5500000000000003" width="3.6" height="6.2" rx="1" fill="none" stroke="#e6e6e6" stroke-width="1"/><rect x="18.6" y="2.5500000000000003" width="3.6" height="6.2" rx="1" fill="none" stroke="#e6e6e6" stroke-width="1"/></svg><div style="position:absolute;left:254px;top:443.9px;width:29px;height:11.3px;background:#525252;border-radius:4px;"></div><div style="position:absolute;left:268.5px;top:444.9px;width:1px;height:9.3px;background:rgba(0,0,0,0.12);"></div><svg style="position:absolute;left:254px;top:443.9px;" width="29" height="11.3" viewBox="0 0 29 11.3"><path d="M3.5 3.6500000000000004 L7 7.15 L10.5 3.6500000000000004 M18.5 7.15 L22 3.6500000000000004 L25.5 7.15" fill="none" stroke="#e0e0e0" stroke-width="1.1"/></svg><svg style="position:absolute;left:3px;top:472.8px;" width="8" height="10" viewBox="0 0 8 10"><path d="M2.2 2 L5.8 5 L2.2 8" fill="none" stroke="#cfcfcf" stroke-width="1.1"/></svg><svg style="position:absolute;left:13px;top:468.3px;" width="20" height="19" viewBox="0 0 20 19"><ellipse cx="10" cy="5" rx="8.5" ry="2.6" fill="#e0901c"/><path d="M1.5 5 V14 Q10 18 18.5 14 V5" fill="#e0901c"/><ellipse cx="10" cy="5" rx="7" ry="1.6" fill="#7a4a10"/><path d="M4 9 V14 M7 10 V15 M10 10 V15.5 M13 10 V15 M16 9 V14" stroke="#5a3a10" stroke-width="1"/><path d="M1.5 9.5 Q10 12.5 18.5 9.5" stroke="#5a3a10" stroke-width="0.8" fill="none"/></svg><div style="position:absolute;left:41.5px;top:472.2px;width:28.5px;height:11.3px;background:#525252;border-radius:4px;"></div><div style="position:absolute;left:56px;top:473.2px;width:1px;height:9.3px;background:rgba(0,0,0,0.12);"></div><div style="position:absolute;left:41.5px;top:471.3px;font-size:9.6px;line-height:11.6px;color:#ececec;white-space:nowrap;width:14.5px;text-align:center;line-height:13px;">M</div><div style="position:absolute;left:56.5px;top:471.3px;font-size:9.6px;line-height:11.6px;color:#ececec;white-space:nowrap;width:14.5px;text-align:center;line-height:13px;">S</div><div style="position:absolute;left:74px;top:471.3px;font-size:9.5px;line-height:11.5px;color:#ececec;white-space:nowrap;line-height:13px;">Snare 1</div><svg style="position:absolute;left:111.8px;top:471.8px;" width="8" height="12" viewBox="0 0 8 12"><path d="M1.5 4.5 L4 2 L6.5 4.5 M1.5 7.5 L4 10 L6.5 7.5" fill="none" stroke="#c8c8c8" stroke-width="1.1"/></svg><div style="position:absolute;left:186px;top:472.2px;width:28.5px;height:11.3px;background:#525252;border-radius:4px;"></div><svg style="position:absolute;left:186px;top:472.2px;" width="14" height="11.3" viewBox="0 0 14 11.3"><path d="M2.8 5.65 H10.5 M7.5 2.6500000000000004 L10.5 5.65 L7.5 8.65" fill="none" stroke="#e6e6e6" stroke-width="1.1"/></svg><svg style="position:absolute;left:206px;top:472.2px;" width="6" height="11.3" viewBox="0 0 6 11.3"><path d="M1.2 4.45 L3 2.6500000000000004 L4.8 4.45 M1.2 6.8500000000000005 L3 8.65 L4.8 6.8500000000000005" fill="none" stroke="#8a8a8a" stroke-width="0.9"/></svg><div style="position:absolute;left:220px;top:472.2px;width:28.5px;height:11.3px;background:#525252;border-radius:4px;"></div><div style="position:absolute;left:234px;top:473.2px;width:1px;height:9.3px;background:rgba(0,0,0,0.12);"></div><svg style="position:absolute;left:220px;top:472.2px;" width="29" height="11.3" viewBox="0 0 29 11.3"><path d="M3 5.65 L5.2 3.6500000000000004 V7.65 Z M23.8 3.6500000000000004 L26 5.65 L23.8 7.65 Z" fill="#e6e6e6"/><rect x="6.8" y="2.5500000000000003" width="3.6" height="6.2" rx="1" fill="none" stroke="#e6e6e6" stroke-width="1"/><rect x="18.6" y="2.5500000000000003" width="3.6" height="6.2" rx="1" fill="none" stroke="#e6e6e6" stroke-width="1"/></svg><div style="position:absolute;left:254px;top:472.2px;width:29px;height:11.3px;background:#525252;border-radius:4px;"></div><div style="position:absolute;left:268.5px;top:473.2px;width:1px;height:9.3px;background:rgba(0,0,0,0.12);"></div><svg style="position:absolute;left:254px;top:472.2px;" width="29" height="11.3" viewBox="0 0 29 11.3"><path d="M3.5 3.6500000000000004 L7 7.15 L10.5 3.6500000000000004 M18.5 7.15 L22 3.6500000000000004 L25.5 7.15" fill="none" stroke="#e0e0e0" stroke-width="1.1"/></svg><svg style="position:absolute;left:3px;top:501.1px;" width="8" height="10" viewBox="0 0 8 10"><path d="M2.2 2 L5.8 5 L2.2 8" fill="none" stroke="#cfcfcf" stroke-width="1.1"/></svg><svg style="position:absolute;left:13px;top:496.6px;" width="20" height="19" viewBox="0 0 20 19"><path d="M5 17 Q1 13 2 9 L4 7 Q5 6 6 7 L7 9 L6 3 Q6 1.5 7.5 2 L9.5 7 L9 1.5 Q10 0 11.5 1.5 L12 7 L13.5 2.5 Q15 1.5 15.5 3 L14.5 8 L17 5.5 Q18.5 5 18.5 6.5 L14 14 Q11 18 5 17 Z" fill="#f0981c"/></svg><div style="position:absolute;left:41.5px;top:500.5px;width:28.5px;height:11.3px;background:#525252;border-radius:4px;"></div><div style="position:absolute;left:56px;top:501.5px;width:1px;height:9.3px;background:rgba(0,0,0,0.12);"></div><div style="position:absolute;left:41.5px;top:499.6px;font-size:9.6px;line-height:11.6px;color:#ececec;white-space:nowrap;width:14.5px;text-align:center;line-height:13px;">M</div><div style="position:absolute;left:56.5px;top:499.6px;font-size:9.6px;line-height:11.6px;color:#ececec;white-space:nowrap;width:14.5px;text-align:center;line-height:13px;">S</div><div style="position:absolute;left:74px;top:499.6px;font-size:9.5px;line-height:11.5px;color:#ececec;white-space:nowrap;line-height:13px;">Clap 1</div><svg style="position:absolute;left:106.0px;top:500.1px;" width="8" height="12" viewBox="0 0 8 12"><path d="M1.5 4.5 L4 2 L6.5 4.5 M1.5 7.5 L4 10 L6.5 7.5" fill="none" stroke="#c8c8c8" stroke-width="1.1"/></svg><div style="position:absolute;left:186px;top:500.5px;width:28.5px;height:11.3px;background:#525252;border-radius:4px;"></div><svg style="position:absolute;left:186px;top:500.5px;" width="14" height="11.3" viewBox="0 0 14 11.3"><path d="M2.8 5.65 H10.5 M7.5 2.6500000000000004 L10.5 5.65 L7.5 8.65" fill="none" stroke="#e6e6e6" stroke-width="1.1"/></svg><svg style="position:absolute;left:206px;top:500.5px;" width="6" height="11.3" viewBox="0 0 6 11.3"><path d="M1.2 4.45 L3 2.6500000000000004 L4.8 4.45 M1.2 6.8500000000000005 L3 8.65 L4.8 6.8500000000000005" fill="none" stroke="#8a8a8a" stroke-width="0.9"/></svg><div style="position:absolute;left:220px;top:500.5px;width:28.5px;height:11.3px;background:#525252;border-radius:4px;"></div><div style="position:absolute;left:234px;top:501.5px;width:1px;height:9.3px;background:rgba(0,0,0,0.12);"></div><svg style="position:absolute;left:220px;top:500.5px;" width="29" height="11.3" viewBox="0 0 29 11.3"><path d="M3 5.65 L5.2 3.6500000000000004 V7.65 Z M23.8 3.6500000000000004 L26 5.65 L23.8 7.65 Z" fill="#e6e6e6"/><rect x="6.8" y="2.5500000000000003" width="3.6" height="6.2" rx="1" fill="none" stroke="#e6e6e6" stroke-width="1"/><rect x="18.6" y="2.5500000000000003" width="3.6" height="6.2" rx="1" fill="none" stroke="#e6e6e6" stroke-width="1"/></svg><div style="position:absolute;left:254px;top:500.5px;width:29px;height:11.3px;background:#525252;border-radius:4px;"></div><div style="position:absolute;left:268.5px;top:501.5px;width:1px;height:9.3px;background:rgba(0,0,0,0.12);"></div><svg style="position:absolute;left:254px;top:500.5px;" width="29" height="11.3" viewBox="0 0 29 11.3"><path d="M3.5 3.6500000000000004 L7 7.15 L10.5 3.6500000000000004 M18.5 7.15 L22 3.6500000000000004 L25.5 7.15" fill="none" stroke="#e0e0e0" stroke-width="1.1"/></svg><svg style="position:absolute;left:3px;top:529.4px;" width="8" height="10" viewBox="0 0 8 10"><path d="M2.2 2 L5.8 5 L2.2 8" fill="none" stroke="#cfcfcf" stroke-width="1.1"/></svg><svg style="position:absolute;left:13px;top:524.9px;" width="20" height="19" viewBox="0 0 20 19"><ellipse cx="13.5" cy="6.5" rx="5" ry="6" transform="rotate(40 13.5 6.5)" fill="#a070e0"/><path d="M10 10 L3 17" stroke="#a070e0" stroke-width="3" stroke-linecap="round"/></svg><div style="position:absolute;left:41.5px;top:528.8px;width:28.5px;height:11.3px;background:#525252;border-radius:4px;"></div><div style="position:absolute;left:56px;top:529.8px;width:1px;height:9.3px;background:rgba(0,0,0,0.12);"></div><div style="position:absolute;left:41.5px;top:527.9px;font-size:9.6px;line-height:11.6px;color:#ececec;white-space:nowrap;width:14.5px;text-align:center;line-height:13px;">M</div><div style="position:absolute;left:56.5px;top:527.9px;font-size:9.6px;line-height:11.6px;color:#ececec;white-space:nowrap;width:14.5px;text-align:center;line-height:13px;">S</div><div style="position:absolute;left:74px;top:527.9px;font-size:9.5px;line-height:11.5px;color:#ececec;white-space:nowrap;line-height:13px;">Shaker 2</div><svg style="position:absolute;left:116.5px;top:528.4px;" width="8" height="12" viewBox="0 0 8 12"><path d="M1.5 4.5 L4 2 L6.5 4.5 M1.5 7.5 L4 10 L6.5 7.5" fill="none" stroke="#c8c8c8" stroke-width="1.1"/></svg><div style="position:absolute;left:186px;top:528.8px;width:28.5px;height:11.3px;background:#525252;border-radius:4px;"></div><svg style="position:absolute;left:186px;top:528.8px;" width="14" height="11.3" viewBox="0 0 14 11.3"><path d="M2.8 5.65 H10.5 M7.5 2.6500000000000004 L10.5 5.65 L7.5 8.65" fill="none" stroke="#e6e6e6" stroke-width="1.1"/></svg><svg style="position:absolute;left:206px;top:528.8px;" width="6" height="11.3" viewBox="0 0 6 11.3"><path d="M1.2 4.45 L3 2.6500000000000004 L4.8 4.45 M1.2 6.8500000000000005 L3 8.65 L4.8 6.8500000000000005" fill="none" stroke="#8a8a8a" stroke-width="0.9"/></svg><div style="position:absolute;left:220px;top:528.8px;width:28.5px;height:11.3px;background:#525252;border-radius:4px;"></div><div style="position:absolute;left:234px;top:529.8px;width:1px;height:9.3px;background:rgba(0,0,0,0.12);"></div><svg style="position:absolute;left:220px;top:528.8px;" width="29" height="11.3" viewBox="0 0 29 11.3"><path d="M3 5.65 L5.2 3.6500000000000004 V7.65 Z M23.8 3.6500000000000004 L26 5.65 L23.8 7.65 Z" fill="#e6e6e6"/><rect x="6.8" y="2.5500000000000003" width="3.6" height="6.2" rx="1" fill="none" stroke="#e6e6e6" stroke-width="1"/><rect x="18.6" y="2.5500000000000003" width="3.6" height="6.2" rx="1" fill="none" stroke="#e6e6e6" stroke-width="1"/></svg><div style="position:absolute;left:254px;top:528.8px;width:29px;height:11.3px;background:#525252;border-radius:4px;"></div><div style="position:absolute;left:268.5px;top:529.8px;width:1px;height:9.3px;background:rgba(0,0,0,0.12);"></div><svg style="position:absolute;left:254px;top:528.8px;" width="29" height="11.3" viewBox="0 0 29 11.3"><path d="M3.5 3.6500000000000004 L7 7.15 L10.5 3.6500000000000004 M18.5 7.15 L22 3.6500000000000004 L25.5 7.15" fill="none" stroke="#e0e0e0" stroke-width="1.1"/></svg><svg style="position:absolute;left:3px;top:557.7px;" width="8" height="10" viewBox="0 0 8 10"><path d="M2.2 2 L5.8 5 L2.2 8" fill="none" stroke="#cfcfcf" stroke-width="1.1"/></svg><svg style="position:absolute;left:13px;top:553.2px;" width="20" height="19" viewBox="0 0 20 19"><path d="M10 1.5 V5" stroke="#20c0c0" stroke-width="1.2"/><path d="M2 9 Q10 3 18 9 Z" fill="#20c0c0"/><ellipse cx="10" cy="9.5" rx="8.5" ry="2" fill="#20c0c0"/><ellipse cx="10" cy="12.5" rx="8.5" ry="2.3" fill="#20c0c0"/></svg><div style="position:absolute;left:41.5px;top:557.1px;width:28.5px;height:11.3px;background:#525252;border-radius:4px;"></div><div style="position:absolute;left:56px;top:558.1px;width:1px;height:9.3px;background:rgba(0,0,0,0.12);"></div><div style="position:absolute;left:41.5px;top:556.2px;font-size:9.6px;line-height:11.6px;color:#ececec;white-space:nowrap;width:14.5px;text-align:center;line-height:13px;">M</div><div style="position:absolute;left:56.5px;top:556.2px;font-size:9.6px;line-height:11.6px;color:#ececec;white-space:nowrap;width:14.5px;text-align:center;line-height:13px;">S</div><div style="position:absolute;left:74px;top:556.2px;font-size:9.5px;line-height:11.5px;color:#ececec;white-space:nowrap;line-height:13px;">Hi-Hat 1</div><svg style="position:absolute;left:113.3px;top:556.7px;" width="8" height="12" viewBox="0 0 8 12"><path d="M1.5 4.5 L4 2 L6.5 4.5 M1.5 7.5 L4 10 L6.5 7.5" fill="none" stroke="#c8c8c8" stroke-width="1.1"/></svg><div style="position:absolute;left:186px;top:557.1px;width:28.5px;height:11.3px;background:#525252;border-radius:4px;"></div><svg style="position:absolute;left:186px;top:557.1px;" width="14" height="11.3" viewBox="0 0 14 11.3"><path d="M2.8 5.65 H10.5 M7.5 2.6500000000000004 L10.5 5.65 L7.5 8.65" fill="none" stroke="#e6e6e6" stroke-width="1.1"/></svg><svg style="position:absolute;left:206px;top:557.1px;" width="6" height="11.3" viewBox="0 0 6 11.3"><path d="M1.2 4.45 L3 2.6500000000000004 L4.8 4.45 M1.2 6.8500000000000005 L3 8.65 L4.8 6.8500000000000005" fill="none" stroke="#8a8a8a" stroke-width="0.9"/></svg><div style="position:absolute;left:220px;top:557.1px;width:28.5px;height:11.3px;background:#525252;border-radius:4px;"></div><div style="position:absolute;left:234px;top:558.1px;width:1px;height:9.3px;background:rgba(0,0,0,0.12);"></div><svg style="position:absolute;left:220px;top:557.1px;" width="29" height="11.3" viewBox="0 0 29 11.3"><path d="M3 5.65 L5.2 3.6500000000000004 V7.65 Z M23.8 3.6500000000000004 L26 5.65 L23.8 7.65 Z" fill="#e6e6e6"/><rect x="6.8" y="2.5500000000000003" width="3.6" height="6.2" rx="1" fill="none" stroke="#e6e6e6" stroke-width="1"/><rect x="18.6" y="2.5500000000000003" width="3.6" height="6.2" rx="1" fill="none" stroke="#e6e6e6" stroke-width="1"/></svg><div style="position:absolute;left:254px;top:557.1px;width:29px;height:11.3px;background:#525252;border-radius:4px;"></div><div style="position:absolute;left:268.5px;top:558.1px;width:1px;height:9.3px;background:rgba(0,0,0,0.12);"></div><svg style="position:absolute;left:254px;top:557.1px;" width="29" height="11.3" viewBox="0 0 29 11.3"><path d="M3.5 3.6500000000000004 L7 7.15 L10.5 3.6500000000000004 M18.5 7.15 L22 3.6500000000000004 L25.5 7.15" fill="none" stroke="#e0e0e0" stroke-width="1.1"/></svg><svg style="position:absolute;left:3px;top:586.0px;" width="8" height="10" viewBox="0 0 8 10"><path d="M2.2 2 L5.8 5 L2.2 8" fill="none" stroke="#cfcfcf" stroke-width="1.1"/></svg><svg style="position:absolute;left:13px;top:581.5px;" width="20" height="19" viewBox="0 0 20 19"><path d="M10 1.5 V5" stroke="#20c0c0" stroke-width="1.2"/><path d="M2 9 Q10 3 18 9 Z" fill="#20c0c0"/><ellipse cx="10" cy="9.5" rx="8.5" ry="2" fill="#20c0c0"/><ellipse cx="10" cy="13.5" rx="8.5" ry="2.5" fill="#20c0c0"/></svg><div style="position:absolute;left:41.5px;top:585.4px;width:28.5px;height:11.3px;background:#525252;border-radius:4px;"></div><div style="position:absolute;left:56px;top:586.4px;width:1px;height:9.3px;background:rgba(0,0,0,0.12);"></div><div style="position:absolute;left:41.5px;top:584.5px;font-size:9.6px;line-height:11.6px;color:#ececec;white-space:nowrap;width:14.5px;text-align:center;line-height:13px;">M</div><div style="position:absolute;left:56.5px;top:584.5px;font-size:9.6px;line-height:11.6px;color:#ececec;white-space:nowrap;width:14.5px;text-align:center;line-height:13px;">S</div><div style="position:absolute;left:74px;top:584.5px;font-size:9.5px;line-height:11.5px;color:#ececec;white-space:nowrap;line-height:13px;">Hi-Hat Open</div><svg style="position:absolute;left:131.3px;top:585.0px;" width="8" height="12" viewBox="0 0 8 12"><path d="M1.5 4.5 L4 2 L6.5 4.5 M1.5 7.5 L4 10 L6.5 7.5" fill="none" stroke="#c8c8c8" stroke-width="1.1"/></svg><div style="position:absolute;left:186px;top:585.4px;width:28.5px;height:11.3px;background:#525252;border-radius:4px;"></div><svg style="position:absolute;left:186px;top:585.4px;" width="14" height="11.3" viewBox="0 0 14 11.3"><path d="M2.8 5.65 H10.5 M7.5 2.6500000000000004 L10.5 5.65 L7.5 8.65" fill="none" stroke="#e6e6e6" stroke-width="1.1"/></svg><svg style="position:absolute;left:206px;top:585.4px;" width="6" height="11.3" viewBox="0 0 6 11.3"><path d="M1.2 4.45 L3 2.6500000000000004 L4.8 4.45 M1.2 6.8500000000000005 L3 8.65 L4.8 6.8500000000000005" fill="none" stroke="#8a8a8a" stroke-width="0.9"/></svg><div style="position:absolute;left:220px;top:585.4px;width:28.5px;height:11.3px;background:#525252;border-radius:4px;"></div><div style="position:absolute;left:234px;top:586.4px;width:1px;height:9.3px;background:rgba(0,0,0,0.12);"></div><svg style="position:absolute;left:220px;top:585.4px;" width="29" height="11.3" viewBox="0 0 29 11.3"><path d="M3 5.65 L5.2 3.6500000000000004 V7.65 Z M23.8 3.6500000000000004 L26 5.65 L23.8 7.65 Z" fill="#e6e6e6"/><rect x="6.8" y="2.5500000000000003" width="3.6" height="6.2" rx="1" fill="none" stroke="#e6e6e6" stroke-width="1"/><rect x="18.6" y="2.5500000000000003" width="3.6" height="6.2" rx="1" fill="none" stroke="#e6e6e6" stroke-width="1"/></svg><div style="position:absolute;left:254px;top:585.4px;width:29px;height:11.3px;background:#525252;border-radius:4px;"></div><div style="position:absolute;left:268.5px;top:586.4px;width:1px;height:9.3px;background:rgba(0,0,0,0.12);"></div><svg style="position:absolute;left:254px;top:585.4px;" width="29" height="11.3" viewBox="0 0 29 11.3"><path d="M3.5 3.6500000000000004 L7 7.15 L10.5 3.6500000000000004 M18.5 7.15 L22 3.6500000000000004 L25.5 7.15" fill="none" stroke="#e0e0e0" stroke-width="1.1"/></svg><svg style="position:absolute;left:3px;top:614.3px;" width="8" height="10" viewBox="0 0 8 10"><path d="M2.2 2 L5.8 5 L2.2 8" fill="none" stroke="#cfcfcf" stroke-width="1.1"/></svg><svg style="position:absolute;left:13px;top:609.8px;" width="20" height="19" viewBox="0 0 20 19"><ellipse cx="10" cy="5" rx="8.5" ry="2.6" fill="#e0901c"/><path d="M1.5 5 V14 Q10 18 18.5 14 V5" fill="#e0901c"/><ellipse cx="10" cy="5" rx="7" ry="1.6" fill="#7a4a10"/><path d="M4 9 V14 M7 10 V15 M10 10 V15.5 M13 10 V15 M16 9 V14" stroke="#5a3a10" stroke-width="1"/><path d="M1.5 9.5 Q10 12.5 18.5 9.5" stroke="#5a3a10" stroke-width="0.8" fill="none"/></svg><div style="position:absolute;left:41.5px;top:613.6999999999999px;width:28.5px;height:11.3px;background:#525252;border-radius:4px;"></div><div style="position:absolute;left:56px;top:614.6999999999999px;width:1px;height:9.3px;background:rgba(0,0,0,0.12);"></div><div style="position:absolute;left:41.5px;top:612.8px;font-size:9.6px;line-height:11.6px;color:#ececec;white-space:nowrap;width:14.5px;text-align:center;line-height:13px;">M</div><div style="position:absolute;left:56.5px;top:612.8px;font-size:9.6px;line-height:11.6px;color:#ececec;white-space:nowrap;width:14.5px;text-align:center;line-height:13px;">S</div><div style="position:absolute;left:74px;top:612.8px;font-size:9.5px;line-height:11.5px;color:#ececec;white-space:nowrap;line-height:13px;">Rim</div><svg style="position:absolute;left:95.4px;top:613.3px;" width="8" height="12" viewBox="0 0 8 12"><path d="M1.5 4.5 L4 2 L6.5 4.5 M1.5 7.5 L4 10 L6.5 7.5" fill="none" stroke="#c8c8c8" stroke-width="1.1"/></svg><div style="position:absolute;left:186px;top:613.6999999999999px;width:28.5px;height:11.3px;background:#525252;border-radius:4px;"></div><svg style="position:absolute;left:186px;top:613.6999999999999px;" width="14" height="11.3" viewBox="0 0 14 11.3"><path d="M2.8 5.65 H10.5 M7.5 2.6500000000000004 L10.5 5.65 L7.5 8.65" fill="none" stroke="#e6e6e6" stroke-width="1.1"/></svg><svg style="position:absolute;left:206px;top:613.6999999999999px;" width="6" height="11.3" viewBox="0 0 6 11.3"><path d="M1.2 4.45 L3 2.6500000000000004 L4.8 4.45 M1.2 6.8500000000000005 L3 8.65 L4.8 6.8500000000000005" fill="none" stroke="#8a8a8a" stroke-width="0.9"/></svg><div style="position:absolute;left:220px;top:613.6999999999999px;width:28.5px;height:11.3px;background:#525252;border-radius:4px;"></div><div style="position:absolute;left:234px;top:614.6999999999999px;width:1px;height:9.3px;background:rgba(0,0,0,0.12);"></div><svg style="position:absolute;left:220px;top:613.6999999999999px;" width="29" height="11.3" viewBox="0 0 29 11.3"><path d="M3 5.65 L5.2 3.6500000000000004 V7.65 Z M23.8 3.6500000000000004 L26 5.65 L23.8 7.65 Z" fill="#e6e6e6"/><rect x="6.8" y="2.5500000000000003" width="3.6" height="6.2" rx="1" fill="none" stroke="#e6e6e6" stroke-width="1"/><rect x="18.6" y="2.5500000000000003" width="3.6" height="6.2" rx="1" fill="none" stroke="#e6e6e6" stroke-width="1"/></svg><div style="position:absolute;left:254px;top:613.6999999999999px;width:29px;height:11.3px;background:#525252;border-radius:4px;"></div><div style="position:absolute;left:268.5px;top:614.6999999999999px;width:1px;height:9.3px;background:rgba(0,0,0,0.12);"></div><svg style="position:absolute;left:254px;top:613.6999999999999px;" width="29" height="11.3" viewBox="0 0 29 11.3"><path d="M3.5 3.6500000000000004 L7 7.15 L10.5 3.6500000000000004 M18.5 7.15 L22 3.6500000000000004 L25.5 7.15" fill="none" stroke="#e0e0e0" stroke-width="1.1"/></svg><svg style="position:absolute;left:3px;top:642.6px;" width="8" height="10" viewBox="0 0 8 10"><path d="M2.2 2 L5.8 5 L2.2 8" fill="none" stroke="#cfcfcf" stroke-width="1.1"/></svg><svg style="position:absolute;left:13px;top:638.1px;" width="20" height="19" viewBox="0 0 20 19"><ellipse cx="10" cy="5" rx="8.5" ry="2.6" fill="#e0901c"/><path d="M1.5 5 V14 Q10 18 18.5 14 V5" fill="#e0901c"/><ellipse cx="10" cy="5" rx="7" ry="1.6" fill="#7a4a10"/><path d="M4 9 V14 M7 10 V15 M10 10 V15.5 M13 10 V15 M16 9 V14" stroke="#5a3a10" stroke-width="1"/><path d="M1.5 9.5 Q10 12.5 18.5 9.5" stroke="#5a3a10" stroke-width="0.8" fill="none"/></svg><div style="position:absolute;left:41.5px;top:642.0px;width:28.5px;height:11.3px;background:#525252;border-radius:4px;"></div><div style="position:absolute;left:56px;top:643.0px;width:1px;height:9.3px;background:rgba(0,0,0,0.12);"></div><div style="position:absolute;left:41.5px;top:641.1px;font-size:9.6px;line-height:11.6px;color:#ececec;white-space:nowrap;width:14.5px;text-align:center;line-height:13px;">M</div><div style="position:absolute;left:56.5px;top:641.1px;font-size:9.6px;line-height:11.6px;color:#ececec;white-space:nowrap;width:14.5px;text-align:center;line-height:13px;">S</div><div style="position:absolute;left:74px;top:641.1px;font-size:9.5px;line-height:11.5px;color:#ececec;white-space:nowrap;line-height:13px;">Snare 2</div><svg style="position:absolute;left:111.8px;top:641.6px;" width="8" height="12" viewBox="0 0 8 12"><path d="M1.5 4.5 L4 2 L6.5 4.5 M1.5 7.5 L4 10 L6.5 7.5" fill="none" stroke="#c8c8c8" stroke-width="1.1"/></svg><div style="position:absolute;left:186px;top:642.0px;width:28.5px;height:11.3px;background:#525252;border-radius:4px;"></div><svg style="position:absolute;left:186px;top:642.0px;" width="14" height="11.3" viewBox="0 0 14 11.3"><path d="M2.8 5.65 H10.5 M7.5 2.6500000000000004 L10.5 5.65 L7.5 8.65" fill="none" stroke="#e6e6e6" stroke-width="1.1"/></svg><svg style="position:absolute;left:206px;top:642.0px;" width="6" height="11.3" viewBox="0 0 6 11.3"><path d="M1.2 4.45 L3 2.6500000000000004 L4.8 4.45 M1.2 6.8500000000000005 L3 8.65 L4.8 6.8500000000000005" fill="none" stroke="#8a8a8a" stroke-width="0.9"/></svg><div style="position:absolute;left:220px;top:642.0px;width:28.5px;height:11.3px;background:#525252;border-radius:4px;"></div><div style="position:absolute;left:234px;top:643.0px;width:1px;height:9.3px;background:rgba(0,0,0,0.12);"></div><svg style="position:absolute;left:220px;top:642.0px;" width="29" height="11.3" viewBox="0 0 29 11.3"><path d="M3 5.65 L5.2 3.6500000000000004 V7.65 Z M23.8 3.6500000000000004 L26 5.65 L23.8 7.65 Z" fill="#e6e6e6"/><rect x="6.8" y="2.5500000000000003" width="3.6" height="6.2" rx="1" fill="none" stroke="#e6e6e6" stroke-width="1"/><rect x="18.6" y="2.5500000000000003" width="3.6" height="6.2" rx="1" fill="none" stroke="#e6e6e6" stroke-width="1"/></svg><div style="position:absolute;left:254px;top:642.0px;width:29px;height:11.3px;background:#525252;border-radius:4px;"></div><div style="position:absolute;left:268.5px;top:643.0px;width:1px;height:9.3px;background:rgba(0,0,0,0.12);"></div><svg style="position:absolute;left:254px;top:642.0px;" width="29" height="11.3" viewBox="0 0 29 11.3"><path d="M3.5 3.6500000000000004 L7 7.15 L10.5 3.6500000000000004 M18.5 7.15 L22 3.6500000000000004 L25.5 7.15" fill="none" stroke="#e0e0e0" stroke-width="1.1"/></svg><svg style="position:absolute;left:3px;top:670.9px;" width="8" height="10" viewBox="0 0 8 10"><path d="M2.2 2 L5.8 5 L2.2 8" fill="none" stroke="#cfcfcf" stroke-width="1.1"/></svg><svg style="position:absolute;left:13px;top:666.4px;" width="20" height="19" viewBox="0 0 20 19"><path d="M2 10 L10 3 L15 4 L18 9 L9 17 Z" fill="#a070e0"/><circle cx="15" cy="3" r="1.8" fill="none" stroke="#a070e0" stroke-width="1.1"/></svg><div style="position:absolute;left:41.5px;top:670.3px;width:28.5px;height:11.3px;background:#525252;border-radius:4px;"></div><div style="position:absolute;left:56px;top:671.3px;width:1px;height:9.3px;background:rgba(0,0,0,0.12);"></div><div style="position:absolute;left:41.5px;top:669.4px;font-size:9.6px;line-height:11.6px;color:#ececec;white-space:nowrap;width:14.5px;text-align:center;line-height:13px;">M</div><div style="position:absolute;left:56.5px;top:669.4px;font-size:9.6px;line-height:11.6px;color:#ececec;white-space:nowrap;width:14.5px;text-align:center;line-height:13px;">S</div><div style="position:absolute;left:74px;top:669.4px;font-size:9.5px;line-height:11.5px;color:#ececec;white-space:nowrap;line-height:13px;">Cowbell 1</div><svg style="position:absolute;left:120.2px;top:669.9px;" width="8" height="12" viewBox="0 0 8 12"><path d="M1.5 4.5 L4 2 L6.5 4.5 M1.5 7.5 L4 10 L6.5 7.5" fill="none" stroke="#c8c8c8" stroke-width="1.1"/></svg><div style="position:absolute;left:186px;top:670.3px;width:28.5px;height:11.3px;background:#525252;border-radius:4px;"></div><svg style="position:absolute;left:186px;top:670.3px;" width="14" height="11.3" viewBox="0 0 14 11.3"><path d="M2.8 5.65 H10.5 M7.5 2.6500000000000004 L10.5 5.65 L7.5 8.65" fill="none" stroke="#e6e6e6" stroke-width="1.1"/></svg><svg style="position:absolute;left:206px;top:670.3px;" width="6" height="11.3" viewBox="0 0 6 11.3"><path d="M1.2 4.45 L3 2.6500000000000004 L4.8 4.45 M1.2 6.8500000000000005 L3 8.65 L4.8 6.8500000000000005" fill="none" stroke="#8a8a8a" stroke-width="0.9"/></svg><div style="position:absolute;left:220px;top:670.3px;width:28.5px;height:11.3px;background:#525252;border-radius:4px;"></div><div style="position:absolute;left:234px;top:671.3px;width:1px;height:9.3px;background:rgba(0,0,0,0.12);"></div><svg style="position:absolute;left:220px;top:670.3px;" width="29" height="11.3" viewBox="0 0 29 11.3"><path d="M3 5.65 L5.2 3.6500000000000004 V7.65 Z M23.8 3.6500000000000004 L26 5.65 L23.8 7.65 Z" fill="#e6e6e6"/><rect x="6.8" y="2.5500000000000003" width="3.6" height="6.2" rx="1" fill="none" stroke="#e6e6e6" stroke-width="1"/><rect x="18.6" y="2.5500000000000003" width="3.6" height="6.2" rx="1" fill="none" stroke="#e6e6e6" stroke-width="1"/></svg><div style="position:absolute;left:254px;top:670.3px;width:29px;height:11.3px;background:#525252;border-radius:4px;"></div><div style="position:absolute;left:268.5px;top:671.3px;width:1px;height:9.3px;background:rgba(0,0,0,0.12);"></div><svg style="position:absolute;left:254px;top:670.3px;" width="29" height="11.3" viewBox="0 0 29 11.3"><path d="M3.5 3.6500000000000004 L7 7.15 L10.5 3.6500000000000004 M18.5 7.15 L22 3.6500000000000004 L25.5 7.15" fill="none" stroke="#e0e0e0" stroke-width="1.1"/></svg><svg style="position:absolute;left:3px;top:699.2px;" width="8" height="10" viewBox="0 0 8 10"><path d="M2.2 2 L5.8 5 L2.2 8" fill="none" stroke="#cfcfcf" stroke-width="1.1"/></svg><svg style="position:absolute;left:13px;top:694.7px;" width="20" height="19" viewBox="0 0 20 19"><path d="M2 10 L10 3 L15 4 L18 9 L9 17 Z" fill="#a070e0"/><circle cx="15" cy="3" r="1.8" fill="none" stroke="#a070e0" stroke-width="1.1"/></svg><div style="position:absolute;left:41.5px;top:698.6px;width:28.5px;height:11.3px;background:#525252;border-radius:4px;"></div><div style="position:absolute;left:56px;top:699.6px;width:1px;height:9.3px;background:rgba(0,0,0,0.12);"></div><div style="position:absolute;left:41.5px;top:697.7px;font-size:9.6px;line-height:11.6px;color:#ececec;white-space:nowrap;width:14.5px;text-align:center;line-height:13px;">M</div><div style="position:absolute;left:56.5px;top:697.7px;font-size:9.6px;line-height:11.6px;color:#ececec;white-space:nowrap;width:14.5px;text-align:center;line-height:13px;">S</div><div style="position:absolute;left:74px;top:697.7px;font-size:9.5px;line-height:11.5px;color:#ececec;white-space:nowrap;line-height:13px;">Cowbell 2</div><svg style="position:absolute;left:120.2px;top:698.2px;" width="8" height="12" viewBox="0 0 8 12"><path d="M1.5 4.5 L4 2 L6.5 4.5 M1.5 7.5 L4 10 L6.5 7.5" fill="none" stroke="#c8c8c8" stroke-width="1.1"/></svg><div style="position:absolute;left:186px;top:698.6px;width:28.5px;height:11.3px;background:#525252;border-radius:4px;"></div><svg style="position:absolute;left:186px;top:698.6px;" width="14" height="11.3" viewBox="0 0 14 11.3"><path d="M2.8 5.65 H10.5 M7.5 2.6500000000000004 L10.5 5.65 L7.5 8.65" fill="none" stroke="#e6e6e6" stroke-width="1.1"/></svg><svg style="position:absolute;left:206px;top:698.6px;" width="6" height="11.3" viewBox="0 0 6 11.3"><path d="M1.2 4.45 L3 2.6500000000000004 L4.8 4.45 M1.2 6.8500000000000005 L3 8.65 L4.8 6.8500000000000005" fill="none" stroke="#8a8a8a" stroke-width="0.9"/></svg><div style="position:absolute;left:220px;top:698.6px;width:28.5px;height:11.3px;background:#525252;border-radius:4px;"></div><div style="position:absolute;left:234px;top:699.6px;width:1px;height:9.3px;background:rgba(0,0,0,0.12);"></div><svg style="position:absolute;left:220px;top:698.6px;" width="29" height="11.3" viewBox="0 0 29 11.3"><path d="M3 5.65 L5.2 3.6500000000000004 V7.65 Z M23.8 3.6500000000000004 L26 5.65 L23.8 7.65 Z" fill="#e6e6e6"/><rect x="6.8" y="2.5500000000000003" width="3.6" height="6.2" rx="1" fill="none" stroke="#e6e6e6" stroke-width="1"/><rect x="18.6" y="2.5500000000000003" width="3.6" height="6.2" rx="1" fill="none" stroke="#e6e6e6" stroke-width="1"/></svg><div style="position:absolute;left:254px;top:698.6px;width:29px;height:11.3px;background:#525252;border-radius:4px;"></div><div style="position:absolute;left:268.5px;top:699.6px;width:1px;height:9.3px;background:rgba(0,0,0,0.12);"></div><svg style="position:absolute;left:254px;top:698.6px;" width="29" height="11.3" viewBox="0 0 29 11.3"><path d="M3.5 3.6500000000000004 L7 7.15 L10.5 3.6500000000000004 M18.5 7.15 L22 3.6500000000000004 L25.5 7.15" fill="none" stroke="#e0e0e0" stroke-width="1.1"/></svg><svg style="position:absolute;left:3px;top:727.5px;" width="8" height="10" viewBox="0 0 8 10"><path d="M1 3 L4 6.5 L7 3" fill="none" stroke="#cfcfcf" stroke-width="1.1"/></svg><svg style="position:absolute;left:13px;top:723.0px;" width="20" height="19" viewBox="0 0 20 19"><path d="M10 1.5 V5" stroke="#d050d8" stroke-width="1.2"/><path d="M2 9 Q10 3 18 9 Z" fill="#d050d8"/><ellipse cx="10" cy="9.5" rx="8.5" ry="2" fill="#d050d8"/><ellipse cx="10" cy="12.5" rx="8.5" ry="2.3" fill="#d050d8"/></svg><div style="position:absolute;left:41.5px;top:726.9px;width:28.5px;height:11.3px;background:#525252;border-radius:4px;"></div><div style="position:absolute;left:56px;top:727.9px;width:1px;height:9.3px;background:rgba(0,0,0,0.12);"></div><div style="position:absolute;left:41.5px;top:726.0px;font-size:9.6px;line-height:11.6px;color:#ececec;white-space:nowrap;width:14.5px;text-align:center;line-height:13px;">M</div><div style="position:absolute;left:56.5px;top:726.0px;font-size:9.6px;line-height:11.6px;color:#ececec;white-space:nowrap;width:14.5px;text-align:center;line-height:13px;">S</div><div style="position:absolute;left:74px;top:726.0px;font-size:9.5px;line-height:11.5px;color:#ececec;white-space:nowrap;line-height:13px;">Hi-Hat 2</div><svg style="position:absolute;left:113.3px;top:726.5px;" width="8" height="12" viewBox="0 0 8 12"><path d="M1.5 4.5 L4 2 L6.5 4.5 M1.5 7.5 L4 10 L6.5 7.5" fill="none" stroke="#c8c8c8" stroke-width="1.1"/></svg><div style="position:absolute;left:186px;top:726.9px;width:28.5px;height:11.3px;background:#525252;border-radius:4px;"></div><svg style="position:absolute;left:186px;top:726.9px;" width="14" height="11.3" viewBox="0 0 14 11.3"><path d="M2.8 5.65 H10.5 M7.5 2.6500000000000004 L10.5 5.65 L7.5 8.65" fill="none" stroke="#e6e6e6" stroke-width="1.1"/></svg><svg style="position:absolute;left:206px;top:726.9px;" width="6" height="11.3" viewBox="0 0 6 11.3"><path d="M1.2 4.45 L3 2.6500000000000004 L4.8 4.45 M1.2 6.8500000000000005 L3 8.65 L4.8 6.8500000000000005" fill="none" stroke="#8a8a8a" stroke-width="0.9"/></svg><div style="position:absolute;left:220px;top:726.9px;width:28.5px;height:11.3px;background:#525252;border-radius:4px;"></div><div style="position:absolute;left:234px;top:727.9px;width:1px;height:9.3px;background:rgba(0,0,0,0.12);"></div><svg style="position:absolute;left:220px;top:726.9px;" width="29" height="11.3" viewBox="0 0 29 11.3"><path d="M3 5.65 L5.2 3.6500000000000004 V7.65 Z M23.8 3.6500000000000004 L26 5.65 L23.8 7.65 Z" fill="#e6e6e6"/><rect x="6.8" y="2.5500000000000003" width="3.6" height="6.2" rx="1" fill="none" stroke="#e6e6e6" stroke-width="1"/><rect x="18.6" y="2.5500000000000003" width="3.6" height="6.2" rx="1" fill="none" stroke="#e6e6e6" stroke-width="1"/></svg><div style="position:absolute;left:254px;top:726.9px;width:29px;height:11.3px;background:#525252;border-radius:4px;"></div><div style="position:absolute;left:268.5px;top:727.9px;width:1px;height:9.3px;background:rgba(0,0,0,0.12);"></div><svg style="position:absolute;left:254px;top:726.9px;" width="29" height="11.3" viewBox="0 0 29 11.3"><path d="M3.5 3.6500000000000004 L7 7.15 L10.5 3.6500000000000004 M18.5 7.15 L22 3.6500000000000004 L25.5 7.15" fill="none" stroke="#e0e0e0" stroke-width="1.1"/></svg><div style="position:absolute;left:100px;top:754.8px;font-size:8.5px;line-height:10.5px;color:#d8d8d8;white-space:nowrap;width:109px;text-align:right;line-height:12px;">Velocity</div><svg style="position:absolute;left:209.5px;top:754.8px;" width="8" height="12" viewBox="0 0 8 12"><path d="M1.5 4.5 L4 2 L6.5 4.5 M1.5 7.5 L4 10 L6.5 7.5" fill="none" stroke="#bdbdbd" stroke-width="1.1"/></svg><div style="position:absolute;left:220px;top:755.1999999999999px;width:28.5px;height:11.3px;background:#525252;border-radius:4px;"></div><div style="position:absolute;left:234px;top:756.1999999999999px;width:1px;height:9.3px;background:rgba(0,0,0,0.12);"></div><svg style="position:absolute;left:220px;top:755.1999999999999px;" width="29" height="11.3" viewBox="0 0 29 11.3"><path d="M3 5.65 L5.2 3.6500000000000004 V7.65 Z M23.8 3.6500000000000004 L26 5.65 L23.8 7.65 Z" fill="#e6e6e6"/><rect x="6.8" y="2.5500000000000003" width="3.6" height="6.2" rx="1" fill="none" stroke="#e6e6e6" stroke-width="1"/><rect x="18.6" y="2.5500000000000003" width="3.6" height="6.2" rx="1" fill="none" stroke="#e6e6e6" stroke-width="1"/></svg><div style="position:absolute;left:254px;top:755.1999999999999px;width:29px;height:11.3px;background:#525252;border-radius:4px;"></div><div style="position:absolute;left:268.5px;top:756.1999999999999px;width:1px;height:9.3px;background:rgba(0,0,0,0.12);"></div><svg style="position:absolute;left:254px;top:755.1999999999999px;" width="29" height="11.3" viewBox="0 0 29 11.3"><path d="M3.5 3.6500000000000004 L7 7.15 L10.5 3.6500000000000004 M18.5 7.15 L22 3.6500000000000004 L25.5 7.15" fill="none" stroke="#e0e0e0" stroke-width="1.1"/></svg><div style="position:absolute;left:100px;top:783.1px;font-size:8.5px;line-height:10.5px;color:#d8d8d8;white-space:nowrap;width:109px;text-align:right;line-height:12px;">Note Repeat</div><svg style="position:absolute;left:209.5px;top:783.1px;" width="8" height="12" viewBox="0 0 8 12"><path d="M1.5 4.5 L4 2 L6.5 4.5 M1.5 7.5 L4 10 L6.5 7.5" fill="none" stroke="#bdbdbd" stroke-width="1.1"/></svg><div style="position:absolute;left:220px;top:783.5px;width:28.5px;height:11.3px;background:#525252;border-radius:4px;"></div><div style="position:absolute;left:234px;top:784.5px;width:1px;height:9.3px;background:rgba(0,0,0,0.12);"></div><svg style="position:absolute;left:220px;top:783.5px;" width="29" height="11.3" viewBox="0 0 29 11.3"><path d="M3 5.65 L5.2 3.6500000000000004 V7.65 Z M23.8 3.6500000000000004 L26 5.65 L23.8 7.65 Z" fill="#e6e6e6"/><rect x="6.8" y="2.5500000000000003" width="3.6" height="6.2" rx="1" fill="none" stroke="#e6e6e6" stroke-width="1"/><rect x="18.6" y="2.5500000000000003" width="3.6" height="6.2" rx="1" fill="none" stroke="#e6e6e6" stroke-width="1"/></svg><div style="position:absolute;left:254px;top:783.5px;width:29px;height:11.3px;background:#525252;border-radius:4px;"></div><div style="position:absolute;left:268.5px;top:784.5px;width:1px;height:9.3px;background:rgba(0,0,0,0.12);"></div><svg style="position:absolute;left:254px;top:783.5px;" width="29" height="11.3" viewBox="0 0 29 11.3"><path d="M3.5 3.6500000000000004 L7 7.15 L10.5 3.6500000000000004 M18.5 7.15 L22 3.6500000000000004 L25.5 7.15" fill="none" stroke="#e0e0e0" stroke-width="1.1"/></svg><div style="position:absolute;left:418.86px;top:406.5px;width:1px;height:398px;background:#2a2a2a;"></div><div style="position:absolute;left:541.12px;top:406.5px;width:1px;height:398px;background:#2a2a2a;"></div><div style="position:absolute;left:663.38px;top:406.5px;width:1px;height:398px;background:#2a2a2a;"></div><div style="position:absolute;left:785.64px;top:406.5px;width:1px;height:398px;background:#2a2a2a;"></div><div style="position:absolute;left:907.9px;top:406.5px;width:1px;height:398px;background:#2a2a2a;"></div><div style="position:absolute;left:1030.16px;top:406.5px;width:1px;height:398px;background:#2a2a2a;"></div><div style="position:absolute;left:1152.42px;top:406.5px;width:1px;height:398px;background:#2a2a2a;"></div><div style="position:absolute;left:298.2px;top:408.8px;width:29.9px;height:24.2px;background:#cb14b6;border:1px solid #160612;border-radius:2.5px;box-sizing:border-box;"></div><div style="position:absolute;left:328.37px;top:408.8px;width:29.9px;height:24.2px;background:#37152e;border:1px solid #160612;border-radius:2.5px;box-sizing:border-box;"></div><div style="position:absolute;left:358.54px;top:408.8px;width:29.9px;height:24.2px;background:#37152e;border:1px solid #160612;border-radius:2.5px;box-sizing:border-box;"></div><div style="position:absolute;left:388.71px;top:408.8px;width:29.9px;height:24.2px;background:#37152e;border:1px solid #160612;border-radius:2.5px;box-sizing:border-box;"></div><div style="position:absolute;left:420.46px;top:408.8px;width:29.9px;height:24.2px;background:#37152e;border:1px solid #160612;border-radius:2.5px;box-sizing:border-box;"></div><div style="position:absolute;left:450.63px;top:408.8px;width:29.9px;height:24.2px;background:#37152e;border:1px solid #160612;border-radius:2.5px;box-sizing:border-box;"></div><div style="position:absolute;left:480.8px;top:408.8px;width:29.9px;height:24.2px;background:#cb14b6;border:1px solid #160612;border-radius:2.5px;box-sizing:border-box;"></div><div style="position:absolute;left:510.97px;top:408.8px;width:29.9px;height:24.2px;background:#37152e;border:1px solid #160612;border-radius:2.5px;box-sizing:border-box;"></div><div style="position:absolute;left:511.47px;top:409.3px;width:28.9px;height:23.2px;border:1px solid rgba(255,255,255,0.5);border-radius:4px;box-sizing:border-box;"></div><div style="position:absolute;left:542.72px;top:408.8px;width:29.9px;height:24.2px;background:#37152e;border:1px solid #160612;border-radius:2.5px;box-sizing:border-box;"></div><div style="position:absolute;left:572.89px;top:408.8px;width:29.9px;height:24.2px;background:#37152e;border:1px solid #160612;border-radius:2.5px;box-sizing:border-box;"></div><div style="position:absolute;left:603.06px;top:408.8px;width:29.9px;height:24.2px;background:#37152e;border:1px solid #160612;border-radius:2.5px;box-sizing:border-box;"></div><div style="position:absolute;left:633.23px;top:408.8px;width:29.9px;height:24.2px;background:#37152e;border:1px solid #160612;border-radius:2.5px;box-sizing:border-box;"></div><div style="position:absolute;left:664.98px;top:408.8px;width:29.9px;height:24.2px;background:#cb14b6;border:1px solid #160612;border-radius:2.5px;box-sizing:border-box;"></div><div style="position:absolute;left:695.15px;top:408.8px;width:29.9px;height:24.2px;background:#37152e;border:1px solid #160612;border-radius:2.5px;box-sizing:border-box;"></div><div style="position:absolute;left:725.32px;top:408.8px;width:29.9px;height:24.2px;background:#37152e;border:1px solid #160612;border-radius:2.5px;box-sizing:border-box;"></div><div style="position:absolute;left:755.49px;top:408.8px;width:29.9px;height:24.2px;background:#37152e;border:1px solid #160612;border-radius:2.5px;box-sizing:border-box;"></div><div style="position:absolute;left:787.24px;top:408.8px;width:29.9px;height:24.2px;background:#37152e;border:1px solid #160612;border-radius:2.5px;box-sizing:border-box;"></div><div style="position:absolute;left:817.41px;top:408.8px;width:29.9px;height:24.2px;background:#37152e;border:1px solid #160612;border-radius:2.5px;box-sizing:border-box;"></div><div style="position:absolute;left:847.58px;top:408.8px;width:29.9px;height:24.2px;background:#cb14b6;border:1px solid #160612;border-radius:2.5px;box-sizing:border-box;"></div><div style="position:absolute;left:877.75px;top:408.8px;width:29.9px;height:24.2px;background:#37152e;border:1px solid #160612;border-radius:2.5px;box-sizing:border-box;"></div><div style="position:absolute;left:878.25px;top:409.3px;width:28.9px;height:23.2px;border:1px solid #d8d8d8;border-radius:4px;box-sizing:border-box;"></div><div style="position:absolute;left:909.5px;top:408.8px;width:29.9px;height:24.2px;background:#37152e;border:1px solid #160612;border-radius:2.5px;box-sizing:border-box;"></div><div style="position:absolute;left:939.67px;top:408.8px;width:29.9px;height:24.2px;background:#37152e;border:1px solid #160612;border-radius:2.5px;box-sizing:border-box;"></div><div style="position:absolute;left:969.84px;top:408.8px;width:29.9px;height:24.2px;background:#37152e;border:1px solid #160612;border-radius:2.5px;box-sizing:border-box;"></div><div style="position:absolute;left:1000.01px;top:408.8px;width:29.9px;height:24.2px;background:#37152e;border:1px solid #160612;border-radius:2.5px;box-sizing:border-box;"></div><div style="position:absolute;left:1031.76px;top:408.8px;width:29.9px;height:24.2px;background:#37152e;border:1px solid #160612;border-radius:2.5px;box-sizing:border-box;"></div><div style="position:absolute;left:1061.93px;top:408.8px;width:29.9px;height:24.2px;background:#37152e;border:1px solid #160612;border-radius:2.5px;box-sizing:border-box;"></div><div style="position:absolute;left:1092.1px;top:408.8px;width:29.9px;height:24.2px;background:#37152e;border:1px solid #160612;border-radius:2.5px;box-sizing:border-box;"></div><div style="position:absolute;left:1122.27px;top:408.8px;width:29.9px;height:24.2px;background:#37152e;border:1px solid #160612;border-radius:2.5px;box-sizing:border-box;"></div><div style="position:absolute;left:1154.02px;top:408.8px;width:29.9px;height:24.2px;background:#37152e;border:1px solid #160612;border-radius:2.5px;box-sizing:border-box;"></div><div style="position:absolute;left:1184.19px;top:408.8px;width:29.9px;height:24.2px;background:#37152e;border:1px solid #160612;border-radius:2.5px;box-sizing:border-box;"></div><div style="position:absolute;left:1214.36px;top:408.8px;width:29.9px;height:24.2px;background:#37152e;border:1px solid #160612;border-radius:2.5px;box-sizing:border-box;"></div><div style="position:absolute;left:1244.53px;top:408.8px;width:29.9px;height:24.2px;background:#37152e;border:1px solid #160612;border-radius:2.5px;box-sizing:border-box;"></div><div style="position:absolute;left:298.2px;top:437.1px;width:29.9px;height:24.2px;background:#37152e;border:1px solid #160612;border-radius:2.5px;box-sizing:border-box;"></div><div style="position:absolute;left:328.37px;top:437.1px;width:29.9px;height:24.2px;background:#37152e;border:1px solid #160612;border-radius:2.5px;box-sizing:border-box;"></div><div style="position:absolute;left:358.54px;top:437.1px;width:29.9px;height:24.2px;background:#37152e;border:1px solid #160612;border-radius:2.5px;box-sizing:border-box;"></div><div style="position:absolute;left:388.71px;top:437.1px;width:121.99px;height:24.2px;background:#cb14b6;border:1px solid #160612;border-radius:2.5px;box-sizing:border-box;"></div><div style="position:absolute;left:510.97px;top:437.1px;width:29.9px;height:24.2px;background:#37152e;border:1px solid #160612;border-radius:2.5px;box-sizing:border-box;"></div><div style="position:absolute;left:511.47px;top:437.6px;width:28.9px;height:23.2px;border:1px solid rgba(255,255,255,0.5);border-radius:4px;box-sizing:border-box;"></div><div style="position:absolute;left:542.72px;top:437.1px;width:29.9px;height:24.2px;background:#37152e;border:1px solid #160612;border-radius:2.5px;box-sizing:border-box;"></div><div style="position:absolute;left:572.89px;top:437.1px;width:29.9px;height:24.2px;background:#37152e;border:1px solid #160612;border-radius:2.5px;box-sizing:border-box;"></div><div style="position:absolute;left:603.06px;top:437.1px;width:29.9px;height:24.2px;background:#37152e;border:1px solid #160612;border-radius:2.5px;box-sizing:border-box;"></div><div style="position:absolute;left:633.23px;top:437.1px;width:29.9px;height:24.2px;background:#37152e;border:1px solid #160612;border-radius:2.5px;box-sizing:border-box;"></div><div style="position:absolute;left:664.98px;top:437.1px;width:29.9px;height:24.2px;background:#37152e;border:1px solid #160612;border-radius:2.5px;box-sizing:border-box;"></div><div style="position:absolute;left:695.15px;top:437.1px;width:29.9px;height:24.2px;background:#cb14b6;border:1px solid #160612;border-radius:2.5px;box-sizing:border-box;"></div><div style="position:absolute;left:725.32px;top:437.1px;width:29.9px;height:24.2px;background:#37152e;border:1px solid #160612;border-radius:2.5px;box-sizing:border-box;"></div><div style="position:absolute;left:755.49px;top:437.1px;width:29.9px;height:24.2px;background:#cb14b6;border:1px solid #160612;border-radius:2.5px;box-sizing:border-box;"></div><div style="position:absolute;left:787.24px;top:437.1px;width:29.9px;height:24.2px;background:#37152e;border:1px solid #160612;border-radius:2.5px;box-sizing:border-box;"></div><div style="position:absolute;left:817.41px;top:437.1px;width:29.9px;height:24.2px;background:#37152e;border:1px solid #160612;border-radius:2.5px;box-sizing:border-box;"></div><div style="position:absolute;left:847.58px;top:437.1px;width:29.9px;height:24.2px;background:#37152e;border:1px solid #160612;border-radius:2.5px;box-sizing:border-box;"></div><div style="position:absolute;left:877.75px;top:437.1px;width:29.9px;height:24.2px;background:#cb14b6;border:1px solid #160612;border-radius:2.5px;box-sizing:border-box;"></div><div style="position:absolute;left:909.5px;top:437.1px;width:29.9px;height:24.2px;background:#37152e;border:1px solid #160612;border-radius:2.5px;box-sizing:border-box;"></div><div style="position:absolute;left:939.67px;top:437.1px;width:29.9px;height:24.2px;background:#37152e;border:1px solid #160612;border-radius:2.5px;box-sizing:border-box;"></div><div style="position:absolute;left:969.84px;top:437.1px;width:29.9px;height:24.2px;background:#37152e;border:1px solid #160612;border-radius:2.5px;box-sizing:border-box;"></div><div style="position:absolute;left:1000.01px;top:437.1px;width:29.9px;height:24.2px;background:#37152e;border:1px solid #160612;border-radius:2.5px;box-sizing:border-box;"></div><div style="position:absolute;left:1031.76px;top:437.1px;width:29.9px;height:24.2px;background:#37152e;border:1px solid #160612;border-radius:2.5px;box-sizing:border-box;"></div><div style="position:absolute;left:1061.93px;top:437.1px;width:29.9px;height:24.2px;background:#37152e;border:1px solid #160612;border-radius:2.5px;box-sizing:border-box;"></div><div style="position:absolute;left:1092.1px;top:437.1px;width:29.9px;height:24.2px;background:#cb14b6;border:1px solid #160612;border-radius:2.5px;box-sizing:border-box;"></div><div style="position:absolute;left:1122.27px;top:437.1px;width:29.9px;height:24.2px;background:#37152e;border:1px solid #160612;border-radius:2.5px;box-sizing:border-box;"></div><div style="position:absolute;left:1154.02px;top:437.1px;width:29.9px;height:24.2px;background:#37152e;border:1px solid #160612;border-radius:2.5px;box-sizing:border-box;"></div><div style="position:absolute;left:1184.19px;top:437.1px;width:29.9px;height:24.2px;background:#37152e;border:1px solid #160612;border-radius:2.5px;box-sizing:border-box;"></div><div style="position:absolute;left:1214.36px;top:437.1px;width:29.9px;height:24.2px;background:#37152e;border:1px solid #160612;border-radius:2.5px;box-sizing:border-box;"></div><div style="position:absolute;left:1244.53px;top:437.1px;width:29.9px;height:24.2px;background:#37152e;border:1px solid #160612;border-radius:2.5px;box-sizing:border-box;"></div><div style="position:absolute;left:298.2px;top:465.4px;width:29.9px;height:24.2px;background:#3a2914;border:1px solid #120c06;border-radius:2.5px;box-sizing:border-box;"></div><div style="position:absolute;left:328.37px;top:465.4px;width:29.9px;height:24.2px;background:#3a2914;border:1px solid #120c06;border-radius:2.5px;box-sizing:border-box;"></div><div style="position:absolute;left:358.54px;top:465.4px;width:29.9px;height:24.2px;background:#3a2914;border:1px solid #120c06;border-radius:2.5px;box-sizing:border-box;"></div><div style="position:absolute;left:388.71px;top:465.4px;width:29.9px;height:24.2px;background:#3a2914;border:1px solid #120c06;border-radius:2.5px;box-sizing:border-box;"></div><div style="position:absolute;left:420.46px;top:465.4px;width:29.9px;height:24.2px;background:#d8861b;border:1px solid #120c06;border-radius:2.5px;box-sizing:border-box;"></div><div style="position:absolute;left:450.63px;top:465.4px;width:29.9px;height:24.2px;background:#3a2914;border:1px solid #120c06;border-radius:2.5px;box-sizing:border-box;"></div><div style="position:absolute;left:480.8px;top:465.4px;width:29.9px;height:24.2px;background:#3a2914;border:1px solid #120c06;border-radius:2.5px;box-sizing:border-box;"></div><div style="position:absolute;left:510.97px;top:465.4px;width:29.9px;height:24.2px;background:#3a2914;border:1px solid #120c06;border-radius:2.5px;box-sizing:border-box;"></div><div style="position:absolute;left:511.47px;top:465.9px;width:28.9px;height:23.2px;border:1px solid rgba(255,255,255,0.5);border-radius:4px;box-sizing:border-box;"></div><div style="position:absolute;left:542.72px;top:465.4px;width:29.9px;height:24.2px;background:#3a2914;border:1px solid #120c06;border-radius:2.5px;box-sizing:border-box;"></div><div style="position:absolute;left:572.89px;top:465.4px;width:29.9px;height:24.2px;background:#3a2914;border:1px solid #120c06;border-radius:2.5px;box-sizing:border-box;"></div><div style="position:absolute;left:603.06px;top:465.4px;width:29.9px;height:24.2px;background:#3a2914;border:1px solid #120c06;border-radius:2.5px;box-sizing:border-box;"></div><div style="position:absolute;left:633.23px;top:465.4px;width:29.9px;height:24.2px;background:#3a2914;border:1px solid #120c06;border-radius:2.5px;box-sizing:border-box;"></div><div style="position:absolute;left:664.98px;top:465.4px;width:29.9px;height:24.2px;background:#d8861b;border:1px solid #120c06;border-radius:2.5px;box-sizing:border-box;"></div><div style="position:absolute;left:695.15px;top:465.4px;width:29.9px;height:24.2px;background:#3a2914;border:1px solid #120c06;border-radius:2.5px;box-sizing:border-box;"></div><div style="position:absolute;left:725.32px;top:465.4px;width:29.9px;height:24.2px;background:#3a2914;border:1px solid #120c06;border-radius:2.5px;box-sizing:border-box;"></div><div style="position:absolute;left:755.49px;top:465.4px;width:29.9px;height:24.2px;background:#3a2914;border:1px solid #120c06;border-radius:2.5px;box-sizing:border-box;"></div><div style="position:absolute;left:787.24px;top:465.4px;width:29.9px;height:24.2px;background:#3a2914;border:1px solid #120c06;border-radius:2.5px;box-sizing:border-box;"></div><div style="position:absolute;left:817.41px;top:465.4px;width:29.9px;height:24.2px;background:#3a2914;border:1px solid #120c06;border-radius:2.5px;box-sizing:border-box;"></div><div style="position:absolute;left:847.58px;top:465.4px;width:29.9px;height:24.2px;background:#3a2914;border:1px solid #120c06;border-radius:2.5px;box-sizing:border-box;"></div><div style="position:absolute;left:877.75px;top:465.4px;width:29.9px;height:24.2px;background:#3a2914;border:1px solid #120c06;border-radius:2.5px;box-sizing:border-box;"></div><div style="position:absolute;left:909.5px;top:465.4px;width:29.9px;height:24.2px;background:#d8861b;border:1px solid #120c06;border-radius:2.5px;box-sizing:border-box;"></div><div style="position:absolute;left:939.67px;top:465.4px;width:29.9px;height:24.2px;background:#3a2914;border:1px solid #120c06;border-radius:2.5px;box-sizing:border-box;"></div><div style="position:absolute;left:969.84px;top:465.4px;width:29.9px;height:24.2px;background:#3a2914;border:1px solid #120c06;border-radius:2.5px;box-sizing:border-box;"></div><div style="position:absolute;left:1000.01px;top:465.4px;width:29.9px;height:24.2px;background:#3a2914;border:1px solid #120c06;border-radius:2.5px;box-sizing:border-box;"></div><div style="position:absolute;left:1031.76px;top:465.4px;width:29.9px;height:24.2px;background:#3a2914;border:1px solid #120c06;border-radius:2.5px;box-sizing:border-box;"></div><div style="position:absolute;left:1061.93px;top:465.4px;width:29.9px;height:24.2px;background:#3a2914;border:1px solid #120c06;border-radius:2.5px;box-sizing:border-box;"></div><div style="position:absolute;left:1092.1px;top:465.4px;width:29.9px;height:24.2px;background:#3a2914;border:1px solid #120c06;border-radius:2.5px;box-sizing:border-box;"></div><div style="position:absolute;left:1122.27px;top:465.4px;width:29.9px;height:24.2px;background:#3a2914;border:1px solid #120c06;border-radius:2.5px;box-sizing:border-box;"></div><div style="position:absolute;left:1154.02px;top:465.4px;width:29.9px;height:24.2px;background:#d8861b;border:1px solid #120c06;border-radius:2.5px;box-sizing:border-box;"></div><div style="position:absolute;left:1184.19px;top:465.4px;width:29.9px;height:24.2px;background:#3a2914;border:1px solid #120c06;border-radius:2.5px;box-sizing:border-box;"></div><div style="position:absolute;left:1214.36px;top:465.4px;width:29.9px;height:24.2px;background:#3a2914;border:1px solid #120c06;border-radius:2.5px;box-sizing:border-box;"></div><div style="position:absolute;left:1244.53px;top:465.4px;width:29.9px;height:24.2px;background:#3a2914;border:1px solid #120c06;border-radius:2.5px;box-sizing:border-box;"></div><div style="position:absolute;left:298.2px;top:493.7px;width:29.9px;height:24.2px;background:#3a2914;border:1px solid #120c06;border-radius:2.5px;box-sizing:border-box;"></div><div style="position:absolute;left:328.37px;top:493.7px;width:29.9px;height:24.2px;background:#3a2914;border:1px solid #120c06;border-radius:2.5px;box-sizing:border-box;"></div><div style="position:absolute;left:358.54px;top:493.7px;width:29.9px;height:24.2px;background:#d8861b;border:1px solid #120c06;border-radius:2.5px;box-sizing:border-box;"></div><div style="position:absolute;left:388.71px;top:493.7px;width:29.9px;height:24.2px;background:#d8861b;border:1px solid #120c06;border-radius:2.5px;box-sizing:border-box;"></div><div style="position:absolute;left:420.46px;top:493.7px;width:29.9px;height:24.2px;background:#3a2914;border:1px solid #120c06;border-radius:2.5px;box-sizing:border-box;"></div><div style="position:absolute;left:450.63px;top:493.7px;width:29.9px;height:24.2px;background:#3a2914;border:1px solid #120c06;border-radius:2.5px;box-sizing:border-box;"></div><div style="position:absolute;left:480.8px;top:493.7px;width:29.9px;height:24.2px;background:#3a2914;border:1px solid #120c06;border-radius:2.5px;box-sizing:border-box;"></div><div style="position:absolute;left:510.97px;top:493.7px;width:29.9px;height:24.2px;background:#3a2914;border:1px solid #120c06;border-radius:2.5px;box-sizing:border-box;"></div><div style="position:absolute;left:511.47px;top:494.2px;width:28.9px;height:23.2px;border:1px solid rgba(255,255,255,0.5);border-radius:4px;box-sizing:border-box;"></div><div style="position:absolute;left:542.72px;top:493.7px;width:29.9px;height:24.2px;background:#3a2914;border:1px solid #120c06;border-radius:2.5px;box-sizing:border-box;"></div><div style="position:absolute;left:572.89px;top:493.7px;width:29.9px;height:24.2px;background:#3a2914;border:1px solid #120c06;border-radius:2.5px;box-sizing:border-box;"></div><div style="position:absolute;left:603.06px;top:493.7px;width:29.9px;height:24.2px;background:#d8861b;border:1px solid #120c06;border-radius:2.5px;box-sizing:border-box;"></div><div style="position:absolute;left:633.23px;top:493.7px;width:29.9px;height:24.2px;background:#d8861b;border:1px solid #120c06;border-radius:2.5px;box-sizing:border-box;"></div><div style="position:absolute;left:664.98px;top:493.7px;width:29.9px;height:24.2px;background:#3a2914;border:1px solid #120c06;border-radius:2.5px;box-sizing:border-box;"></div><div style="position:absolute;left:695.15px;top:493.7px;width:29.9px;height:24.2px;background:#3a2914;border:1px solid #120c06;border-radius:2.5px;box-sizing:border-box;"></div><div style="position:absolute;left:725.32px;top:493.7px;width:29.9px;height:24.2px;background:#3a2914;border:1px solid #120c06;border-radius:2.5px;box-sizing:border-box;"></div><div style="position:absolute;left:755.49px;top:493.7px;width:29.9px;height:24.2px;background:#3a2914;border:1px solid #120c06;border-radius:2.5px;box-sizing:border-box;"></div><div style="position:absolute;left:787.24px;top:493.7px;width:29.9px;height:24.2px;background:#3a2914;border:1px solid #120c06;border-radius:2.5px;box-sizing:border-box;"></div><div style="position:absolute;left:817.41px;top:493.7px;width:29.9px;height:24.2px;background:#3a2914;border:1px solid #120c06;border-radius:2.5px;box-sizing:border-box;"></div><div style="position:absolute;left:847.58px;top:493.7px;width:29.9px;height:24.2px;background:#3a2914;border:1px solid #120c06;border-radius:2.5px;box-sizing:border-box;"></div><div style="position:absolute;left:877.75px;top:493.7px;width:29.9px;height:24.2px;background:#3a2914;border:1px solid #120c06;border-radius:2.5px;box-sizing:border-box;"></div><div style="position:absolute;left:909.5px;top:493.7px;width:29.9px;height:24.2px;background:#3a2914;border:1px solid #120c06;border-radius:2.5px;box-sizing:border-box;"></div><div style="position:absolute;left:939.67px;top:493.7px;width:29.9px;height:24.2px;background:#3a2914;border:1px solid #120c06;border-radius:2.5px;box-sizing:border-box;"></div><div style="position:absolute;left:969.84px;top:493.7px;width:29.9px;height:24.2px;background:#3a2914;border:1px solid #120c06;border-radius:2.5px;box-sizing:border-box;"></div><div style="position:absolute;left:1000.01px;top:493.7px;width:29.9px;height:24.2px;background:#3a2914;border:1px solid #120c06;border-radius:2.5px;box-sizing:border-box;"></div><div style="position:absolute;left:1031.76px;top:493.7px;width:29.9px;height:24.2px;background:#3a2914;border:1px solid #120c06;border-radius:2.5px;box-sizing:border-box;"></div><div style="position:absolute;left:1061.93px;top:493.7px;width:29.9px;height:24.2px;background:#3a2914;border:1px solid #120c06;border-radius:2.5px;box-sizing:border-box;"></div><div style="position:absolute;left:1092.1px;top:493.7px;width:29.9px;height:24.2px;background:#3a2914;border:1px solid #120c06;border-radius:2.5px;box-sizing:border-box;"></div><div style="position:absolute;left:1122.27px;top:493.7px;width:29.9px;height:24.2px;background:#3a2914;border:1px solid #120c06;border-radius:2.5px;box-sizing:border-box;"></div><div style="position:absolute;left:1154.02px;top:493.7px;width:29.9px;height:24.2px;background:#3a2914;border:1px solid #120c06;border-radius:2.5px;box-sizing:border-box;"></div><div style="position:absolute;left:1184.19px;top:493.7px;width:29.9px;height:24.2px;background:#3a2914;border:1px solid #120c06;border-radius:2.5px;box-sizing:border-box;"></div><div style="position:absolute;left:1214.36px;top:493.7px;width:29.9px;height:24.2px;background:#3a2914;border:1px solid #120c06;border-radius:2.5px;box-sizing:border-box;"></div><div style="position:absolute;left:1244.53px;top:493.7px;width:29.9px;height:24.2px;background:#3a2914;border:1px solid #120c06;border-radius:2.5px;box-sizing:border-box;"></div><div style="position:absolute;left:298.2px;top:522.0px;width:29.9px;height:24.2px;background:#2a1d3a;border:1px solid #0a0a16;border-radius:2.5px;box-sizing:border-box;"></div><div style="position:absolute;left:328.37px;top:522.0px;width:29.9px;height:24.2px;background:#2a1d3a;border:1px solid #0a0a16;border-radius:2.5px;box-sizing:border-box;"></div><div style="position:absolute;left:358.54px;top:522.0px;width:29.9px;height:24.2px;background:#2a1d3a;border:1px solid #0a0a16;border-radius:2.5px;box-sizing:border-box;"></div><div style="position:absolute;left:388.71px;top:522.0px;width:29.9px;height:24.2px;background:#2a1d3a;border:1px solid #0a0a16;border-radius:2.5px;box-sizing:border-box;"></div><div style="position:absolute;left:420.46px;top:522.0px;width:29.9px;height:24.2px;background:#2a1d3a;border:1px solid #0a0a16;border-radius:2.5px;box-sizing:border-box;"></div><div style="position:absolute;left:450.63px;top:522.0px;width:29.9px;height:24.2px;background:#2a1d3a;border:1px solid #0a0a16;border-radius:2.5px;box-sizing:border-box;"></div><div style="position:absolute;left:480.8px;top:522.0px;width:29.9px;height:24.2px;background:#2a1d3a;border:1px solid #0a0a16;border-radius:2.5px;box-sizing:border-box;"></div><div style="position:absolute;left:510.97px;top:522.0px;width:29.9px;height:24.2px;background:#2a1d3a;border:1px solid #0a0a16;border-radius:2.5px;box-sizing:border-box;"></div><div style="position:absolute;left:511.47px;top:522.5px;width:28.9px;height:23.2px;border:1px solid rgba(255,255,255,0.5);border-radius:4px;box-sizing:border-box;"></div><div style="position:absolute;left:542.72px;top:522.0px;width:29.9px;height:24.2px;background:#7c3ed8;border:1px solid #0a0a16;border-radius:2.5px;box-sizing:border-box;"></div><div style="position:absolute;left:572.89px;top:522.0px;width:29.9px;height:24.2px;background:#7c3ed8;border:1px solid #0a0a16;border-radius:2.5px;box-sizing:border-box;"></div><div style="position:absolute;left:603.06px;top:522.0px;width:29.9px;height:24.2px;background:#7c3ed8;border:1px solid #0a0a16;border-radius:2.5px;box-sizing:border-box;"></div><div style="position:absolute;left:633.23px;top:522.0px;width:29.9px;height:24.2px;background:#7c3ed8;border:1px solid #0a0a16;border-radius:2.5px;box-sizing:border-box;"></div><div style="position:absolute;left:664.98px;top:522.0px;width:29.9px;height:24.2px;background:#2a1d3a;border:1px solid #0a0a16;border-radius:2.5px;box-sizing:border-box;"></div><div style="position:absolute;left:695.15px;top:522.0px;width:29.9px;height:24.2px;background:#2a1d3a;border:1px solid #0a0a16;border-radius:2.5px;box-sizing:border-box;"></div><div style="position:absolute;left:725.32px;top:522.0px;width:29.9px;height:24.2px;background:#2a1d3a;border:1px solid #0a0a16;border-radius:2.5px;box-sizing:border-box;"></div><div style="position:absolute;left:755.49px;top:522.0px;width:29.9px;height:24.2px;background:#2a1d3a;border:1px solid #0a0a16;border-radius:2.5px;box-sizing:border-box;"></div><div style="position:absolute;left:787.24px;top:522.0px;width:29.9px;height:24.2px;background:#2a1d3a;border:1px solid #0a0a16;border-radius:2.5px;box-sizing:border-box;"></div><div style="position:absolute;left:817.41px;top:522.0px;width:29.9px;height:24.2px;background:#2a1d3a;border:1px solid #0a0a16;border-radius:2.5px;box-sizing:border-box;"></div><div style="position:absolute;left:847.58px;top:522.0px;width:29.9px;height:24.2px;background:#2a1d3a;border:1px solid #0a0a16;border-radius:2.5px;box-sizing:border-box;"></div><div style="position:absolute;left:877.75px;top:522.0px;width:29.9px;height:24.2px;background:#2a1d3a;border:1px solid #0a0a16;border-radius:2.5px;box-sizing:border-box;"></div><div style="position:absolute;left:909.5px;top:522.0px;width:29.9px;height:24.2px;background:#2a1d3a;border:1px solid #0a0a16;border-radius:2.5px;box-sizing:border-box;"></div><div style="position:absolute;left:939.67px;top:522.0px;width:29.9px;height:24.2px;background:#2a1d3a;border:1px solid #0a0a16;border-radius:2.5px;box-sizing:border-box;"></div><div style="position:absolute;left:969.84px;top:522.0px;width:29.9px;height:24.2px;background:#2a1d3a;border:1px solid #0a0a16;border-radius:2.5px;box-sizing:border-box;"></div><div style="position:absolute;left:1000.01px;top:522.0px;width:29.9px;height:24.2px;background:#2a1d3a;border:1px solid #0a0a16;border-radius:2.5px;box-sizing:border-box;"></div><div style="position:absolute;left:1031.76px;top:522.0px;width:29.9px;height:24.2px;background:#2a1d3a;border:1px solid #0a0a16;border-radius:2.5px;box-sizing:border-box;"></div><div style="position:absolute;left:1061.93px;top:522.0px;width:29.9px;height:24.2px;background:#2a1d3a;border:1px solid #0a0a16;border-radius:2.5px;box-sizing:border-box;"></div><div style="position:absolute;left:1092.1px;top:522.0px;width:29.9px;height:24.2px;background:#2a1d3a;border:1px solid #0a0a16;border-radius:2.5px;box-sizing:border-box;"></div><div style="position:absolute;left:1122.27px;top:522.0px;width:29.9px;height:24.2px;background:#2a1d3a;border:1px solid #0a0a16;border-radius:2.5px;box-sizing:border-box;"></div><div style="position:absolute;left:1154.02px;top:522.0px;width:29.9px;height:24.2px;background:#2a1d3a;border:1px solid #0a0a16;border-radius:2.5px;box-sizing:border-box;"></div><div style="position:absolute;left:1184.19px;top:522.0px;width:29.9px;height:24.2px;background:#2a1d3a;border:1px solid #0a0a16;border-radius:2.5px;box-sizing:border-box;"></div><div style="position:absolute;left:1214.36px;top:522.0px;width:29.9px;height:24.2px;background:#2a1d3a;border:1px solid #0a0a16;border-radius:2.5px;box-sizing:border-box;"></div><div style="position:absolute;left:1244.53px;top:522.0px;width:29.9px;height:24.2px;background:#2a1d3a;border:1px solid #0a0a16;border-radius:2.5px;box-sizing:border-box;"></div><div style="position:absolute;left:298.2px;top:550.3px;width:29.9px;height:24.2px;background:#14c9c9;border:1px solid #061212;border-radius:2.5px;box-sizing:border-box;"></div><div style="position:absolute;left:328.37px;top:550.3px;width:29.9px;height:24.2px;background:#163a3a;border:1px solid #061212;border-radius:2.5px;box-sizing:border-box;"></div><div style="position:absolute;left:358.54px;top:550.3px;width:29.9px;height:24.2px;background:#14c9c9;border:1px solid #061212;border-radius:2.5px;box-sizing:border-box;"></div><div style="position:absolute;left:388.71px;top:550.3px;width:29.9px;height:24.2px;background:#14c9c9;border:1px solid #061212;border-radius:2.5px;box-sizing:border-box;"></div><div style="position:absolute;left:420.46px;top:550.3px;width:29.9px;height:24.2px;background:#163a3a;border:1px solid #061212;border-radius:2.5px;box-sizing:border-box;"></div><div style="position:absolute;left:450.63px;top:550.3px;width:29.9px;height:24.2px;background:#163a3a;border:1px solid #061212;border-radius:2.5px;box-sizing:border-box;"></div><div style="position:absolute;left:480.8px;top:550.3px;width:29.9px;height:24.2px;background:#14c9c9;border:1px solid #061212;border-radius:2.5px;box-sizing:border-box;"></div><div style="position:absolute;left:510.97px;top:550.3px;width:29.9px;height:24.2px;background:#14c9c9;border:1px solid #061212;border-radius:2.5px;box-sizing:border-box;"></div><div style="position:absolute;left:511.47px;top:550.8px;width:28.9px;height:23.2px;border:2px solid #f0ffff;border-radius:4px;box-sizing:border-box;"></div><div style="position:absolute;left:542.72px;top:550.3px;width:29.9px;height:24.2px;background:#163a3a;border:1px solid #061212;border-radius:2.5px;box-sizing:border-box;"></div><div style="position:absolute;left:572.89px;top:550.3px;width:29.9px;height:24.2px;background:#163a3a;border:1px solid #061212;border-radius:2.5px;box-sizing:border-box;"></div><div style="position:absolute;left:603.06px;top:550.3px;width:29.9px;height:24.2px;background:#14c9c9;border:1px solid #061212;border-radius:2.5px;box-sizing:border-box;"></div><div style="position:absolute;left:633.23px;top:550.3px;width:29.9px;height:24.2px;background:#14c9c9;border:1px solid #061212;border-radius:2.5px;box-sizing:border-box;"></div><div style="position:absolute;left:664.98px;top:550.3px;width:29.9px;height:24.2px;background:#14c9c9;border:1px solid #061212;border-radius:2.5px;box-sizing:border-box;"></div><div style="position:absolute;left:695.15px;top:550.3px;width:29.9px;height:24.2px;background:#163a3a;border:1px solid #061212;border-radius:2.5px;box-sizing:border-box;"></div><div style="position:absolute;left:725.32px;top:550.3px;width:29.9px;height:24.2px;background:#14c9c9;border:1px solid #061212;border-radius:2.5px;box-sizing:border-box;"></div><div style="position:absolute;left:755.49px;top:550.3px;width:29.9px;height:24.2px;background:#14c9c9;border:1px solid #061212;border-radius:2.5px;box-sizing:border-box;"></div><div style="position:absolute;left:787.24px;top:550.3px;width:29.9px;height:24.2px;background:#14c9c9;border:1px solid #061212;border-radius:2.5px;box-sizing:border-box;"></div><div style="position:absolute;left:817.41px;top:550.3px;width:29.9px;height:24.2px;background:#14c9c9;border:1px solid #061212;border-radius:2.5px;box-sizing:border-box;"></div><div style="position:absolute;left:847.58px;top:550.3px;width:29.9px;height:24.2px;background:#14c9c9;border:1px solid #061212;border-radius:2.5px;box-sizing:border-box;"></div><div style="position:absolute;left:877.75px;top:550.3px;width:29.9px;height:24.2px;background:#163a3a;border:1px solid #061212;border-radius:2.5px;box-sizing:border-box;"></div><div style="position:absolute;left:909.5px;top:550.3px;width:29.9px;height:24.2px;background:#163a3a;border:1px solid #061212;border-radius:2.5px;box-sizing:border-box;"></div><div style="position:absolute;left:939.67px;top:550.3px;width:29.9px;height:24.2px;background:#163a3a;border:1px solid #061212;border-radius:2.5px;box-sizing:border-box;"></div><div style="position:absolute;left:969.84px;top:550.3px;width:29.9px;height:24.2px;background:#14c9c9;border:1px solid #061212;border-radius:2.5px;box-sizing:border-box;"></div><div style="position:absolute;left:1000.01px;top:550.3px;width:29.9px;height:24.2px;background:#14c9c9;border:1px solid #061212;border-radius:2.5px;box-sizing:border-box;"></div><div style="position:absolute;left:1031.76px;top:550.3px;width:29.9px;height:24.2px;background:#14c9c9;border:1px solid #061212;border-radius:2.5px;box-sizing:border-box;"></div><div style="position:absolute;left:1061.93px;top:550.3px;width:29.9px;height:24.2px;background:#163a3a;border:1px solid #061212;border-radius:2.5px;box-sizing:border-box;"></div><div style="position:absolute;left:1092.1px;top:550.3px;width:29.9px;height:24.2px;background:#14c9c9;border:1px solid #061212;border-radius:2.5px;box-sizing:border-box;"></div><div style="position:absolute;left:1122.27px;top:550.3px;width:29.9px;height:24.2px;background:#14c9c9;border:1px solid #061212;border-radius:2.5px;box-sizing:border-box;"></div><div style="position:absolute;left:1154.02px;top:550.3px;width:29.9px;height:24.2px;background:#14c9c9;border:1px solid #061212;border-radius:2.5px;box-sizing:border-box;"></div><div style="position:absolute;left:1184.19px;top:550.3px;width:29.9px;height:24.2px;background:#14c9c9;border:1px solid #061212;border-radius:2.5px;box-sizing:border-box;"></div><div style="position:absolute;left:1214.36px;top:550.3px;width:29.9px;height:24.2px;background:#14c9c9;border:1px solid #061212;border-radius:2.5px;box-sizing:border-box;"></div><div style="position:absolute;left:1244.53px;top:550.3px;width:29.9px;height:24.2px;background:#14c9c9;border:1px solid #061212;border-radius:2.5px;box-sizing:border-box;"></div><div style="position:absolute;left:298.2px;top:578.6px;width:29.9px;height:24.2px;background:#163a3a;border:1px solid #061212;border-radius:2.5px;box-sizing:border-box;"></div><div style="position:absolute;left:328.37px;top:578.6px;width:29.9px;height:24.2px;background:#163a3a;border:1px solid #061212;border-radius:2.5px;box-sizing:border-box;"></div><div style="position:absolute;left:358.54px;top:578.6px;width:29.9px;height:24.2px;background:#163a3a;border:1px solid #061212;border-radius:2.5px;box-sizing:border-box;"></div><div style="position:absolute;left:388.71px;top:578.6px;width:29.9px;height:24.2px;background:#163a3a;border:1px solid #061212;border-radius:2.5px;box-sizing:border-box;"></div><div style="position:absolute;left:420.46px;top:578.6px;width:29.9px;height:24.2px;background:#163a3a;border:1px solid #061212;border-radius:2.5px;box-sizing:border-box;"></div><div style="position:absolute;left:450.63px;top:578.6px;width:29.9px;height:24.2px;background:#14c9c9;border:1px solid #061212;border-radius:2.5px;box-sizing:border-box;"></div><div style="position:absolute;left:480.8px;top:578.6px;width:29.9px;height:24.2px;background:#163a3a;border:1px solid #061212;border-radius:2.5px;box-sizing:border-box;"></div><div style="position:absolute;left:510.97px;top:578.6px;width:29.9px;height:24.2px;background:#14c9c9;border:1px solid #061212;border-radius:2.5px;box-sizing:border-box;"></div><div style="position:absolute;left:511.47px;top:579.1px;width:28.9px;height:23.2px;border:2px solid #f0ffff;border-radius:4px;box-sizing:border-box;"></div><div style="position:absolute;left:542.72px;top:578.6px;width:29.9px;height:24.2px;background:#163a3a;border:1px solid #061212;border-radius:2.5px;box-sizing:border-box;"></div><div style="position:absolute;left:572.89px;top:578.6px;width:29.9px;height:24.2px;background:#163a3a;border:1px solid #061212;border-radius:2.5px;box-sizing:border-box;"></div><div style="position:absolute;left:603.06px;top:578.6px;width:29.9px;height:24.2px;background:#163a3a;border:1px solid #061212;border-radius:2.5px;box-sizing:border-box;"></div><div style="position:absolute;left:633.23px;top:578.6px;width:29.9px;height:24.2px;background:#163a3a;border:1px solid #061212;border-radius:2.5px;box-sizing:border-box;"></div><div style="position:absolute;left:664.98px;top:578.6px;width:29.9px;height:24.2px;background:#163a3a;border:1px solid #061212;border-radius:2.5px;box-sizing:border-box;"></div><div style="position:absolute;left:695.15px;top:578.6px;width:29.9px;height:24.2px;background:#163a3a;border:1px solid #061212;border-radius:2.5px;box-sizing:border-box;"></div><div style="position:absolute;left:725.32px;top:578.6px;width:29.9px;height:24.2px;background:#163a3a;border:1px solid #061212;border-radius:2.5px;box-sizing:border-box;"></div><div style="position:absolute;left:755.49px;top:578.6px;width:29.9px;height:24.2px;background:#163a3a;border:1px solid #061212;border-radius:2.5px;box-sizing:border-box;"></div><div style="position:absolute;left:787.24px;top:578.6px;width:29.9px;height:24.2px;background:#163a3a;border:1px solid #061212;border-radius:2.5px;box-sizing:border-box;"></div><div style="position:absolute;left:817.41px;top:578.6px;width:29.9px;height:24.2px;background:#163a3a;border:1px solid #061212;border-radius:2.5px;box-sizing:border-box;"></div><div style="position:absolute;left:847.58px;top:578.6px;width:29.9px;height:24.2px;background:#163a3a;border:1px solid #061212;border-radius:2.5px;box-sizing:border-box;"></div><div style="position:absolute;left:877.75px;top:578.6px;width:29.9px;height:24.2px;background:#163a3a;border:1px solid #061212;border-radius:2.5px;box-sizing:border-box;"></div><div style="position:absolute;left:909.5px;top:578.6px;width:29.9px;height:24.2px;background:#163a3a;border:1px solid #061212;border-radius:2.5px;box-sizing:border-box;"></div><div style="position:absolute;left:939.67px;top:578.6px;width:29.9px;height:24.2px;background:#163a3a;border:1px solid #061212;border-radius:2.5px;box-sizing:border-box;"></div><div style="position:absolute;left:969.84px;top:578.6px;width:29.9px;height:24.2px;background:#163a3a;border:1px solid #061212;border-radius:2.5px;box-sizing:border-box;"></div><div style="position:absolute;left:1000.01px;top:578.6px;width:29.9px;height:24.2px;background:#163a3a;border:1px solid #061212;border-radius:2.5px;box-sizing:border-box;"></div><div style="position:absolute;left:1031.76px;top:578.6px;width:29.9px;height:24.2px;background:#163a3a;border:1px solid #061212;border-radius:2.5px;box-sizing:border-box;"></div><div style="position:absolute;left:1061.93px;top:578.6px;width:29.9px;height:24.2px;background:#163a3a;border:1px solid #061212;border-radius:2.5px;box-sizing:border-box;"></div><div style="position:absolute;left:1092.1px;top:578.6px;width:29.9px;height:24.2px;background:#163a3a;border:1px solid #061212;border-radius:2.5px;box-sizing:border-box;"></div><div style="position:absolute;left:1122.27px;top:578.6px;width:29.9px;height:24.2px;background:#163a3a;border:1px solid #061212;border-radius:2.5px;box-sizing:border-box;"></div><div style="position:absolute;left:1154.02px;top:578.6px;width:29.9px;height:24.2px;background:#163a3a;border:1px solid #061212;border-radius:2.5px;box-sizing:border-box;"></div><div style="position:absolute;left:1184.19px;top:578.6px;width:29.9px;height:24.2px;background:#163a3a;border:1px solid #061212;border-radius:2.5px;box-sizing:border-box;"></div><div style="position:absolute;left:1214.36px;top:578.6px;width:29.9px;height:24.2px;background:#163a3a;border:1px solid #061212;border-radius:2.5px;box-sizing:border-box;"></div><div style="position:absolute;left:1244.53px;top:578.6px;width:29.9px;height:24.2px;background:#163a3a;border:1px solid #061212;border-radius:2.5px;box-sizing:border-box;"></div><div style="position:absolute;left:298.2px;top:606.9px;width:29.9px;height:24.2px;background:#3a2914;border:1px solid #120c06;border-radius:2.5px;box-sizing:border-box;"></div><div style="position:absolute;left:328.37px;top:606.9px;width:29.9px;height:24.2px;background:#3a2914;border:1px solid #120c06;border-radius:2.5px;box-sizing:border-box;"></div><div style="position:absolute;left:358.54px;top:606.9px;width:29.9px;height:24.2px;background:#d8861b;border:1px solid #120c06;border-radius:2.5px;box-sizing:border-box;"></div><div style="position:absolute;left:388.71px;top:606.9px;width:29.9px;height:24.2px;background:#3a2914;border:1px solid #120c06;border-radius:2.5px;box-sizing:border-box;"></div><div style="position:absolute;left:420.46px;top:606.9px;width:29.9px;height:24.2px;background:#3a2914;border:1px solid #120c06;border-radius:2.5px;box-sizing:border-box;"></div><div style="position:absolute;left:450.63px;top:606.9px;width:29.9px;height:24.2px;background:#3a2914;border:1px solid #120c06;border-radius:2.5px;box-sizing:border-box;"></div><div style="position:absolute;left:480.8px;top:606.9px;width:29.9px;height:24.2px;background:#3a2914;border:1px solid #120c06;border-radius:2.5px;box-sizing:border-box;"></div><div style="position:absolute;left:510.97px;top:606.9px;width:29.9px;height:24.2px;background:#3a2914;border:1px solid #120c06;border-radius:2.5px;box-sizing:border-box;"></div><div style="position:absolute;left:511.47px;top:607.4px;width:28.9px;height:23.2px;border:1px solid rgba(255,255,255,0.5);border-radius:4px;box-sizing:border-box;"></div><div style="position:absolute;left:542.72px;top:606.9px;width:29.9px;height:24.2px;background:#3a2914;border:1px solid #120c06;border-radius:2.5px;box-sizing:border-box;"></div><div style="position:absolute;left:572.89px;top:606.9px;width:29.9px;height:24.2px;background:#3a2914;border:1px solid #120c06;border-radius:2.5px;box-sizing:border-box;"></div><div style="position:absolute;left:603.06px;top:606.9px;width:29.9px;height:24.2px;background:#d8861b;border:1px solid #120c06;border-radius:2.5px;box-sizing:border-box;"></div><div style="position:absolute;left:633.23px;top:606.9px;width:29.9px;height:24.2px;background:#3a2914;border:1px solid #120c06;border-radius:2.5px;box-sizing:border-box;"></div><div style="position:absolute;left:664.98px;top:606.9px;width:29.9px;height:24.2px;background:#3a2914;border:1px solid #120c06;border-radius:2.5px;box-sizing:border-box;"></div><div style="position:absolute;left:695.15px;top:606.9px;width:29.9px;height:24.2px;background:#3a2914;border:1px solid #120c06;border-radius:2.5px;box-sizing:border-box;"></div><div style="position:absolute;left:725.32px;top:606.9px;width:29.9px;height:24.2px;background:#3a2914;border:1px solid #120c06;border-radius:2.5px;box-sizing:border-box;"></div><div style="position:absolute;left:755.49px;top:606.9px;width:29.9px;height:24.2px;background:#3a2914;border:1px solid #120c06;border-radius:2.5px;box-sizing:border-box;"></div><div style="position:absolute;left:787.24px;top:606.9px;width:29.9px;height:24.2px;background:#3a2914;border:1px solid #120c06;border-radius:2.5px;box-sizing:border-box;"></div><div style="position:absolute;left:817.41px;top:606.9px;width:29.9px;height:24.2px;background:#3a2914;border:1px solid #120c06;border-radius:2.5px;box-sizing:border-box;"></div><div style="position:absolute;left:847.58px;top:606.9px;width:29.9px;height:24.2px;background:#d8861b;border:1px solid #120c06;border-radius:2.5px;box-sizing:border-box;"></div><div style="position:absolute;left:877.75px;top:606.9px;width:29.9px;height:24.2px;background:#3a2914;border:1px solid #120c06;border-radius:2.5px;box-sizing:border-box;"></div><div style="position:absolute;left:909.5px;top:606.9px;width:29.9px;height:24.2px;background:#3a2914;border:1px solid #120c06;border-radius:2.5px;box-sizing:border-box;"></div><div style="position:absolute;left:939.67px;top:606.9px;width:29.9px;height:24.2px;background:#3a2914;border:1px solid #120c06;border-radius:2.5px;box-sizing:border-box;"></div><div style="position:absolute;left:969.84px;top:606.9px;width:29.9px;height:24.2px;background:#d8861b;border:1px solid #120c06;border-radius:2.5px;box-sizing:border-box;"></div><div style="position:absolute;left:1000.01px;top:606.9px;width:29.9px;height:24.2px;background:#3a2914;border:1px solid #120c06;border-radius:2.5px;box-sizing:border-box;"></div><div style="position:absolute;left:1031.76px;top:606.9px;width:29.9px;height:24.2px;background:#3a2914;border:1px solid #120c06;border-radius:2.5px;box-sizing:border-box;"></div><div style="position:absolute;left:1061.93px;top:606.9px;width:29.9px;height:24.2px;background:#3a2914;border:1px solid #120c06;border-radius:2.5px;box-sizing:border-box;"></div><div style="position:absolute;left:1092.1px;top:606.9px;width:29.9px;height:24.2px;background:#3a2914;border:1px solid #120c06;border-radius:2.5px;box-sizing:border-box;"></div><div style="position:absolute;left:1122.27px;top:606.9px;width:29.9px;height:24.2px;background:#3a2914;border:1px solid #120c06;border-radius:2.5px;box-sizing:border-box;"></div><div style="position:absolute;left:1154.02px;top:606.9px;width:29.9px;height:24.2px;background:#3a2914;border:1px solid #120c06;border-radius:2.5px;box-sizing:border-box;"></div><div style="position:absolute;left:1184.19px;top:606.9px;width:29.9px;height:24.2px;background:#3a2914;border:1px solid #120c06;border-radius:2.5px;box-sizing:border-box;"></div><div style="position:absolute;left:1214.36px;top:606.9px;width:29.9px;height:24.2px;background:#d8861b;border:1px solid #120c06;border-radius:2.5px;box-sizing:border-box;"></div><div style="position:absolute;left:1244.53px;top:606.9px;width:29.9px;height:24.2px;background:#3a2914;border:1px solid #120c06;border-radius:2.5px;box-sizing:border-box;"></div><div style="position:absolute;left:298.2px;top:635.2px;width:29.9px;height:24.2px;background:#3a2914;border:1px solid #120c06;border-radius:2.5px;box-sizing:border-box;"></div><div style="position:absolute;left:328.37px;top:635.2px;width:29.9px;height:24.2px;background:#3a2914;border:1px solid #120c06;border-radius:2.5px;box-sizing:border-box;"></div><div style="position:absolute;left:358.54px;top:635.2px;width:29.9px;height:24.2px;background:#3a2914;border:1px solid #120c06;border-radius:2.5px;box-sizing:border-box;"></div><div style="position:absolute;left:388.71px;top:635.2px;width:29.9px;height:24.2px;background:#3a2914;border:1px solid #120c06;border-radius:2.5px;box-sizing:border-box;"></div><div style="position:absolute;left:420.46px;top:635.2px;width:29.9px;height:24.2px;background:#d8861b;border:1px solid #120c06;border-radius:2.5px;box-sizing:border-box;"></div><div style="position:absolute;left:450.63px;top:635.2px;width:29.9px;height:24.2px;background:#3a2914;border:1px solid #120c06;border-radius:2.5px;box-sizing:border-box;"></div><div style="position:absolute;left:480.8px;top:635.2px;width:29.9px;height:24.2px;background:#3a2914;border:1px solid #120c06;border-radius:2.5px;box-sizing:border-box;"></div><div style="position:absolute;left:510.97px;top:635.2px;width:29.9px;height:24.2px;background:#3a2914;border:1px solid #120c06;border-radius:2.5px;box-sizing:border-box;"></div><div style="position:absolute;left:511.47px;top:635.7px;width:28.9px;height:23.2px;border:1px solid rgba(255,255,255,0.5);border-radius:4px;box-sizing:border-box;"></div><div style="position:absolute;left:542.72px;top:635.2px;width:29.9px;height:24.2px;background:#3a2914;border:1px solid #120c06;border-radius:2.5px;box-sizing:border-box;"></div><div style="position:absolute;left:572.89px;top:635.2px;width:29.9px;height:24.2px;background:#3a2914;border:1px solid #120c06;border-radius:2.5px;box-sizing:border-box;"></div><div style="position:absolute;left:603.06px;top:635.2px;width:29.9px;height:24.2px;background:#3a2914;border:1px solid #120c06;border-radius:2.5px;box-sizing:border-box;"></div><div style="position:absolute;left:633.23px;top:635.2px;width:29.9px;height:24.2px;background:#3a2914;border:1px solid #120c06;border-radius:2.5px;box-sizing:border-box;"></div><div style="position:absolute;left:664.98px;top:635.2px;width:29.9px;height:24.2px;background:#d8861b;border:1px solid #120c06;border-radius:2.5px;box-sizing:border-box;"></div><div style="position:absolute;left:695.15px;top:635.2px;width:29.9px;height:24.2px;background:#3a2914;border:1px solid #120c06;border-radius:2.5px;box-sizing:border-box;"></div><div style="position:absolute;left:725.32px;top:635.2px;width:29.9px;height:24.2px;background:#3a2914;border:1px solid #120c06;border-radius:2.5px;box-sizing:border-box;"></div><div style="position:absolute;left:755.49px;top:635.2px;width:29.9px;height:24.2px;background:#3a2914;border:1px solid #120c06;border-radius:2.5px;box-sizing:border-box;"></div><div style="position:absolute;left:787.24px;top:635.2px;width:29.9px;height:24.2px;background:#3a2914;border:1px solid #120c06;border-radius:2.5px;box-sizing:border-box;"></div><div style="position:absolute;left:817.41px;top:635.2px;width:29.9px;height:24.2px;background:#3a2914;border:1px solid #120c06;border-radius:2.5px;box-sizing:border-box;"></div><div style="position:absolute;left:847.58px;top:635.2px;width:29.9px;height:24.2px;background:#3a2914;border:1px solid #120c06;border-radius:2.5px;box-sizing:border-box;"></div><div style="position:absolute;left:877.75px;top:635.2px;width:29.9px;height:24.2px;background:#3a2914;border:1px solid #120c06;border-radius:2.5px;box-sizing:border-box;"></div><div style="position:absolute;left:909.5px;top:635.2px;width:29.9px;height:24.2px;background:#d8861b;border:1px solid #120c06;border-radius:2.5px;box-sizing:border-box;"></div><div style="position:absolute;left:939.67px;top:635.2px;width:29.9px;height:24.2px;background:#3a2914;border:1px solid #120c06;border-radius:2.5px;box-sizing:border-box;"></div><div style="position:absolute;left:969.84px;top:635.2px;width:29.9px;height:24.2px;background:#3a2914;border:1px solid #120c06;border-radius:2.5px;box-sizing:border-box;"></div><div style="position:absolute;left:1000.01px;top:635.2px;width:29.9px;height:24.2px;background:#3a2914;border:1px solid #120c06;border-radius:2.5px;box-sizing:border-box;"></div><div style="position:absolute;left:1031.76px;top:635.2px;width:29.9px;height:24.2px;background:#3a2914;border:1px solid #120c06;border-radius:2.5px;box-sizing:border-box;"></div><div style="position:absolute;left:1061.93px;top:635.2px;width:29.9px;height:24.2px;background:#3a2914;border:1px solid #120c06;border-radius:2.5px;box-sizing:border-box;"></div><div style="position:absolute;left:1092.1px;top:635.2px;width:29.9px;height:24.2px;background:#3a2914;border:1px solid #120c06;border-radius:2.5px;box-sizing:border-box;"></div><div style="position:absolute;left:1122.27px;top:635.2px;width:29.9px;height:24.2px;background:#3a2914;border:1px solid #120c06;border-radius:2.5px;box-sizing:border-box;"></div><div style="position:absolute;left:1154.02px;top:635.2px;width:29.9px;height:24.2px;background:#d8861b;border:1px solid #120c06;border-radius:2.5px;box-sizing:border-box;"></div><div style="position:absolute;left:1184.19px;top:635.2px;width:29.9px;height:24.2px;background:#d8861b;border:1px solid #120c06;border-radius:2.5px;box-sizing:border-box;"></div><div style="position:absolute;left:1214.36px;top:635.2px;width:29.9px;height:24.2px;background:#d8861b;border:1px solid #120c06;border-radius:2.5px;box-sizing:border-box;"></div><div style="position:absolute;left:1244.53px;top:635.2px;width:29.9px;height:24.2px;background:#d8861b;border:1px solid #120c06;border-radius:2.5px;box-sizing:border-box;"></div><div style="position:absolute;left:298.2px;top:663.5px;width:29.9px;height:24.2px;background:#2a1d3a;border:1px solid #0a0a16;border-radius:2.5px;box-sizing:border-box;"></div><div style="position:absolute;left:328.37px;top:663.5px;width:29.9px;height:24.2px;background:#2a1d3a;border:1px solid #0a0a16;border-radius:2.5px;box-sizing:border-box;"></div><div style="position:absolute;left:358.54px;top:663.5px;width:29.9px;height:24.2px;background:#7c3ed8;border:1px solid #0a0a16;border-radius:2.5px;box-sizing:border-box;"></div><div style="position:absolute;left:388.71px;top:663.5px;width:29.9px;height:24.2px;background:#2a1d3a;border:1px solid #0a0a16;border-radius:2.5px;box-sizing:border-box;"></div><div style="position:absolute;left:420.46px;top:663.5px;width:29.9px;height:24.2px;background:#2a1d3a;border:1px solid #0a0a16;border-radius:2.5px;box-sizing:border-box;"></div><div style="position:absolute;left:450.63px;top:663.5px;width:29.9px;height:24.2px;background:#7c3ed8;border:1px solid #0a0a16;border-radius:2.5px;box-sizing:border-box;"></div><div style="position:absolute;left:480.8px;top:663.5px;width:29.9px;height:24.2px;background:#2a1d3a;border:1px solid #0a0a16;border-radius:2.5px;box-sizing:border-box;"></div><div style="position:absolute;left:510.97px;top:663.5px;width:29.9px;height:24.2px;background:#2a1d3a;border:1px solid #0a0a16;border-radius:2.5px;box-sizing:border-box;"></div><div style="position:absolute;left:511.47px;top:664.0px;width:28.9px;height:23.2px;border:1px solid rgba(255,255,255,0.5);border-radius:4px;box-sizing:border-box;"></div><div style="position:absolute;left:542.72px;top:663.5px;width:29.9px;height:24.2px;background:#2a1d3a;border:1px solid #0a0a16;border-radius:2.5px;box-sizing:border-box;"></div><div style="position:absolute;left:572.89px;top:663.5px;width:29.9px;height:24.2px;background:#2a1d3a;border:1px solid #0a0a16;border-radius:2.5px;box-sizing:border-box;"></div><div style="position:absolute;left:603.06px;top:663.5px;width:29.9px;height:24.2px;background:#2a1d3a;border:1px solid #0a0a16;border-radius:2.5px;box-sizing:border-box;"></div><div style="position:absolute;left:633.23px;top:663.5px;width:29.9px;height:24.2px;background:#7c3ed8;border:1px solid #0a0a16;border-radius:2.5px;box-sizing:border-box;"></div><div style="position:absolute;left:664.98px;top:663.5px;width:29.9px;height:24.2px;background:#2a1d3a;border:1px solid #0a0a16;border-radius:2.5px;box-sizing:border-box;"></div><div style="position:absolute;left:695.15px;top:663.5px;width:29.9px;height:24.2px;background:#2a1d3a;border:1px solid #0a0a16;border-radius:2.5px;box-sizing:border-box;"></div><div style="position:absolute;left:725.32px;top:663.5px;width:29.9px;height:24.2px;background:#2a1d3a;border:1px solid #0a0a16;border-radius:2.5px;box-sizing:border-box;"></div><div style="position:absolute;left:755.49px;top:663.5px;width:29.9px;height:24.2px;background:#2a1d3a;border:1px solid #0a0a16;border-radius:2.5px;box-sizing:border-box;"></div><div style="position:absolute;left:787.24px;top:663.5px;width:29.9px;height:24.2px;background:#2a1d3a;border:1px solid #0a0a16;border-radius:2.5px;box-sizing:border-box;"></div><div style="position:absolute;left:817.41px;top:663.5px;width:29.9px;height:24.2px;background:#7c3ed8;border:1px solid #0a0a16;border-radius:2.5px;box-sizing:border-box;"></div><div style="position:absolute;left:847.58px;top:663.5px;width:29.9px;height:24.2px;background:#2a1d3a;border:1px solid #0a0a16;border-radius:2.5px;box-sizing:border-box;"></div><div style="position:absolute;left:877.75px;top:663.5px;width:29.9px;height:24.2px;background:#2a1d3a;border:1px solid #0a0a16;border-radius:2.5px;box-sizing:border-box;"></div><div style="position:absolute;left:909.5px;top:663.5px;width:29.9px;height:24.2px;background:#2a1d3a;border:1px solid #0a0a16;border-radius:2.5px;box-sizing:border-box;"></div><div style="position:absolute;left:939.67px;top:663.5px;width:29.9px;height:24.2px;background:#7c3ed8;border:1px solid #0a0a16;border-radius:2.5px;box-sizing:border-box;"></div><div style="position:absolute;left:969.84px;top:663.5px;width:29.9px;height:24.2px;background:#2a1d3a;border:1px solid #0a0a16;border-radius:2.5px;box-sizing:border-box;"></div><div style="position:absolute;left:1000.01px;top:663.5px;width:29.9px;height:24.2px;background:#2a1d3a;border:1px solid #0a0a16;border-radius:2.5px;box-sizing:border-box;"></div><div style="position:absolute;left:1031.76px;top:663.5px;width:29.9px;height:24.2px;background:#2a1d3a;border:1px solid #0a0a16;border-radius:2.5px;box-sizing:border-box;"></div><div style="position:absolute;left:1061.93px;top:663.5px;width:29.9px;height:24.2px;background:#2a1d3a;border:1px solid #0a0a16;border-radius:2.5px;box-sizing:border-box;"></div><div style="position:absolute;left:1092.1px;top:663.5px;width:29.9px;height:24.2px;background:#2a1d3a;border:1px solid #0a0a16;border-radius:2.5px;box-sizing:border-box;"></div><div style="position:absolute;left:1122.27px;top:663.5px;width:29.9px;height:24.2px;background:#7c3ed8;border:1px solid #0a0a16;border-radius:2.5px;box-sizing:border-box;"></div><div style="position:absolute;left:1154.02px;top:663.5px;width:29.9px;height:24.2px;background:#2a1d3a;border:1px solid #0a0a16;border-radius:2.5px;box-sizing:border-box;"></div><div style="position:absolute;left:1184.19px;top:663.5px;width:29.9px;height:24.2px;background:#2a1d3a;border:1px solid #0a0a16;border-radius:2.5px;box-sizing:border-box;"></div><div style="position:absolute;left:1214.36px;top:663.5px;width:29.9px;height:24.2px;background:#2a1d3a;border:1px solid #0a0a16;border-radius:2.5px;box-sizing:border-box;"></div><div style="position:absolute;left:1244.53px;top:663.5px;width:29.9px;height:24.2px;background:#2a1d3a;border:1px solid #0a0a16;border-radius:2.5px;box-sizing:border-box;"></div><div style="position:absolute;left:298.2px;top:691.8px;width:29.9px;height:24.2px;background:#2a1d3a;border:1px solid #0a0a16;border-radius:2.5px;box-sizing:border-box;"></div><div style="position:absolute;left:328.37px;top:691.8px;width:29.9px;height:24.2px;background:#2a1d3a;border:1px solid #0a0a16;border-radius:2.5px;box-sizing:border-box;"></div><div style="position:absolute;left:358.54px;top:691.8px;width:29.9px;height:24.2px;background:#2a1d3a;border:1px solid #0a0a16;border-radius:2.5px;box-sizing:border-box;"></div><div style="position:absolute;left:388.71px;top:691.8px;width:29.9px;height:24.2px;background:#2a1d3a;border:1px solid #0a0a16;border-radius:2.5px;box-sizing:border-box;"></div><div style="position:absolute;left:420.46px;top:691.8px;width:29.9px;height:24.2px;background:#2a1d3a;border:1px solid #0a0a16;border-radius:2.5px;box-sizing:border-box;"></div><div style="position:absolute;left:450.63px;top:691.8px;width:29.9px;height:24.2px;background:#2a1d3a;border:1px solid #0a0a16;border-radius:2.5px;box-sizing:border-box;"></div><div style="position:absolute;left:480.8px;top:691.8px;width:29.9px;height:24.2px;background:#2a1d3a;border:1px solid #0a0a16;border-radius:2.5px;box-sizing:border-box;"></div><div style="position:absolute;left:510.97px;top:691.8px;width:29.9px;height:24.2px;background:#2a1d3a;border:1px solid #0a0a16;border-radius:2.5px;box-sizing:border-box;"></div><div style="position:absolute;left:511.47px;top:692.3px;width:28.9px;height:23.2px;border:1px solid rgba(255,255,255,0.5);border-radius:4px;box-sizing:border-box;"></div><div style="position:absolute;left:542.72px;top:691.8px;width:29.9px;height:24.2px;background:#2a1d3a;border:1px solid #0a0a16;border-radius:2.5px;box-sizing:border-box;"></div><div style="position:absolute;left:572.89px;top:691.8px;width:29.9px;height:24.2px;background:#2a1d3a;border:1px solid #0a0a16;border-radius:2.5px;box-sizing:border-box;"></div><div style="position:absolute;left:603.06px;top:691.8px;width:29.9px;height:24.2px;background:#2a1d3a;border:1px solid #0a0a16;border-radius:2.5px;box-sizing:border-box;"></div><div style="position:absolute;left:633.23px;top:691.8px;width:29.9px;height:24.2px;background:#2a1d3a;border:1px solid #0a0a16;border-radius:2.5px;box-sizing:border-box;"></div><div style="position:absolute;left:664.98px;top:691.8px;width:29.9px;height:24.2px;background:#2a1d3a;border:1px solid #0a0a16;border-radius:2.5px;box-sizing:border-box;"></div><div style="position:absolute;left:695.15px;top:691.8px;width:29.9px;height:24.2px;background:#2a1d3a;border:1px solid #0a0a16;border-radius:2.5px;box-sizing:border-box;"></div><div style="position:absolute;left:725.32px;top:691.8px;width:29.9px;height:24.2px;background:#2a1d3a;border:1px solid #0a0a16;border-radius:2.5px;box-sizing:border-box;"></div><div style="position:absolute;left:755.49px;top:691.8px;width:29.9px;height:24.2px;background:#2a1d3a;border:1px solid #0a0a16;border-radius:2.5px;box-sizing:border-box;"></div><div style="position:absolute;left:787.24px;top:691.8px;width:29.9px;height:24.2px;background:#2a1d3a;border:1px solid #0a0a16;border-radius:2.5px;box-sizing:border-box;"></div><div style="position:absolute;left:817.41px;top:691.8px;width:29.9px;height:24.2px;background:#2a1d3a;border:1px solid #0a0a16;border-radius:2.5px;box-sizing:border-box;"></div><div style="position:absolute;left:847.58px;top:691.8px;width:29.9px;height:24.2px;background:#2a1d3a;border:1px solid #0a0a16;border-radius:2.5px;box-sizing:border-box;"></div><div style="position:absolute;left:877.75px;top:691.8px;width:29.9px;height:24.2px;background:#2a1d3a;border:1px solid #0a0a16;border-radius:2.5px;box-sizing:border-box;"></div><div style="position:absolute;left:909.5px;top:691.8px;width:29.9px;height:24.2px;background:#2a1d3a;border:1px solid #0a0a16;border-radius:2.5px;box-sizing:border-box;"></div><div style="position:absolute;left:939.67px;top:691.8px;width:29.9px;height:24.2px;background:#2a1d3a;border:1px solid #0a0a16;border-radius:2.5px;box-sizing:border-box;"></div><div style="position:absolute;left:969.84px;top:691.8px;width:29.9px;height:24.2px;background:#2a1d3a;border:1px solid #0a0a16;border-radius:2.5px;box-sizing:border-box;"></div><div style="position:absolute;left:1000.01px;top:691.8px;width:29.9px;height:24.2px;background:#2a1d3a;border:1px solid #0a0a16;border-radius:2.5px;box-sizing:border-box;"></div><div style="position:absolute;left:1031.76px;top:691.8px;width:29.9px;height:24.2px;background:#2a1d3a;border:1px solid #0a0a16;border-radius:2.5px;box-sizing:border-box;"></div><div style="position:absolute;left:1061.93px;top:691.8px;width:29.9px;height:24.2px;background:#2a1d3a;border:1px solid #0a0a16;border-radius:2.5px;box-sizing:border-box;"></div><div style="position:absolute;left:1092.1px;top:691.8px;width:29.9px;height:24.2px;background:#2a1d3a;border:1px solid #0a0a16;border-radius:2.5px;box-sizing:border-box;"></div><div style="position:absolute;left:1122.27px;top:691.8px;width:29.9px;height:24.2px;background:#2a1d3a;border:1px solid #0a0a16;border-radius:2.5px;box-sizing:border-box;"></div><div style="position:absolute;left:1154.02px;top:691.8px;width:29.9px;height:24.2px;background:#2a1d3a;border:1px solid #0a0a16;border-radius:2.5px;box-sizing:border-box;"></div><div style="position:absolute;left:1184.19px;top:691.8px;width:29.9px;height:24.2px;background:#2a1d3a;border:1px solid #0a0a16;border-radius:2.5px;box-sizing:border-box;"></div><div style="position:absolute;left:1214.36px;top:691.8px;width:29.9px;height:24.2px;background:#2a1d3a;border:1px solid #0a0a16;border-radius:2.5px;box-sizing:border-box;"></div><div style="position:absolute;left:1244.53px;top:691.8px;width:29.9px;height:24.2px;background:#2a1d3a;border:1px solid #0a0a16;border-radius:2.5px;box-sizing:border-box;"></div><div style="position:absolute;left:298.2px;top:720.1px;width:29.9px;height:24.2px;background:#cc14cc;border:1px solid #160612;border-radius:2.5px;box-sizing:border-box;"></div><div style="position:absolute;left:328.37px;top:720.1px;width:29.9px;height:24.2px;background:#37152f;border:1px solid #160612;border-radius:2.5px;box-sizing:border-box;"></div><div style="position:absolute;left:358.54px;top:720.1px;width:29.9px;height:24.2px;background:#37152f;border:1px solid #160612;border-radius:2.5px;box-sizing:border-box;"></div><div style="position:absolute;left:388.71px;top:720.1px;width:29.9px;height:24.2px;background:#37152f;border:1px solid #160612;border-radius:2.5px;box-sizing:border-box;"></div><div style="position:absolute;left:420.46px;top:720.1px;width:29.9px;height:24.2px;background:#cc14cc;border:1px solid #160612;border-radius:2.5px;box-sizing:border-box;"></div><div style="position:absolute;left:450.63px;top:720.1px;width:29.9px;height:24.2px;background:#cc14cc;border:1px solid #160612;border-radius:2.5px;box-sizing:border-box;"></div><div style="position:absolute;left:480.8px;top:720.1px;width:29.9px;height:24.2px;background:#37152f;border:1px solid #160612;border-radius:2.5px;box-sizing:border-box;"></div><div style="position:absolute;left:510.97px;top:720.1px;width:29.9px;height:24.2px;background:#37152f;border:1px solid #160612;border-radius:2.5px;box-sizing:border-box;"></div><div style="position:absolute;left:511.47px;top:720.6px;width:28.9px;height:23.2px;border:1px solid rgba(255,255,255,0.5);border-radius:4px;box-sizing:border-box;"></div><div style="position:absolute;left:542.72px;top:720.1px;width:29.9px;height:24.2px;background:#cc14cc;border:1px solid #160612;border-radius:2.5px;box-sizing:border-box;"></div><div style="position:absolute;left:572.89px;top:720.1px;width:29.9px;height:24.2px;background:#37152f;border:1px solid #160612;border-radius:2.5px;box-sizing:border-box;"></div><div style="position:absolute;left:603.06px;top:720.1px;width:29.9px;height:24.2px;background:#37152f;border:1px solid #160612;border-radius:2.5px;box-sizing:border-box;"></div><div style="position:absolute;left:633.23px;top:720.1px;width:29.9px;height:24.2px;background:#37152f;border:1px solid #160612;border-radius:2.5px;box-sizing:border-box;"></div><div style="position:absolute;left:664.98px;top:720.1px;width:29.9px;height:24.2px;background:#cc14cc;border:1px solid #160612;border-radius:2.5px;box-sizing:border-box;"></div><div style="position:absolute;left:695.15px;top:720.1px;width:29.9px;height:24.2px;background:#37152f;border:1px solid #160612;border-radius:2.5px;box-sizing:border-box;"></div><div style="position:absolute;left:725.32px;top:720.1px;width:29.9px;height:24.2px;background:#37152f;border:1px solid #160612;border-radius:2.5px;box-sizing:border-box;"></div><div style="position:absolute;left:755.49px;top:720.1px;width:29.9px;height:24.2px;background:#37152f;border:1px solid #160612;border-radius:2.5px;box-sizing:border-box;"></div><div style="position:absolute;left:787.24px;top:720.1px;width:29.9px;height:24.2px;background:#cc14cc;border:1px solid #160612;border-radius:2.5px;box-sizing:border-box;"></div><div style="position:absolute;left:817.41px;top:720.1px;width:29.9px;height:24.2px;background:#37152f;border:1px solid #160612;border-radius:2.5px;box-sizing:border-box;"></div><div style="position:absolute;left:847.58px;top:720.1px;width:29.9px;height:24.2px;background:#37152f;border:1px solid #160612;border-radius:2.5px;box-sizing:border-box;"></div><div style="position:absolute;left:877.75px;top:720.1px;width:29.9px;height:24.2px;background:#cc14cc;border:1px solid #160612;border-radius:2.5px;box-sizing:border-box;"></div><div style="position:absolute;left:909.5px;top:720.1px;width:29.9px;height:24.2px;background:#cc14cc;border:1px solid #160612;border-radius:2.5px;box-sizing:border-box;"></div><div style="position:absolute;left:939.67px;top:720.1px;width:29.9px;height:24.2px;background:#cc14cc;border:1px solid #160612;border-radius:2.5px;box-sizing:border-box;"></div><div style="position:absolute;left:969.84px;top:720.1px;width:29.9px;height:24.2px;background:#37152f;border:1px solid #160612;border-radius:2.5px;box-sizing:border-box;"></div><div style="position:absolute;left:1000.01px;top:720.1px;width:29.9px;height:24.2px;background:#37152f;border:1px solid #160612;border-radius:2.5px;box-sizing:border-box;"></div><div style="position:absolute;left:1031.76px;top:720.1px;width:29.9px;height:24.2px;background:#37152f;border:1px solid #160612;border-radius:2.5px;box-sizing:border-box;"></div><div style="position:absolute;left:1061.93px;top:720.1px;width:29.9px;height:24.2px;background:#37152f;border:1px solid #160612;border-radius:2.5px;box-sizing:border-box;"></div><div style="position:absolute;left:1092.1px;top:720.1px;width:29.9px;height:24.2px;background:#37152f;border:1px solid #160612;border-radius:2.5px;box-sizing:border-box;"></div><div style="position:absolute;left:1122.27px;top:720.1px;width:29.9px;height:24.2px;background:#37152f;border:1px solid #160612;border-radius:2.5px;box-sizing:border-box;"></div><div style="position:absolute;left:1154.02px;top:720.1px;width:29.9px;height:24.2px;background:#37152f;border:1px solid #160612;border-radius:2.5px;box-sizing:border-box;"></div><div style="position:absolute;left:1184.19px;top:720.1px;width:29.9px;height:24.2px;background:#37152f;border:1px solid #160612;border-radius:2.5px;box-sizing:border-box;"></div><div style="position:absolute;left:1214.36px;top:720.1px;width:29.9px;height:24.2px;background:#37152f;border:1px solid #160612;border-radius:2.5px;box-sizing:border-box;"></div><div style="position:absolute;left:1244.53px;top:720.1px;width:29.9px;height:24.2px;background:#37152f;border:1px solid #160612;border-radius:2.5px;box-sizing:border-box;"></div><div style="position:absolute;left:298.2px;top:747.4px;width:29.9px;height:26.5px;background:#cc14cc;border:1px solid #160612;border-radius:2.5px;box-sizing:border-box;"></div><div style="position:absolute;left:299.2px;top:748.4px;width:27.9px;height:4.41px;background:#a0189c;border-radius:3px 3px 0 0;"></div><div style="position:absolute;left:299.2px;top:752.11px;width:27.9px;height:1.6px;background:#f5a0f5;"></div><div style="position:absolute;left:328.37px;top:747.4px;width:29.9px;height:26.5px;background:#3d1a3e;border:1px solid #160612;border-radius:2.5px;box-sizing:border-box;"></div><div style="position:absolute;left:358.54px;top:747.4px;width:29.9px;height:26.5px;background:#3d1a3e;border:1px solid #160612;border-radius:2.5px;box-sizing:border-box;"></div><div style="position:absolute;left:388.71px;top:747.4px;width:29.9px;height:26.5px;background:#3d1a3e;border:1px solid #160612;border-radius:2.5px;box-sizing:border-box;"></div><div style="position:absolute;left:420.46px;top:747.4px;width:29.9px;height:26.5px;background:#cc14cc;border:1px solid #160612;border-radius:2.5px;box-sizing:border-box;"></div><div style="position:absolute;left:421.46px;top:748.4px;width:27.9px;height:11.76px;background:#a0189c;border-radius:3px 3px 0 0;"></div><div style="position:absolute;left:421.46px;top:759.46px;width:27.9px;height:1.6px;background:#f5a0f5;"></div><div style="position:absolute;left:450.63px;top:747.4px;width:29.9px;height:26.5px;background:#cc14cc;border:1px solid #160612;border-radius:2.5px;box-sizing:border-box;"></div><div style="position:absolute;left:451.63px;top:748.4px;width:27.9px;height:5.14px;background:#a0189c;border-radius:3px 3px 0 0;"></div><div style="position:absolute;left:451.63px;top:752.84px;width:27.9px;height:1.6px;background:#f5a0f5;"></div><div style="position:absolute;left:480.8px;top:747.4px;width:29.9px;height:26.5px;background:#3d1a3e;border:1px solid #160612;border-radius:2.5px;box-sizing:border-box;"></div><div style="position:absolute;left:510.97px;top:747.4px;width:29.9px;height:26.5px;background:#3d1a3e;border:1px solid #160612;border-radius:2.5px;box-sizing:border-box;"></div><div style="position:absolute;left:542.72px;top:747.4px;width:29.9px;height:26.5px;background:#cc14cc;border:1px solid #160612;border-radius:2.5px;box-sizing:border-box;"></div><div style="position:absolute;left:543.72px;top:748.4px;width:27.9px;height:4.41px;background:#a0189c;border-radius:3px 3px 0 0;"></div><div style="position:absolute;left:543.72px;top:752.11px;width:27.9px;height:1.6px;background:#f5a0f5;"></div><div style="position:absolute;left:572.89px;top:747.4px;width:29.9px;height:26.5px;background:#3d1a3e;border:1px solid #160612;border-radius:2.5px;box-sizing:border-box;"></div><div style="position:absolute;left:603.06px;top:747.4px;width:29.9px;height:26.5px;background:#3d1a3e;border:1px solid #160612;border-radius:2.5px;box-sizing:border-box;"></div><div style="position:absolute;left:633.23px;top:747.4px;width:29.9px;height:26.5px;background:#3d1a3e;border:1px solid #160612;border-radius:2.5px;box-sizing:border-box;"></div><div style="position:absolute;left:664.98px;top:747.4px;width:29.9px;height:26.5px;background:#cc14cc;border:1px solid #160612;border-radius:2.5px;box-sizing:border-box;"></div><div style="position:absolute;left:665.98px;top:748.4px;width:27.9px;height:4.41px;background:#a0189c;border-radius:3px 3px 0 0;"></div><div style="position:absolute;left:665.98px;top:752.11px;width:27.9px;height:1.6px;background:#f5a0f5;"></div><div style="position:absolute;left:695.15px;top:747.4px;width:29.9px;height:26.5px;background:#3d1a3e;border:1px solid #160612;border-radius:2.5px;box-sizing:border-box;"></div><div style="position:absolute;left:725.32px;top:747.4px;width:29.9px;height:26.5px;background:#3d1a3e;border:1px solid #160612;border-radius:2.5px;box-sizing:border-box;"></div><div style="position:absolute;left:755.49px;top:747.4px;width:29.9px;height:26.5px;background:#3d1a3e;border:1px solid #160612;border-radius:2.5px;box-sizing:border-box;"></div><div style="position:absolute;left:787.24px;top:747.4px;width:29.9px;height:26.5px;background:#cc14cc;border:1px solid #160612;border-radius:2.5px;box-sizing:border-box;"></div><div style="position:absolute;left:788.24px;top:748.4px;width:27.9px;height:4.41px;background:#a0189c;border-radius:3px 3px 0 0;"></div><div style="position:absolute;left:788.24px;top:752.11px;width:27.9px;height:1.6px;background:#f5a0f5;"></div><div style="position:absolute;left:817.41px;top:747.4px;width:29.9px;height:26.5px;background:#3d1a3e;border:1px solid #160612;border-radius:2.5px;box-sizing:border-box;"></div><div style="position:absolute;left:847.58px;top:747.4px;width:29.9px;height:26.5px;background:#3d1a3e;border:1px solid #160612;border-radius:2.5px;box-sizing:border-box;"></div><div style="position:absolute;left:877.75px;top:747.4px;width:29.9px;height:26.5px;background:#cc14cc;border:1px solid #160612;border-radius:2.5px;box-sizing:border-box;"></div><div style="position:absolute;left:878.75px;top:748.4px;width:27.9px;height:13.96px;background:#a0189c;border-radius:3px 3px 0 0;"></div><div style="position:absolute;left:878.75px;top:761.66px;width:27.9px;height:1.6px;background:#f5a0f5;"></div><div style="position:absolute;left:909.5px;top:747.4px;width:29.9px;height:26.5px;background:#cc14cc;border:1px solid #160612;border-radius:2.5px;box-sizing:border-box;"></div><div style="position:absolute;left:910.5px;top:748.4px;width:27.9px;height:11.27px;background:#a0189c;border-radius:3px 3px 0 0;"></div><div style="position:absolute;left:910.5px;top:758.97px;width:27.9px;height:1.6px;background:#f5a0f5;"></div><div style="position:absolute;left:939.67px;top:747.4px;width:29.9px;height:26.5px;background:#cc14cc;border:1px solid #160612;border-radius:2.5px;box-sizing:border-box;"></div><div style="position:absolute;left:940.67px;top:748.4px;width:27.9px;height:4.41px;background:#a0189c;border-radius:3px 3px 0 0;"></div><div style="position:absolute;left:940.67px;top:752.11px;width:27.9px;height:1.6px;background:#f5a0f5;"></div><div style="position:absolute;left:969.84px;top:747.4px;width:29.9px;height:26.5px;background:#3d1a3e;border:1px solid #160612;border-radius:2.5px;box-sizing:border-box;"></div><div style="position:absolute;left:1000.01px;top:747.4px;width:29.9px;height:26.5px;background:#3d1a3e;border:1px solid #160612;border-radius:2.5px;box-sizing:border-box;"></div><div style="position:absolute;left:1031.76px;top:747.4px;width:29.9px;height:26.5px;background:#3d1a3e;border:1px solid #160612;border-radius:2.5px;box-sizing:border-box;"></div><div style="position:absolute;left:1061.93px;top:747.4px;width:29.9px;height:26.5px;background:#3d1a3e;border:1px solid #160612;border-radius:2.5px;box-sizing:border-box;"></div><div style="position:absolute;left:1092.1px;top:747.4px;width:29.9px;height:26.5px;background:#3d1a3e;border:1px solid #160612;border-radius:2.5px;box-sizing:border-box;"></div><div style="position:absolute;left:1122.27px;top:747.4px;width:29.9px;height:26.5px;background:#3d1a3e;border:1px solid #160612;border-radius:2.5px;box-sizing:border-box;"></div><div style="position:absolute;left:1154.02px;top:747.4px;width:29.9px;height:26.5px;background:#3d1a3e;border:1px solid #160612;border-radius:2.5px;box-sizing:border-box;"></div><div style="position:absolute;left:1184.19px;top:747.4px;width:29.9px;height:26.5px;background:#3d1a3e;border:1px solid #160612;border-radius:2.5px;box-sizing:border-box;"></div><div style="position:absolute;left:1214.36px;top:747.4px;width:29.9px;height:26.5px;background:#3d1a3e;border:1px solid #160612;border-radius:2.5px;box-sizing:border-box;"></div><div style="position:absolute;left:1244.53px;top:747.4px;width:29.9px;height:26.5px;background:#3d1a3e;border:1px solid #160612;border-radius:2.5px;box-sizing:border-box;"></div><div style="position:absolute;left:298.2px;top:775.9px;width:29.9px;height:26.2px;background:#cc14cc;border:1px solid #160612;border-radius:2.5px;box-sizing:border-box;"></div><div style="position:absolute;left:312.15px;top:784.0px;width:2px;height:2px;background:#f5c0f5;border-radius:50%;"></div><div style="position:absolute;left:312.15px;top:788.0px;width:2px;height:2px;background:#f5c0f5;border-radius:50%;"></div><div style="position:absolute;left:312.15px;top:792.0px;width:2px;height:2px;background:#f5c0f5;border-radius:50%;"></div><div style="position:absolute;left:328.37px;top:775.9px;width:29.9px;height:26.2px;background:#3d1a3e;border:1px solid #160612;border-radius:2.5px;box-sizing:border-box;"></div><div style="position:absolute;left:342.32px;top:784.0px;width:2px;height:2px;background:#5a3458;border-radius:50%;"></div><div style="position:absolute;left:342.32px;top:788.0px;width:2px;height:2px;background:#5a3458;border-radius:50%;"></div><div style="position:absolute;left:342.32px;top:792.0px;width:2px;height:2px;background:#5a3458;border-radius:50%;"></div><div style="position:absolute;left:358.54px;top:775.9px;width:29.9px;height:26.2px;background:#3d1a3e;border:1px solid #160612;border-radius:2.5px;box-sizing:border-box;"></div><div style="position:absolute;left:372.49px;top:784.0px;width:2px;height:2px;background:#5a3458;border-radius:50%;"></div><div style="position:absolute;left:372.49px;top:788.0px;width:2px;height:2px;background:#5a3458;border-radius:50%;"></div><div style="position:absolute;left:372.49px;top:792.0px;width:2px;height:2px;background:#5a3458;border-radius:50%;"></div><div style="position:absolute;left:388.71px;top:775.9px;width:29.9px;height:26.2px;background:#3d1a3e;border:1px solid #160612;border-radius:2.5px;box-sizing:border-box;"></div><div style="position:absolute;left:402.66px;top:784.0px;width:2px;height:2px;background:#5a3458;border-radius:50%;"></div><div style="position:absolute;left:402.66px;top:788.0px;width:2px;height:2px;background:#5a3458;border-radius:50%;"></div><div style="position:absolute;left:402.66px;top:792.0px;width:2px;height:2px;background:#5a3458;border-radius:50%;"></div><div style="position:absolute;left:420.46px;top:775.9px;width:29.9px;height:26.2px;background:#cc14cc;border:1px solid #160612;border-radius:2.5px;box-sizing:border-box;"></div><div style="position:absolute;left:427.83px;top:776.9px;width:1.3px;height:24.2px;background:#5a0c5a;"></div><div style="position:absolute;left:434.81px;top:776.9px;width:1.3px;height:24.2px;background:#5a0c5a;"></div><div style="position:absolute;left:441.78px;top:776.9px;width:1.3px;height:24.2px;background:#5a0c5a;"></div><div style="position:absolute;left:450.63px;top:775.9px;width:29.9px;height:26.2px;background:#cc14cc;border:1px solid #160612;border-radius:2.5px;box-sizing:border-box;"></div><div style="position:absolute;left:455.68px;top:776.9px;width:1.3px;height:24.2px;background:#5a0c5a;"></div><div style="position:absolute;left:460.33px;top:776.9px;width:1.3px;height:24.2px;background:#5a0c5a;"></div><div style="position:absolute;left:464.98px;top:776.9px;width:1.3px;height:24.2px;background:#5a0c5a;"></div><div style="position:absolute;left:469.63px;top:776.9px;width:1.3px;height:24.2px;background:#5a0c5a;"></div><div style="position:absolute;left:474.28px;top:776.9px;width:1.3px;height:24.2px;background:#5a0c5a;"></div><div style="position:absolute;left:480.8px;top:775.9px;width:29.9px;height:26.2px;background:#3d1a3e;border:1px solid #160612;border-radius:2.5px;box-sizing:border-box;"></div><div style="position:absolute;left:494.75px;top:784.0px;width:2px;height:2px;background:#5a3458;border-radius:50%;"></div><div style="position:absolute;left:494.75px;top:788.0px;width:2px;height:2px;background:#5a3458;border-radius:50%;"></div><div style="position:absolute;left:494.75px;top:792.0px;width:2px;height:2px;background:#5a3458;border-radius:50%;"></div><div style="position:absolute;left:510.97px;top:775.9px;width:29.9px;height:26.2px;background:#3d1a3e;border:1px solid #160612;border-radius:2.5px;box-sizing:border-box;"></div><div style="position:absolute;left:524.92px;top:784.0px;width:2px;height:2px;background:#5a3458;border-radius:50%;"></div><div style="position:absolute;left:524.92px;top:788.0px;width:2px;height:2px;background:#5a3458;border-radius:50%;"></div><div style="position:absolute;left:524.92px;top:792.0px;width:2px;height:2px;background:#5a3458;border-radius:50%;"></div><div style="position:absolute;left:542.72px;top:775.9px;width:29.9px;height:26.2px;background:#cc14cc;border:1px solid #160612;border-radius:2.5px;box-sizing:border-box;"></div><div style="position:absolute;left:556.67px;top:784.0px;width:2px;height:2px;background:#f5c0f5;border-radius:50%;"></div><div style="position:absolute;left:556.67px;top:788.0px;width:2px;height:2px;background:#f5c0f5;border-radius:50%;"></div><div style="position:absolute;left:556.67px;top:792.0px;width:2px;height:2px;background:#f5c0f5;border-radius:50%;"></div><div style="position:absolute;left:572.89px;top:775.9px;width:29.9px;height:26.2px;background:#3d1a3e;border:1px solid #160612;border-radius:2.5px;box-sizing:border-box;"></div><div style="position:absolute;left:586.84px;top:784.0px;width:2px;height:2px;background:#5a3458;border-radius:50%;"></div><div style="position:absolute;left:586.84px;top:788.0px;width:2px;height:2px;background:#5a3458;border-radius:50%;"></div><div style="position:absolute;left:586.84px;top:792.0px;width:2px;height:2px;background:#5a3458;border-radius:50%;"></div><div style="position:absolute;left:603.06px;top:775.9px;width:29.9px;height:26.2px;background:#3d1a3e;border:1px solid #160612;border-radius:2.5px;box-sizing:border-box;"></div><div style="position:absolute;left:617.01px;top:784.0px;width:2px;height:2px;background:#5a3458;border-radius:50%;"></div><div style="position:absolute;left:617.01px;top:788.0px;width:2px;height:2px;background:#5a3458;border-radius:50%;"></div><div style="position:absolute;left:617.01px;top:792.0px;width:2px;height:2px;background:#5a3458;border-radius:50%;"></div><div style="position:absolute;left:633.23px;top:775.9px;width:29.9px;height:26.2px;background:#3d1a3e;border:1px solid #160612;border-radius:2.5px;box-sizing:border-box;"></div><div style="position:absolute;left:647.18px;top:784.0px;width:2px;height:2px;background:#5a3458;border-radius:50%;"></div><div style="position:absolute;left:647.18px;top:788.0px;width:2px;height:2px;background:#5a3458;border-radius:50%;"></div><div style="position:absolute;left:647.18px;top:792.0px;width:2px;height:2px;background:#5a3458;border-radius:50%;"></div><div style="position:absolute;left:664.98px;top:775.9px;width:29.9px;height:26.2px;background:#cc14cc;border:1px solid #160612;border-radius:2.5px;box-sizing:border-box;"></div><div style="position:absolute;left:678.93px;top:784.0px;width:2px;height:2px;background:#f5c0f5;border-radius:50%;"></div><div style="position:absolute;left:678.93px;top:788.0px;width:2px;height:2px;background:#f5c0f5;border-radius:50%;"></div><div style="position:absolute;left:678.93px;top:792.0px;width:2px;height:2px;background:#f5c0f5;border-radius:50%;"></div><div style="position:absolute;left:695.15px;top:775.9px;width:29.9px;height:26.2px;background:#3d1a3e;border:1px solid #160612;border-radius:2.5px;box-sizing:border-box;"></div><div style="position:absolute;left:709.1px;top:784.0px;width:2px;height:2px;background:#5a3458;border-radius:50%;"></div><div style="position:absolute;left:709.1px;top:788.0px;width:2px;height:2px;background:#5a3458;border-radius:50%;"></div><div style="position:absolute;left:709.1px;top:792.0px;width:2px;height:2px;background:#5a3458;border-radius:50%;"></div><div style="position:absolute;left:725.32px;top:775.9px;width:29.9px;height:26.2px;background:#3d1a3e;border:1px solid #160612;border-radius:2.5px;box-sizing:border-box;"></div><div style="position:absolute;left:739.27px;top:784.0px;width:2px;height:2px;background:#5a3458;border-radius:50%;"></div><div style="position:absolute;left:739.27px;top:788.0px;width:2px;height:2px;background:#5a3458;border-radius:50%;"></div><div style="position:absolute;left:739.27px;top:792.0px;width:2px;height:2px;background:#5a3458;border-radius:50%;"></div><div style="position:absolute;left:755.49px;top:775.9px;width:29.9px;height:26.2px;background:#3d1a3e;border:1px solid #160612;border-radius:2.5px;box-sizing:border-box;"></div><div style="position:absolute;left:769.44px;top:784.0px;width:2px;height:2px;background:#5a3458;border-radius:50%;"></div><div style="position:absolute;left:769.44px;top:788.0px;width:2px;height:2px;background:#5a3458;border-radius:50%;"></div><div style="position:absolute;left:769.44px;top:792.0px;width:2px;height:2px;background:#5a3458;border-radius:50%;"></div><div style="position:absolute;left:787.24px;top:775.9px;width:29.9px;height:26.2px;background:#cc14cc;border:1px solid #160612;border-radius:2.5px;box-sizing:border-box;"></div><div style="position:absolute;left:801.19px;top:784.0px;width:2px;height:2px;background:#f5c0f5;border-radius:50%;"></div><div style="position:absolute;left:801.19px;top:788.0px;width:2px;height:2px;background:#f5c0f5;border-radius:50%;"></div><div style="position:absolute;left:801.19px;top:792.0px;width:2px;height:2px;background:#f5c0f5;border-radius:50%;"></div><div style="position:absolute;left:817.41px;top:775.9px;width:29.9px;height:26.2px;background:#3d1a3e;border:1px solid #160612;border-radius:2.5px;box-sizing:border-box;"></div><div style="position:absolute;left:831.36px;top:784.0px;width:2px;height:2px;background:#5a3458;border-radius:50%;"></div><div style="position:absolute;left:831.36px;top:788.0px;width:2px;height:2px;background:#5a3458;border-radius:50%;"></div><div style="position:absolute;left:831.36px;top:792.0px;width:2px;height:2px;background:#5a3458;border-radius:50%;"></div><div style="position:absolute;left:847.58px;top:775.9px;width:29.9px;height:26.2px;background:#3d1a3e;border:1px solid #160612;border-radius:2.5px;box-sizing:border-box;"></div><div style="position:absolute;left:861.53px;top:784.0px;width:2px;height:2px;background:#5a3458;border-radius:50%;"></div><div style="position:absolute;left:861.53px;top:788.0px;width:2px;height:2px;background:#5a3458;border-radius:50%;"></div><div style="position:absolute;left:861.53px;top:792.0px;width:2px;height:2px;background:#5a3458;border-radius:50%;"></div><div style="position:absolute;left:877.75px;top:775.9px;width:29.9px;height:26.2px;background:#cc14cc;border:1px solid #160612;border-radius:2.5px;box-sizing:border-box;"></div><div style="position:absolute;left:887.45px;top:776.9px;width:1.3px;height:24.2px;background:#5a0c5a;"></div><div style="position:absolute;left:896.75px;top:776.9px;width:1.3px;height:24.2px;background:#5a0c5a;"></div><div style="position:absolute;left:909.5px;top:775.9px;width:29.9px;height:26.2px;background:#cc14cc;border:1px solid #160612;border-radius:2.5px;box-sizing:border-box;"></div><div style="position:absolute;left:916.88px;top:776.9px;width:1.3px;height:24.2px;background:#5a0c5a;"></div><div style="position:absolute;left:923.85px;top:776.9px;width:1.3px;height:24.2px;background:#5a0c5a;"></div><div style="position:absolute;left:930.82px;top:776.9px;width:1.3px;height:24.2px;background:#5a0c5a;"></div><div style="position:absolute;left:939.67px;top:775.9px;width:29.9px;height:26.2px;background:#cc14cc;border:1px solid #160612;border-radius:2.5px;box-sizing:border-box;"></div><div style="position:absolute;left:943.56px;top:776.9px;width:1.3px;height:24.2px;background:#5a0c5a;"></div><div style="position:absolute;left:947.04px;top:776.9px;width:1.3px;height:24.2px;background:#5a0c5a;"></div><div style="position:absolute;left:950.53px;top:776.9px;width:1.3px;height:24.2px;background:#5a0c5a;"></div><div style="position:absolute;left:954.02px;top:776.9px;width:1.3px;height:24.2px;background:#5a0c5a;"></div><div style="position:absolute;left:957.51px;top:776.9px;width:1.3px;height:24.2px;background:#5a0c5a;"></div><div style="position:absolute;left:960.99px;top:776.9px;width:1.3px;height:24.2px;background:#5a0c5a;"></div><div style="position:absolute;left:964.48px;top:776.9px;width:1.3px;height:24.2px;background:#5a0c5a;"></div><div style="position:absolute;left:969.84px;top:775.9px;width:29.9px;height:26.2px;background:#3d1a3e;border:1px solid #160612;border-radius:2.5px;box-sizing:border-box;"></div><div style="position:absolute;left:983.79px;top:784.0px;width:2px;height:2px;background:#5a3458;border-radius:50%;"></div><div style="position:absolute;left:983.79px;top:788.0px;width:2px;height:2px;background:#5a3458;border-radius:50%;"></div><div style="position:absolute;left:983.79px;top:792.0px;width:2px;height:2px;background:#5a3458;border-radius:50%;"></div><div style="position:absolute;left:1000.01px;top:775.9px;width:29.9px;height:26.2px;background:#3d1a3e;border:1px solid #160612;border-radius:2.5px;box-sizing:border-box;"></div><div style="position:absolute;left:1013.96px;top:784.0px;width:2px;height:2px;background:#5a3458;border-radius:50%;"></div><div style="position:absolute;left:1013.96px;top:788.0px;width:2px;height:2px;background:#5a3458;border-radius:50%;"></div><div style="position:absolute;left:1013.96px;top:792.0px;width:2px;height:2px;background:#5a3458;border-radius:50%;"></div><div style="position:absolute;left:1031.76px;top:775.9px;width:29.9px;height:26.2px;background:#3d1a3e;border:1px solid #160612;border-radius:2.5px;box-sizing:border-box;"></div><div style="position:absolute;left:1045.71px;top:784.0px;width:2px;height:2px;background:#5a3458;border-radius:50%;"></div><div style="position:absolute;left:1045.71px;top:788.0px;width:2px;height:2px;background:#5a3458;border-radius:50%;"></div><div style="position:absolute;left:1045.71px;top:792.0px;width:2px;height:2px;background:#5a3458;border-radius:50%;"></div><div style="position:absolute;left:1061.93px;top:775.9px;width:29.9px;height:26.2px;background:#3d1a3e;border:1px solid #160612;border-radius:2.5px;box-sizing:border-box;"></div><div style="position:absolute;left:1075.88px;top:784.0px;width:2px;height:2px;background:#5a3458;border-radius:50%;"></div><div style="position:absolute;left:1075.88px;top:788.0px;width:2px;height:2px;background:#5a3458;border-radius:50%;"></div><div style="position:absolute;left:1075.88px;top:792.0px;width:2px;height:2px;background:#5a3458;border-radius:50%;"></div><div style="position:absolute;left:1092.1px;top:775.9px;width:29.9px;height:26.2px;background:#3d1a3e;border:1px solid #160612;border-radius:2.5px;box-sizing:border-box;"></div><div style="position:absolute;left:1106.05px;top:784.0px;width:2px;height:2px;background:#5a3458;border-radius:50%;"></div><div style="position:absolute;left:1106.05px;top:788.0px;width:2px;height:2px;background:#5a3458;border-radius:50%;"></div><div style="position:absolute;left:1106.05px;top:792.0px;width:2px;height:2px;background:#5a3458;border-radius:50%;"></div><div style="position:absolute;left:1122.27px;top:775.9px;width:29.9px;height:26.2px;background:#3d1a3e;border:1px solid #160612;border-radius:2.5px;box-sizing:border-box;"></div><div style="position:absolute;left:1136.22px;top:784.0px;width:2px;height:2px;background:#5a3458;border-radius:50%;"></div><div style="position:absolute;left:1136.22px;top:788.0px;width:2px;height:2px;background:#5a3458;border-radius:50%;"></div><div style="position:absolute;left:1136.22px;top:792.0px;width:2px;height:2px;background:#5a3458;border-radius:50%;"></div><div style="position:absolute;left:1154.02px;top:775.9px;width:29.9px;height:26.2px;background:#3d1a3e;border:1px solid #160612;border-radius:2.5px;box-sizing:border-box;"></div><div style="position:absolute;left:1167.97px;top:784.0px;width:2px;height:2px;background:#5a3458;border-radius:50%;"></div><div style="position:absolute;left:1167.97px;top:788.0px;width:2px;height:2px;background:#5a3458;border-radius:50%;"></div><div style="position:absolute;left:1167.97px;top:792.0px;width:2px;height:2px;background:#5a3458;border-radius:50%;"></div><div style="position:absolute;left:1184.19px;top:775.9px;width:29.9px;height:26.2px;background:#3d1a3e;border:1px solid #160612;border-radius:2.5px;box-sizing:border-box;"></div><div style="position:absolute;left:1198.14px;top:784.0px;width:2px;height:2px;background:#5a3458;border-radius:50%;"></div><div style="position:absolute;left:1198.14px;top:788.0px;width:2px;height:2px;background:#5a3458;border-radius:50%;"></div><div style="position:absolute;left:1198.14px;top:792.0px;width:2px;height:2px;background:#5a3458;border-radius:50%;"></div><div style="position:absolute;left:1214.36px;top:775.9px;width:29.9px;height:26.2px;background:#3d1a3e;border:1px solid #160612;border-radius:2.5px;box-sizing:border-box;"></div><div style="position:absolute;left:1228.31px;top:784.0px;width:2px;height:2px;background:#5a3458;border-radius:50%;"></div><div style="position:absolute;left:1228.31px;top:788.0px;width:2px;height:2px;background:#5a3458;border-radius:50%;"></div><div style="position:absolute;left:1228.31px;top:792.0px;width:2px;height:2px;background:#5a3458;border-radius:50%;"></div><div style="position:absolute;left:1244.53px;top:775.9px;width:29.9px;height:26.2px;background:#3d1a3e;border:1px solid #160612;border-radius:2.5px;box-sizing:border-box;"></div><div style="position:absolute;left:1258.48px;top:784.0px;width:2px;height:2px;background:#5a3458;border-radius:50%;"></div><div style="position:absolute;left:1258.48px;top:788.0px;width:2px;height:2px;background:#5a3458;border-radius:50%;"></div><div style="position:absolute;left:1258.48px;top:792.0px;width:2px;height:2px;background:#5a3458;border-radius:50%;"></div><div style="position:absolute;left:1277px;top:406.5px;width:9px;height:311.5px;background:#1f1f1f;"></div><div style="position:absolute;left:1277px;top:718px;width:9px;height:86px;background:#2d202d;"></div>
</body></html>
